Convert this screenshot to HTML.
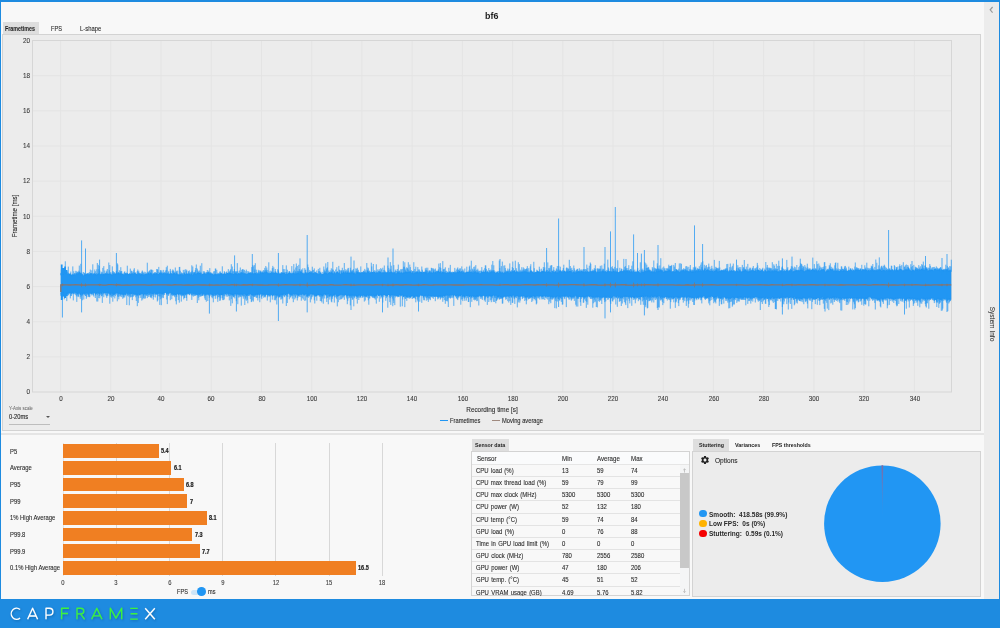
<!DOCTYPE html>
<html><head><meta charset="utf-8"><style>
*{margin:0;padding:0;box-sizing:border-box}
html,body{width:1000px;height:628px;overflow:hidden}
body{position:relative;background:#f8f8f8;font-family:"Liberation Sans", sans-serif;color:#333}
.a{position:absolute}
.bar{position:absolute;left:63.1px;height:13.5px;background:#f07f22}
</style></head><body>
<div class="a" style="left:0;top:0;width:1000px;height:1.5px;background:#1e8be0"></div>
<div class="a" style="left:0;top:0;width:1px;height:628px;background:#1e8be0"></div>
<div class="a" style="left:998.6px;top:0;width:1.4px;height:628px;background:#1e8be0"></div>

<div class="a" style="left:3px;top:22px;width:35.5px;height:12.5px;background:#dedede"></div>

<div class="a" style="left:2px;top:34px;width:979px;height:397px;background:#ececec;border:1px solid #d3d3d3"></div>
<svg class="a" style="left:0;top:0" width="1000" height="628" viewBox="0 0 1000 628">
<line x1="60.60" y1="40.5" x2="60.60" y2="392.0" stroke="#e4e4e4" stroke-width="1"/>
<line x1="110.82" y1="40.5" x2="110.82" y2="392.0" stroke="#e4e4e4" stroke-width="1"/>
<line x1="161.04" y1="40.5" x2="161.04" y2="392.0" stroke="#e4e4e4" stroke-width="1"/>
<line x1="211.26" y1="40.5" x2="211.26" y2="392.0" stroke="#e4e4e4" stroke-width="1"/>
<line x1="261.48" y1="40.5" x2="261.48" y2="392.0" stroke="#e4e4e4" stroke-width="1"/>
<line x1="311.70" y1="40.5" x2="311.70" y2="392.0" stroke="#e4e4e4" stroke-width="1"/>
<line x1="361.92" y1="40.5" x2="361.92" y2="392.0" stroke="#e4e4e4" stroke-width="1"/>
<line x1="412.14" y1="40.5" x2="412.14" y2="392.0" stroke="#e4e4e4" stroke-width="1"/>
<line x1="462.36" y1="40.5" x2="462.36" y2="392.0" stroke="#e4e4e4" stroke-width="1"/>
<line x1="512.58" y1="40.5" x2="512.58" y2="392.0" stroke="#e4e4e4" stroke-width="1"/>
<line x1="562.80" y1="40.5" x2="562.80" y2="392.0" stroke="#e4e4e4" stroke-width="1"/>
<line x1="613.02" y1="40.5" x2="613.02" y2="392.0" stroke="#e4e4e4" stroke-width="1"/>
<line x1="663.24" y1="40.5" x2="663.24" y2="392.0" stroke="#e4e4e4" stroke-width="1"/>
<line x1="713.46" y1="40.5" x2="713.46" y2="392.0" stroke="#e4e4e4" stroke-width="1"/>
<line x1="763.68" y1="40.5" x2="763.68" y2="392.0" stroke="#e4e4e4" stroke-width="1"/>
<line x1="813.90" y1="40.5" x2="813.90" y2="392.0" stroke="#e4e4e4" stroke-width="1"/>
<line x1="864.12" y1="40.5" x2="864.12" y2="392.0" stroke="#e4e4e4" stroke-width="1"/>
<line x1="914.34" y1="40.5" x2="914.34" y2="392.0" stroke="#e4e4e4" stroke-width="1"/>
<line x1="32.5" y1="356.85" x2="951.5" y2="356.85" stroke="#e4e4e4" stroke-width="1"/>
<line x1="32.5" y1="321.70" x2="951.5" y2="321.70" stroke="#e4e4e4" stroke-width="1"/>
<line x1="32.5" y1="286.55" x2="951.5" y2="286.55" stroke="#e4e4e4" stroke-width="1"/>
<line x1="32.5" y1="251.40" x2="951.5" y2="251.40" stroke="#e4e4e4" stroke-width="1"/>
<line x1="32.5" y1="216.25" x2="951.5" y2="216.25" stroke="#e4e4e4" stroke-width="1"/>
<line x1="32.5" y1="181.10" x2="951.5" y2="181.10" stroke="#e4e4e4" stroke-width="1"/>
<line x1="32.5" y1="145.95" x2="951.5" y2="145.95" stroke="#e4e4e4" stroke-width="1"/>
<line x1="32.5" y1="110.80" x2="951.5" y2="110.80" stroke="#e4e4e4" stroke-width="1"/>
<line x1="32.5" y1="75.65" x2="951.5" y2="75.65" stroke="#e4e4e4" stroke-width="1"/>
<rect x="32.5" y="40.5" width="919.0" height="351.5" fill="none" stroke="#d6d6d6" stroke-width="1"/>
<path d="M60.8,274.2 L61.3,274.5 L61.8,273.4 L62.3,273.7 L62.8,273.8 L63.3,273.3 L63.8,273.3 L64.3,273.5 L64.8,272.9 L65.3,272.3 L65.8,273.6 L66.3,273.9 L66.8,272.7 L67.3,273.6 L67.8,273.7 L68.3,272.4 L68.8,273.8 L69.3,273.9 L69.8,274.1 L70.3,274.3 L70.8,273.7 L71.3,275.1 L71.8,274.8 L72.3,275.1 L72.8,274.1 L73.3,274.9 L73.8,274.3 L74.3,274.5 L74.8,273.6 L75.3,274.6 L75.8,272.9 L76.3,273.9 L76.8,273.0 L77.3,272.6 L77.8,274.0 L78.3,273.0 L78.8,272.7 L79.3,271.4 L79.8,272.2 L80.3,273.2 L80.8,272.4 L81.3,274.3 L81.8,273.8 L82.3,275.0 L82.8,273.6 L83.3,275.2 L83.8,275.4 L84.3,273.1 L84.8,274.4 L85.3,274.4 L85.8,274.3 L86.3,273.5 L86.8,273.9 L87.3,273.1 L87.8,274.0 L88.3,274.8 L88.8,274.0 L89.3,274.2 L89.8,273.7 L90.3,273.3 L90.8,273.0 L91.3,273.3 L91.8,273.5 L92.3,273.6 L92.8,274.7 L93.3,274.0 L93.8,274.0 L94.3,273.2 L94.8,274.3 L95.3,273.7 L95.8,274.0 L96.3,274.6 L96.8,274.4 L97.3,274.0 L97.8,273.6 L98.3,273.6 L98.8,272.7 L99.3,273.3 L99.8,273.6 L100.3,273.5 L100.8,274.5 L101.3,273.2 L101.8,273.8 L102.3,273.7 L102.8,274.2 L103.3,273.4 L103.8,274.0 L104.3,274.3 L104.8,273.8 L105.3,273.4 L105.8,273.8 L106.3,273.4 L106.8,273.8 L107.3,273.8 L107.8,273.5 L108.3,274.1 L108.8,273.5 L109.3,273.3 L109.8,273.7 L110.3,273.7 L110.8,273.4 L111.3,274.2 L111.8,274.4 L112.3,274.5 L112.8,272.8 L113.3,273.9 L113.8,273.2 L114.3,271.9 L114.8,273.9 L115.3,273.9 L115.8,273.5 L116.3,271.6 L116.8,272.4 L117.3,273.5 L117.8,272.7 L118.3,273.1 L118.8,273.1 L119.3,273.0 L119.8,273.6 L120.3,271.8 L120.8,273.3 L121.3,273.8 L121.8,273.1 L122.3,273.6 L122.8,274.1 L123.3,274.0 L123.8,274.5 L124.3,274.2 L124.8,272.9 L125.3,273.6 L125.8,273.4 L126.3,273.8 L126.8,273.3 L127.3,273.1 L127.8,273.2 L128.3,274.0 L128.8,274.2 L129.3,273.0 L129.8,273.6 L130.3,273.4 L130.8,274.1 L131.3,273.6 L131.8,273.6 L132.3,273.2 L132.8,274.0 L133.3,273.2 L133.8,272.0 L134.3,272.9 L134.8,272.7 L135.3,273.8 L135.8,273.1 L136.3,273.8 L136.8,274.1 L137.3,274.3 L137.8,273.1 L138.3,272.4 L138.8,273.6 L139.3,273.4 L139.8,273.3 L140.3,274.1 L140.8,274.4 L141.3,273.4 L141.8,273.8 L142.3,274.5 L142.8,273.4 L143.3,274.4 L143.8,274.5 L144.3,274.7 L144.8,273.8 L145.3,273.8 L145.8,274.0 L146.3,273.8 L146.8,273.7 L147.3,273.7 L147.8,273.6 L148.3,272.9 L148.8,273.1 L149.3,274.0 L149.8,273.0 L150.3,272.7 L150.8,271.7 L151.3,273.5 L151.8,272.8 L152.3,274.9 L152.8,273.9 L153.3,273.7 L153.8,273.2 L154.3,273.4 L154.8,273.5 L155.3,273.7 L155.8,273.1 L156.3,273.0 L156.8,273.2 L157.3,273.4 L157.8,273.9 L158.3,273.9 L158.8,272.0 L159.3,272.7 L159.8,272.5 L160.3,273.1 L160.8,271.8 L161.3,273.2 L161.8,273.0 L162.3,273.3 L162.8,273.7 L163.3,273.0 L163.8,272.8 L164.3,273.8 L164.8,272.8 L165.3,273.0 L165.8,273.4 L166.3,272.9 L166.8,274.1 L167.3,273.2 L167.8,272.9 L168.3,273.4 L168.8,273.7 L169.3,273.9 L169.8,273.3 L170.3,272.1 L170.8,273.2 L171.3,273.2 L171.8,273.6 L172.3,273.9 L172.8,274.0 L173.3,272.7 L173.8,273.2 L174.3,273.3 L174.8,271.7 L175.3,272.2 L175.8,273.8 L176.3,272.9 L176.8,272.1 L177.3,274.6 L177.8,273.6 L178.3,274.8 L178.8,274.8 L179.3,274.4 L179.8,274.3 L180.3,273.5 L180.8,274.3 L181.3,274.2 L181.8,273.6 L182.3,273.1 L182.8,274.5 L183.3,274.9 L183.8,273.8 L184.3,273.1 L184.8,273.3 L185.3,273.7 L185.8,274.2 L186.3,273.1 L186.8,273.8 L187.3,273.6 L187.8,273.9 L188.3,273.1 L188.8,274.1 L189.3,272.8 L189.8,273.8 L190.3,274.5 L190.8,274.2 L191.3,273.8 L191.8,273.1 L192.3,273.7 L192.8,275.0 L193.3,272.9 L193.8,274.0 L194.3,272.8 L194.8,272.5 L195.3,272.4 L195.8,273.7 L196.3,273.5 L196.8,272.9 L197.3,272.9 L197.8,272.4 L198.3,273.1 L198.8,272.7 L199.3,272.9 L199.8,272.8 L200.3,272.8 L200.8,273.0 L201.3,274.2 L201.8,274.2 L202.3,273.8 L202.8,273.8 L203.3,273.9 L203.8,274.0 L204.3,273.2 L204.8,272.8 L205.3,273.5 L205.8,273.9 L206.3,273.9 L206.8,272.5 L207.3,272.6 L207.8,272.9 L208.3,272.5 L208.8,272.0 L209.3,273.2 L209.8,273.2 L210.3,273.3 L210.8,273.4 L211.3,273.9 L211.8,273.8 L212.3,273.7 L212.8,273.7 L213.3,274.4 L213.8,274.4 L214.3,273.9 L214.8,274.3 L215.3,273.7 L215.8,273.7 L216.3,274.4 L216.8,273.8 L217.3,273.7 L217.8,274.2 L218.3,273.5 L218.8,274.3 L219.3,274.1 L219.8,274.0 L220.3,273.1 L220.8,273.6 L221.3,273.3 L221.8,273.2 L222.3,273.4 L222.8,274.2 L223.3,273.0 L223.8,273.9 L224.3,273.4 L224.8,272.6 L225.3,273.6 L225.8,273.7 L226.3,273.5 L226.8,273.0 L227.3,273.1 L227.8,273.1 L228.3,272.0 L228.8,273.4 L229.3,272.4 L229.8,273.0 L230.3,272.8 L230.8,273.0 L231.3,273.3 L231.8,273.5 L232.3,272.3 L232.8,273.8 L233.3,273.9 L233.8,271.9 L234.3,273.5 L234.8,273.2 L235.3,273.1 L235.8,273.2 L236.3,273.2 L236.8,273.4 L237.3,274.1 L237.8,273.7 L238.3,272.6 L238.8,273.3 L239.3,273.4 L239.8,273.0 L240.3,273.2 L240.8,273.1 L241.3,272.7 L241.8,271.8 L242.3,272.8 L242.8,272.8 L243.3,272.8 L243.8,273.4 L244.3,272.9 L244.8,273.3 L245.3,273.8 L245.8,273.5 L246.3,273.8 L246.8,274.0 L247.3,273.3 L247.8,273.4 L248.3,272.9 L248.8,272.6 L249.3,272.9 L249.8,272.6 L250.3,273.3 L250.8,272.6 L251.3,273.5 L251.8,273.1 L252.3,273.0 L252.8,271.7 L253.3,273.4 L253.8,273.5 L254.3,271.0 L254.8,273.2 L255.3,272.8 L255.8,273.1 L256.3,271.9 L256.8,273.8 L257.3,273.2 L257.8,273.2 L258.3,272.7 L258.8,273.7 L259.3,273.7 L259.8,272.8 L260.3,272.1 L260.8,271.2 L261.3,271.6 L261.8,272.7 L262.3,272.1 L262.8,272.4 L263.3,272.4 L263.8,272.5 L264.3,271.9 L264.8,272.6 L265.3,271.5 L265.8,272.5 L266.3,271.5 L266.8,271.2 L267.3,272.6 L267.8,273.1 L268.3,272.8 L268.8,273.3 L269.3,272.9 L269.8,273.6 L270.3,272.8 L270.8,272.9 L271.3,273.1 L271.8,272.0 L272.3,272.6 L272.8,272.9 L273.3,273.1 L273.8,272.5 L274.3,272.9 L274.8,272.9 L275.3,272.2 L275.8,272.2 L276.3,272.3 L276.8,273.1 L277.3,273.1 L277.8,273.5 L278.3,272.0 L278.8,273.1 L279.3,273.3 L279.8,273.8 L280.3,273.4 L280.8,273.8 L281.3,273.1 L281.8,272.8 L282.3,273.1 L282.8,272.2 L283.3,272.3 L283.8,273.0 L284.3,271.9 L284.8,272.7 L285.3,274.0 L285.8,273.6 L286.3,273.6 L286.8,273.7 L287.3,274.1 L287.8,273.2 L288.3,273.3 L288.8,272.9 L289.3,272.7 L289.8,272.3 L290.3,272.6 L290.8,273.3 L291.3,273.1 L291.8,273.5 L292.3,273.2 L292.8,272.2 L293.3,272.9 L293.8,272.7 L294.3,273.4 L294.8,272.8 L295.3,272.1 L295.8,273.4 L296.3,273.1 L296.8,273.2 L297.3,272.7 L297.8,272.7 L298.3,271.9 L298.8,272.7 L299.3,273.6 L299.8,272.1 L300.3,271.9 L300.8,271.8 L301.3,271.6 L301.8,272.0 L302.3,272.8 L302.8,273.1 L303.3,272.3 L303.8,273.8 L304.3,273.2 L304.8,272.5 L305.3,271.9 L305.8,272.2 L306.3,273.0 L306.8,273.3 L307.3,273.5 L307.8,272.8 L308.3,272.8 L308.8,272.7 L309.3,272.2 L309.8,271.7 L310.3,272.6 L310.8,272.4 L311.3,272.8 L311.8,271.8 L312.3,273.3 L312.8,273.1 L313.3,273.0 L313.8,272.9 L314.3,273.3 L314.8,272.1 L315.3,272.5 L315.8,272.3 L316.3,272.9 L316.8,273.1 L317.3,273.6 L317.8,273.8 L318.3,274.2 L318.8,273.9 L319.3,273.6 L319.8,272.3 L320.3,272.4 L320.8,272.7 L321.3,272.8 L321.8,274.3 L322.3,274.1 L322.8,274.1 L323.3,273.7 L323.8,273.2 L324.3,272.9 L324.8,272.0 L325.3,272.3 L325.8,273.1 L326.3,272.8 L326.8,273.1 L327.3,273.9 L327.8,273.0 L328.3,272.9 L328.8,271.7 L329.3,272.6 L329.8,272.1 L330.3,272.1 L330.8,273.0 L331.3,272.1 L331.8,271.9 L332.3,273.1 L332.8,272.8 L333.3,273.5 L333.8,272.8 L334.3,271.9 L334.8,272.4 L335.3,273.5 L335.8,270.1 L336.3,272.6 L336.8,272.1 L337.3,271.7 L337.8,272.0 L338.3,272.6 L338.8,272.8 L339.3,271.8 L339.8,273.1 L340.3,274.0 L340.8,273.6 L341.3,272.6 L341.8,271.7 L342.3,271.5 L342.8,273.1 L343.3,271.4 L343.8,272.0 L344.3,272.5 L344.8,272.6 L345.3,271.9 L345.8,272.6 L346.3,271.4 L346.8,272.9 L347.3,272.5 L347.8,272.1 L348.3,272.5 L348.8,273.0 L349.3,272.5 L349.8,272.7 L350.3,272.6 L350.8,272.6 L351.3,271.4 L351.8,272.4 L352.3,272.2 L352.8,270.7 L353.3,270.8 L353.8,273.1 L354.3,273.4 L354.8,272.8 L355.3,273.4 L355.8,271.9 L356.3,271.8 L356.8,272.7 L357.3,271.9 L357.8,272.1 L358.3,272.6 L358.8,271.7 L359.3,272.6 L359.8,271.8 L360.3,273.3 L360.8,272.1 L361.3,272.8 L361.8,272.1 L362.3,272.0 L362.8,272.3 L363.3,272.2 L363.8,272.4 L364.3,272.5 L364.8,272.3 L365.3,272.6 L365.8,272.7 L366.3,272.4 L366.8,270.5 L367.3,271.0 L367.8,271.4 L368.3,270.8 L368.8,272.0 L369.3,271.0 L369.8,272.8 L370.3,272.7 L370.8,271.6 L371.3,272.3 L371.8,272.0 L372.3,272.1 L372.8,272.1 L373.3,272.2 L373.8,272.0 L374.3,272.0 L374.8,271.4 L375.3,272.9 L375.8,271.9 L376.3,271.4 L376.8,272.8 L377.3,272.6 L377.8,272.5 L378.3,271.4 L378.8,272.7 L379.3,271.6 L379.8,270.8 L380.3,271.9 L380.8,271.1 L381.3,270.1 L381.8,272.4 L382.3,272.4 L382.8,271.7 L383.3,272.3 L383.8,272.9 L384.3,272.5 L384.8,272.0 L385.3,272.0 L385.8,273.0 L386.3,272.0 L386.8,272.6 L387.3,272.4 L387.8,272.2 L388.3,270.9 L388.8,272.8 L389.3,272.6 L389.8,272.0 L390.3,271.7 L390.8,272.2 L391.3,271.3 L391.8,271.7 L392.3,271.8 L392.8,272.8 L393.3,272.2 L393.8,272.6 L394.3,272.0 L394.8,273.0 L395.3,273.2 L395.8,273.6 L396.3,272.9 L396.8,273.3 L397.3,272.1 L397.8,271.4 L398.3,272.4 L398.8,271.8 L399.3,272.5 L399.8,272.5 L400.3,272.8 L400.8,272.5 L401.3,271.4 L401.8,272.6 L402.3,272.2 L402.8,273.1 L403.3,271.9 L403.8,272.5 L404.3,272.5 L404.8,272.1 L405.3,271.4 L405.8,271.6 L406.3,272.1 L406.8,272.0 L407.3,272.1 L407.8,272.0 L408.3,271.7 L408.8,271.6 L409.3,270.9 L409.8,271.8 L410.3,271.2 L410.8,271.6 L411.3,272.8 L411.8,272.5 L412.3,272.1 L412.8,272.4 L413.3,273.3 L413.8,273.2 L414.3,273.0 L414.8,270.7 L415.3,272.5 L415.8,272.3 L416.3,272.1 L416.8,272.2 L417.3,271.8 L417.8,272.1 L418.3,271.5 L418.8,272.7 L419.3,272.1 L419.8,271.4 L420.3,271.4 L420.8,271.9 L421.3,271.9 L421.8,272.1 L422.3,272.5 L422.8,271.1 L423.3,271.7 L423.8,271.9 L424.3,271.7 L424.8,272.2 L425.3,272.1 L425.8,271.5 L426.3,271.3 L426.8,272.3 L427.3,273.5 L427.8,272.4 L428.3,272.7 L428.8,272.6 L429.3,270.4 L429.8,272.0 L430.3,270.9 L430.8,272.6 L431.3,272.2 L431.8,272.3 L432.3,272.5 L432.8,272.5 L433.3,271.5 L433.8,271.1 L434.3,271.9 L434.8,272.4 L435.3,271.6 L435.8,272.1 L436.3,272.6 L436.8,271.8 L437.3,271.9 L437.8,271.5 L438.3,270.8 L438.8,270.8 L439.3,271.8 L439.8,272.1 L440.3,271.2 L440.8,271.5 L441.3,272.6 L441.8,272.8 L442.3,271.8 L442.8,272.1 L443.3,272.1 L443.8,272.2 L444.3,272.2 L444.8,271.9 L445.3,271.1 L445.8,272.8 L446.3,273.0 L446.8,273.1 L447.3,272.8 L447.8,272.3 L448.3,272.4 L448.8,272.5 L449.3,272.0 L449.8,271.3 L450.3,272.4 L450.8,272.6 L451.3,272.6 L451.8,272.9 L452.3,273.6 L452.8,272.6 L453.3,272.0 L453.8,271.9 L454.3,272.8 L454.8,271.6 L455.3,271.0 L455.8,272.5 L456.3,272.2 L456.8,272.2 L457.3,271.3 L457.8,271.8 L458.3,272.1 L458.8,271.4 L459.3,270.8 L459.8,270.6 L460.3,271.8 L460.8,271.4 L461.3,270.8 L461.8,271.4 L462.3,271.7 L462.8,272.4 L463.3,272.2 L463.8,271.8 L464.3,272.6 L464.8,272.8 L465.3,272.9 L465.8,272.4 L466.3,272.1 L466.8,271.8 L467.3,271.7 L467.8,271.4 L468.3,272.2 L468.8,270.1 L469.3,271.2 L469.8,271.8 L470.3,272.0 L470.8,271.6 L471.3,271.5 L471.8,271.5 L472.3,271.7 L472.8,272.6 L473.3,272.4 L473.8,271.5 L474.3,271.5 L474.8,272.1 L475.3,272.0 L475.8,271.0 L476.3,271.9 L476.8,272.7 L477.3,272.3 L477.8,272.4 L478.3,272.5 L478.8,272.8 L479.3,272.6 L479.8,273.4 L480.3,273.0 L480.8,272.4 L481.3,271.0 L481.8,272.1 L482.3,271.6 L482.8,272.2 L483.3,271.6 L483.8,271.2 L484.3,271.8 L484.8,271.8 L485.3,269.9 L485.8,270.8 L486.3,272.5 L486.8,271.8 L487.3,271.1 L487.8,271.9 L488.3,272.0 L488.8,272.6 L489.3,272.6 L489.8,271.6 L490.3,271.3 L490.8,272.1 L491.3,271.1 L491.8,271.8 L492.3,271.7 L492.8,271.0 L493.3,270.8 L493.8,271.5 L494.3,271.8 L494.8,272.0 L495.3,272.7 L495.8,273.0 L496.3,272.9 L496.8,272.1 L497.3,272.3 L497.8,271.7 L498.3,272.8 L498.8,272.5 L499.3,271.2 L499.8,271.4 L500.3,271.9 L500.8,272.3 L501.3,272.2 L501.8,272.6 L502.3,272.6 L502.8,271.9 L503.3,273.0 L503.8,273.1 L504.3,272.2 L504.8,271.6 L505.3,272.4 L505.8,271.9 L506.3,272.2 L506.8,271.3 L507.3,271.2 L507.8,271.9 L508.3,272.0 L508.8,272.6 L509.3,271.0 L509.8,272.7 L510.3,271.4 L510.8,271.8 L511.3,272.3 L511.8,271.6 L512.3,271.5 L512.8,270.5 L513.3,271.6 L513.8,271.0 L514.3,269.9 L514.8,270.3 L515.3,271.7 L515.8,272.2 L516.3,271.5 L516.8,270.9 L517.3,272.1 L517.8,272.0 L518.3,271.6 L518.8,272.2 L519.3,272.2 L519.8,270.6 L520.3,272.1 L520.8,272.2 L521.3,271.6 L521.8,270.3 L522.3,271.7 L522.8,271.1 L523.3,272.0 L523.8,271.0 L524.3,271.8 L524.8,271.0 L525.3,271.1 L525.8,271.7 L526.3,270.9 L526.8,271.9 L527.3,271.8 L527.8,272.3 L528.3,272.2 L528.8,270.8 L529.3,272.5 L529.8,272.1 L530.3,269.6 L530.8,271.3 L531.3,269.7 L531.8,271.2 L532.3,271.0 L532.8,272.3 L533.3,271.0 L533.8,272.8 L534.3,272.3 L534.8,272.6 L535.3,272.1 L535.8,271.9 L536.3,271.8 L536.8,271.8 L537.3,270.5 L537.8,271.4 L538.3,271.8 L538.8,271.8 L539.3,271.5 L539.8,272.1 L540.3,272.0 L540.8,272.2 L541.3,271.1 L541.8,272.1 L542.3,271.5 L542.8,271.1 L543.3,271.2 L543.8,271.1 L544.3,271.3 L544.8,271.6 L545.3,271.6 L545.8,271.6 L546.3,271.8 L546.8,271.1 L547.3,271.9 L547.8,271.9 L548.3,271.6 L548.8,270.9 L549.3,271.5 L549.8,272.1 L550.3,271.8 L550.8,272.3 L551.3,272.4 L551.8,271.0 L552.3,271.5 L552.8,270.3 L553.3,271.7 L553.8,271.4 L554.3,271.9 L554.8,272.2 L555.3,270.9 L555.8,271.4 L556.3,272.4 L556.8,272.2 L557.3,271.7 L557.8,272.5 L558.3,272.4 L558.8,271.3 L559.3,270.6 L559.8,271.3 L560.3,270.8 L560.8,270.3 L561.3,271.8 L561.8,271.5 L562.3,271.6 L562.8,271.9 L563.3,271.0 L563.8,271.3 L564.3,270.7 L564.8,270.7 L565.3,272.0 L565.8,271.4 L566.3,271.5 L566.8,270.8 L567.3,271.1 L567.8,271.6 L568.3,271.5 L568.8,271.2 L569.3,270.8 L569.8,271.1 L570.3,271.1 L570.8,270.8 L571.3,271.7 L571.8,269.8 L572.3,270.8 L572.8,272.5 L573.3,270.4 L573.8,271.9 L574.3,272.1 L574.8,272.4 L575.3,272.5 L575.8,272.3 L576.3,271.6 L576.8,271.6 L577.3,271.7 L577.8,271.2 L578.3,271.3 L578.8,271.6 L579.3,271.1 L579.8,272.0 L580.3,272.0 L580.8,271.0 L581.3,270.4 L581.8,271.3 L582.3,270.8 L582.8,271.9 L583.3,271.4 L583.8,272.0 L584.3,272.0 L584.8,271.5 L585.3,270.2 L585.8,271.6 L586.3,272.3 L586.8,270.1 L587.3,271.5 L587.8,271.2 L588.3,271.5 L588.8,271.7 L589.3,271.5 L589.8,271.5 L590.3,270.8 L590.8,271.3 L591.3,270.6 L591.8,271.5 L592.3,270.6 L592.8,271.3 L593.3,271.0 L593.8,271.4 L594.3,271.0 L594.8,270.0 L595.3,270.9 L595.8,271.1 L596.3,271.2 L596.8,272.6 L597.3,271.9 L597.8,271.1 L598.3,271.8 L598.8,271.7 L599.3,271.9 L599.8,270.7 L600.3,271.7 L600.8,270.8 L601.3,271.4 L601.8,270.5 L602.3,270.3 L602.8,270.6 L603.3,271.3 L603.8,270.6 L604.3,271.3 L604.8,272.0 L605.3,271.8 L605.8,271.2 L606.3,271.9 L606.8,272.1 L607.3,271.1 L607.8,270.6 L608.3,270.6 L608.8,271.0 L609.3,271.5 L609.8,270.6 L610.3,271.8 L610.8,271.8 L611.3,271.9 L611.8,271.4 L612.3,271.9 L612.8,270.8 L613.3,271.0 L613.8,270.5 L614.3,271.7 L614.8,270.3 L615.3,271.2 L615.8,271.5 L616.3,271.9 L616.8,271.5 L617.3,271.7 L617.8,271.2 L618.3,272.6 L618.8,272.0 L619.3,271.8 L619.8,271.4 L620.3,271.3 L620.8,271.3 L621.3,270.6 L621.8,271.2 L622.3,270.7 L622.8,271.6 L623.3,271.1 L623.8,269.9 L624.3,271.0 L624.8,269.8 L625.3,270.5 L625.8,271.2 L626.3,269.5 L626.8,270.7 L627.3,270.3 L627.8,270.3 L628.3,271.5 L628.8,269.9 L629.3,270.8 L629.8,270.2 L630.3,272.0 L630.8,271.4 L631.3,271.0 L631.8,271.5 L632.3,272.0 L632.8,272.3 L633.3,270.9 L633.8,271.0 L634.3,271.9 L634.8,272.0 L635.3,271.6 L635.8,271.4 L636.3,270.7 L636.8,272.3 L637.3,270.8 L637.8,271.0 L638.3,271.4 L638.8,271.8 L639.3,272.6 L639.8,272.0 L640.3,271.2 L640.8,272.8 L641.3,272.0 L641.8,271.9 L642.3,271.5 L642.8,271.9 L643.3,271.9 L643.8,271.2 L644.3,270.5 L644.8,271.4 L645.3,271.0 L645.8,270.4 L646.3,270.2 L646.8,271.2 L647.3,270.6 L647.8,270.2 L648.3,269.8 L648.8,270.3 L649.3,269.7 L649.8,270.6 L650.3,271.1 L650.8,272.0 L651.3,271.9 L651.8,271.1 L652.3,271.1 L652.8,272.2 L653.3,271.2 L653.8,271.5 L654.3,271.0 L654.8,271.7 L655.3,272.3 L655.8,271.4 L656.3,270.2 L656.8,269.8 L657.3,269.6 L657.8,271.3 L658.3,270.4 L658.8,270.3 L659.3,270.6 L659.8,270.3 L660.3,269.4 L660.8,269.2 L661.3,270.5 L661.8,270.1 L662.3,271.2 L662.8,270.9 L663.3,271.8 L663.8,271.5 L664.3,271.4 L664.8,271.1 L665.3,271.1 L665.8,271.0 L666.3,271.1 L666.8,270.9 L667.3,270.7 L667.8,271.1 L668.3,270.2 L668.8,269.9 L669.3,270.0 L669.8,270.1 L670.3,270.4 L670.8,270.6 L671.3,270.6 L671.8,271.7 L672.3,271.9 L672.8,271.2 L673.3,271.2 L673.8,271.1 L674.3,271.9 L674.8,271.2 L675.3,271.3 L675.8,271.5 L676.3,269.0 L676.8,269.7 L677.3,270.4 L677.8,270.0 L678.3,270.1 L678.8,271.6 L679.3,269.7 L679.8,272.2 L680.3,270.7 L680.8,269.7 L681.3,270.7 L681.8,270.1 L682.3,269.8 L682.8,270.6 L683.3,270.1 L683.8,269.9 L684.3,270.6 L684.8,271.3 L685.3,269.7 L685.8,268.6 L686.3,270.9 L686.8,269.3 L687.3,270.8 L687.8,270.2 L688.3,271.0 L688.8,271.3 L689.3,271.6 L689.8,270.1 L690.3,270.7 L690.8,270.4 L691.3,271.2 L691.8,271.4 L692.3,271.4 L692.8,271.1 L693.3,271.2 L693.8,271.3 L694.3,271.2 L694.8,271.3 L695.3,271.1 L695.8,270.0 L696.3,270.5 L696.8,270.2 L697.3,269.4 L697.8,271.1 L698.3,269.4 L698.8,269.7 L699.3,271.0 L699.8,270.5 L700.3,270.6 L700.8,270.3 L701.3,270.9 L701.8,269.9 L702.3,269.9 L702.8,270.1 L703.3,270.5 L703.8,270.5 L704.3,269.8 L704.8,269.0 L705.3,269.5 L705.8,270.9 L706.3,269.8 L706.8,269.9 L707.3,269.5 L707.8,269.6 L708.3,270.2 L708.8,270.0 L709.3,270.9 L709.8,270.2 L710.3,271.0 L710.8,269.4 L711.3,270.4 L711.8,270.8 L712.3,270.6 L712.8,270.6 L713.3,271.9 L713.8,271.0 L714.3,270.9 L714.8,270.6 L715.3,270.3 L715.8,270.4 L716.3,269.2 L716.8,270.0 L717.3,270.4 L717.8,271.3 L718.3,271.5 L718.8,270.4 L719.3,270.9 L719.8,270.8 L720.3,270.5 L720.8,271.1 L721.3,270.7 L721.8,270.1 L722.3,270.7 L722.8,270.6 L723.3,270.3 L723.8,270.8 L724.3,270.5 L724.8,270.2 L725.3,269.9 L725.8,269.9 L726.3,270.7 L726.8,271.0 L727.3,270.6 L727.8,270.0 L728.3,270.7 L728.8,271.4 L729.3,270.6 L729.8,271.3 L730.3,270.7 L730.8,270.6 L731.3,270.4 L731.8,270.3 L732.3,270.8 L732.8,270.9 L733.3,270.6 L733.8,270.5 L734.3,270.8 L734.8,271.7 L735.3,271.9 L735.8,271.1 L736.3,270.3 L736.8,270.0 L737.3,270.9 L737.8,270.3 L738.3,271.4 L738.8,271.0 L739.3,269.3 L739.8,270.6 L740.3,271.3 L740.8,270.9 L741.3,272.1 L741.8,271.2 L742.3,271.1 L742.8,271.2 L743.3,270.7 L743.8,270.3 L744.3,270.2 L744.8,270.3 L745.3,270.0 L745.8,269.7 L746.3,270.6 L746.8,270.6 L747.3,270.9 L747.8,271.4 L748.3,271.1 L748.8,271.6 L749.3,271.1 L749.8,270.7 L750.3,271.1 L750.8,269.0 L751.3,270.7 L751.8,270.1 L752.3,270.2 L752.8,269.6 L753.3,270.6 L753.8,270.4 L754.3,271.0 L754.8,271.0 L755.3,270.2 L755.8,270.8 L756.3,271.4 L756.8,270.3 L757.3,269.5 L757.8,269.9 L758.3,270.1 L758.8,270.1 L759.3,270.6 L759.8,271.1 L760.3,271.1 L760.8,270.4 L761.3,270.3 L761.8,270.2 L762.3,269.6 L762.8,269.9 L763.3,271.2 L763.8,271.1 L764.3,271.7 L764.8,270.9 L765.3,269.5 L765.8,270.3 L766.3,271.4 L766.8,271.6 L767.3,271.1 L767.8,270.5 L768.3,270.7 L768.8,270.4 L769.3,270.7 L769.8,270.7 L770.3,271.4 L770.8,270.1 L771.3,270.8 L771.8,271.3 L772.3,270.7 L772.8,270.6 L773.3,270.9 L773.8,271.2 L774.3,270.2 L774.8,270.2 L775.3,269.0 L775.8,270.7 L776.3,270.3 L776.8,270.8 L777.3,271.6 L777.8,271.2 L778.3,271.4 L778.8,271.7 L779.3,271.6 L779.8,271.3 L780.3,270.5 L780.8,270.6 L781.3,270.3 L781.8,270.3 L782.3,270.4 L782.8,271.6 L783.3,271.0 L783.8,270.8 L784.3,269.6 L784.8,270.7 L785.3,271.0 L785.8,270.7 L786.3,270.1 L786.8,270.0 L787.3,270.8 L787.8,270.1 L788.3,270.9 L788.8,271.2 L789.3,270.9 L789.8,270.4 L790.3,270.5 L790.8,269.4 L791.3,269.9 L791.8,270.2 L792.3,270.7 L792.8,271.4 L793.3,271.1 L793.8,271.4 L794.3,271.0 L794.8,271.0 L795.3,270.8 L795.8,270.3 L796.3,270.3 L796.8,270.1 L797.3,270.7 L797.8,270.6 L798.3,269.4 L798.8,270.4 L799.3,270.6 L799.8,270.5 L800.3,269.7 L800.8,269.4 L801.3,268.7 L801.8,270.0 L802.3,270.0 L802.8,270.1 L803.3,268.9 L803.8,270.6 L804.3,271.4 L804.8,269.2 L805.3,270.9 L805.8,270.4 L806.3,269.9 L806.8,270.8 L807.3,269.1 L807.8,269.5 L808.3,270.0 L808.8,269.2 L809.3,270.3 L809.8,269.5 L810.3,270.2 L810.8,270.3 L811.3,269.9 L811.8,269.7 L812.3,269.2 L812.8,268.6 L813.3,269.8 L813.8,269.9 L814.3,270.3 L814.8,270.1 L815.3,270.5 L815.8,269.3 L816.3,270.0 L816.8,270.1 L817.3,271.3 L817.8,270.8 L818.3,270.1 L818.8,269.3 L819.3,271.0 L819.8,268.8 L820.3,270.6 L820.8,270.0 L821.3,269.9 L821.8,269.6 L822.3,269.7 L822.8,269.8 L823.3,269.1 L823.8,269.8 L824.3,269.6 L824.8,270.3 L825.3,271.4 L825.8,271.4 L826.3,269.3 L826.8,271.1 L827.3,269.7 L827.8,270.4 L828.3,270.3 L828.8,269.3 L829.3,270.5 L829.8,268.1 L830.3,268.8 L830.8,269.0 L831.3,269.8 L831.8,269.3 L832.3,269.6 L832.8,269.2 L833.3,270.0 L833.8,270.8 L834.3,271.0 L834.8,270.3 L835.3,269.6 L835.8,271.1 L836.3,270.1 L836.8,270.7 L837.3,270.3 L837.8,269.1 L838.3,269.9 L838.8,271.0 L839.3,271.0 L839.8,271.1 L840.3,269.9 L840.8,270.5 L841.3,270.6 L841.8,269.7 L842.3,270.7 L842.8,271.0 L843.3,270.3 L843.8,269.9 L844.3,270.5 L844.8,269.9 L845.3,270.5 L845.8,270.5 L846.3,270.4 L846.8,270.9 L847.3,270.9 L847.8,270.6 L848.3,270.2 L848.8,269.7 L849.3,270.4 L849.8,269.5 L850.3,269.1 L850.8,269.5 L851.3,269.5 L851.8,270.3 L852.3,269.5 L852.8,270.8 L853.3,269.9 L853.8,269.7 L854.3,270.6 L854.8,270.3 L855.3,269.5 L855.8,269.5 L856.3,269.9 L856.8,269.7 L857.3,270.1 L857.8,269.3 L858.3,269.7 L858.8,269.2 L859.3,270.0 L859.8,269.7 L860.3,269.6 L860.8,268.8 L861.3,269.7 L861.8,270.8 L862.3,269.9 L862.8,269.4 L863.3,269.9 L863.8,269.5 L864.3,269.5 L864.8,269.7 L865.3,269.0 L865.8,270.1 L866.3,269.9 L866.8,269.5 L867.3,269.9 L867.8,270.9 L868.3,269.7 L868.8,270.0 L869.3,270.8 L869.8,269.6 L870.3,269.6 L870.8,270.3 L871.3,269.0 L871.8,270.2 L872.3,269.7 L872.8,269.0 L873.3,270.1 L873.8,270.2 L874.3,270.3 L874.8,269.9 L875.3,270.0 L875.8,270.5 L876.3,270.0 L876.8,270.6 L877.3,270.3 L877.8,269.1 L878.3,269.8 L878.8,268.9 L879.3,268.4 L879.8,269.6 L880.3,269.7 L880.8,269.6 L881.3,270.9 L881.8,270.4 L882.3,270.5 L882.8,270.0 L883.3,269.7 L883.8,269.7 L884.3,270.2 L884.8,270.1 L885.3,270.4 L885.8,268.9 L886.3,269.9 L886.8,270.0 L887.3,269.1 L887.8,270.6 L888.3,270.1 L888.8,270.4 L889.3,269.3 L889.8,270.3 L890.3,269.7 L890.8,270.2 L891.3,270.3 L891.8,269.5 L892.3,270.0 L892.8,269.6 L893.3,270.1 L893.8,270.5 L894.3,269.6 L894.8,268.6 L895.3,269.8 L895.8,270.5 L896.3,268.5 L896.8,268.4 L897.3,270.4 L897.8,269.8 L898.3,270.4 L898.8,270.1 L899.3,269.2 L899.8,269.2 L900.3,269.1 L900.8,267.4 L901.3,269.2 L901.8,269.5 L902.3,269.4 L902.8,270.5 L903.3,270.3 L903.8,270.1 L904.3,270.3 L904.8,269.3 L905.3,269.3 L905.8,269.9 L906.3,268.2 L906.8,269.5 L907.3,269.4 L907.8,268.9 L908.3,267.2 L908.8,268.1 L909.3,269.5 L909.8,270.0 L910.3,270.0 L910.8,270.4 L911.3,270.6 L911.8,271.0 L912.3,268.9 L912.8,270.1 L913.3,270.3 L913.8,269.8 L914.3,270.9 L914.8,269.9 L915.3,268.8 L915.8,269.3 L916.3,269.5 L916.8,270.0 L917.3,268.8 L917.8,270.0 L918.3,270.6 L918.8,269.4 L919.3,269.5 L919.8,270.0 L920.3,269.7 L920.8,269.6 L921.3,268.7 L921.8,268.5 L922.3,267.6 L922.8,269.3 L923.3,269.8 L923.8,269.2 L924.3,269.7 L924.8,268.4 L925.3,268.9 L925.8,269.5 L926.3,268.8 L926.8,268.3 L927.3,269.7 L927.8,270.4 L928.3,269.9 L928.8,270.4 L929.3,270.0 L929.8,269.4 L930.3,269.3 L930.8,270.1 L931.3,269.3 L931.8,269.4 L932.3,269.5 L932.8,270.1 L933.3,270.5 L933.8,269.0 L934.3,268.6 L934.8,269.1 L935.3,268.7 L935.8,268.8 L936.3,268.9 L936.8,269.7 L937.3,268.1 L937.8,269.4 L938.3,269.3 L938.8,270.0 L939.3,268.5 L939.8,269.0 L940.3,270.5 L940.8,268.1 L941.3,269.6 L941.8,269.9 L942.3,270.0 L942.8,269.5 L943.3,270.1 L943.8,269.3 L944.3,270.5 L944.8,269.3 L945.3,269.5 L945.8,270.3 L946.3,269.7 L946.8,269.6 L947.3,269.4 L947.8,268.6 L948.3,270.2 L948.8,270.4 L949.3,270.4 L949.8,269.7 L950.3,270.0 L950.8,270.5 L951.3,270.7 L951.3,299.7 L950.8,299.8 L950.3,300.7 L949.8,299.9 L949.3,299.4 L948.8,299.8 L948.3,299.6 L947.8,300.1 L947.3,300.8 L946.8,299.3 L946.3,299.5 L945.8,300.0 L945.3,298.8 L944.8,299.3 L944.3,299.1 L943.8,298.8 L943.3,299.0 L942.8,298.8 L942.3,300.0 L941.8,300.3 L941.3,299.8 L940.8,300.3 L940.3,299.9 L939.8,299.4 L939.3,301.6 L938.8,300.9 L938.3,299.1 L937.8,298.9 L937.3,299.1 L936.8,300.7 L936.3,301.7 L935.8,300.2 L935.3,299.8 L934.8,301.6 L934.3,300.6 L933.8,299.1 L933.3,298.4 L932.8,298.3 L932.3,299.5 L931.8,298.6 L931.3,298.0 L930.8,298.7 L930.3,299.5 L929.8,298.8 L929.3,299.4 L928.8,299.2 L928.3,299.3 L927.8,299.5 L927.3,300.6 L926.8,298.8 L926.3,299.0 L925.8,299.7 L925.3,300.3 L924.8,299.8 L924.3,299.3 L923.8,298.7 L923.3,299.4 L922.8,298.4 L922.3,299.8 L921.8,298.6 L921.3,298.9 L920.8,301.0 L920.3,299.6 L919.8,300.1 L919.3,300.7 L918.8,300.3 L918.3,299.5 L917.8,299.7 L917.3,299.4 L916.8,299.5 L916.3,300.4 L915.8,299.9 L915.3,299.5 L914.8,298.9 L914.3,299.1 L913.8,299.1 L913.3,299.8 L912.8,298.6 L912.3,298.8 L911.8,299.2 L911.3,298.8 L910.8,299.4 L910.3,298.7 L909.8,298.9 L909.3,298.8 L908.8,298.3 L908.3,299.3 L907.8,298.7 L907.3,298.9 L906.8,299.8 L906.3,300.4 L905.8,300.0 L905.3,300.5 L904.8,299.3 L904.3,299.4 L903.8,299.0 L903.3,298.6 L902.8,299.7 L902.3,299.6 L901.8,299.2 L901.3,298.4 L900.8,298.3 L900.3,298.9 L899.8,298.2 L899.3,299.0 L898.8,301.6 L898.3,298.6 L897.8,298.6 L897.3,299.4 L896.8,298.8 L896.3,298.7 L895.8,299.0 L895.3,299.3 L894.8,298.7 L894.3,299.2 L893.8,299.9 L893.3,299.2 L892.8,299.2 L892.3,298.9 L891.8,299.2 L891.3,298.5 L890.8,298.5 L890.3,299.0 L889.8,298.9 L889.3,301.4 L888.8,299.5 L888.3,298.4 L887.8,298.3 L887.3,298.1 L886.8,298.0 L886.3,298.6 L885.8,298.2 L885.3,299.2 L884.8,298.5 L884.3,298.4 L883.8,299.6 L883.3,299.5 L882.8,300.0 L882.3,299.8 L881.8,298.5 L881.3,299.5 L880.8,298.8 L880.3,299.8 L879.8,300.3 L879.3,299.9 L878.8,299.7 L878.3,300.0 L877.8,299.6 L877.3,300.0 L876.8,299.6 L876.3,298.8 L875.8,299.6 L875.3,298.5 L874.8,300.1 L874.3,298.5 L873.8,298.8 L873.3,298.0 L872.8,298.7 L872.3,298.1 L871.8,298.9 L871.3,298.6 L870.8,297.5 L870.3,297.8 L869.8,298.4 L869.3,296.8 L868.8,297.1 L868.3,297.6 L867.8,298.7 L867.3,298.5 L866.8,298.8 L866.3,298.9 L865.8,299.0 L865.3,298.8 L864.8,299.5 L864.3,300.2 L863.8,299.6 L863.3,298.5 L862.8,298.3 L862.3,297.7 L861.8,299.8 L861.3,298.9 L860.8,298.4 L860.3,300.8 L859.8,299.0 L859.3,298.5 L858.8,298.8 L858.3,299.3 L857.8,298.6 L857.3,298.9 L856.8,298.8 L856.3,299.1 L855.8,298.3 L855.3,298.3 L854.8,298.5 L854.3,298.5 L853.8,298.0 L853.3,298.4 L852.8,298.4 L852.3,299.6 L851.8,298.1 L851.3,298.2 L850.8,298.6 L850.3,298.5 L849.8,298.0 L849.3,298.2 L848.8,298.4 L848.3,298.5 L847.8,298.1 L847.3,298.5 L846.8,298.8 L846.3,298.5 L845.8,298.6 L845.3,298.8 L844.8,298.6 L844.3,299.1 L843.8,298.8 L843.3,298.3 L842.8,298.0 L842.3,298.4 L841.8,299.6 L841.3,299.4 L840.8,299.7 L840.3,298.8 L839.8,298.8 L839.3,298.6 L838.8,298.3 L838.3,300.2 L837.8,298.1 L837.3,297.5 L836.8,298.1 L836.3,298.3 L835.8,297.5 L835.3,297.7 L834.8,299.3 L834.3,298.3 L833.8,297.8 L833.3,297.8 L832.8,297.9 L832.3,298.1 L831.8,298.8 L831.3,298.8 L830.8,298.7 L830.3,298.1 L829.8,298.7 L829.3,299.2 L828.8,299.5 L828.3,297.6 L827.8,298.4 L827.3,297.6 L826.8,298.8 L826.3,298.7 L825.8,299.7 L825.3,298.7 L824.8,298.9 L824.3,299.5 L823.8,298.9 L823.3,299.0 L822.8,298.9 L822.3,297.1 L821.8,297.7 L821.3,298.8 L820.8,298.1 L820.3,299.7 L819.8,299.4 L819.3,299.2 L818.8,298.3 L818.3,298.0 L817.8,298.1 L817.3,298.4 L816.8,298.9 L816.3,299.3 L815.8,298.8 L815.3,299.5 L814.8,298.7 L814.3,298.6 L813.8,299.0 L813.3,298.8 L812.8,299.5 L812.3,298.6 L811.8,298.2 L811.3,298.1 L810.8,297.4 L810.3,298.3 L809.8,297.9 L809.3,297.6 L808.8,298.2 L808.3,297.8 L807.8,299.0 L807.3,299.0 L806.8,298.2 L806.3,299.5 L805.8,298.6 L805.3,299.1 L804.8,298.3 L804.3,298.3 L803.8,298.2 L803.3,297.9 L802.8,298.5 L802.3,299.3 L801.8,299.2 L801.3,299.4 L800.8,298.6 L800.3,299.2 L799.8,298.6 L799.3,300.0 L798.8,298.9 L798.3,298.7 L797.8,299.1 L797.3,298.2 L796.8,298.6 L796.3,299.5 L795.8,298.3 L795.3,299.2 L794.8,298.9 L794.3,297.0 L793.8,297.9 L793.3,299.1 L792.8,298.1 L792.3,298.1 L791.8,298.2 L791.3,297.0 L790.8,297.5 L790.3,297.4 L789.8,297.8 L789.3,298.0 L788.8,298.1 L788.3,298.5 L787.8,299.4 L787.3,297.5 L786.8,297.3 L786.3,298.4 L785.8,297.7 L785.3,298.0 L784.8,297.7 L784.3,297.7 L783.8,297.2 L783.3,298.3 L782.8,297.9 L782.3,298.1 L781.8,297.4 L781.3,297.7 L780.8,298.1 L780.3,298.0 L779.8,298.6 L779.3,298.6 L778.8,297.6 L778.3,298.5 L777.8,298.8 L777.3,298.3 L776.8,298.3 L776.3,298.4 L775.8,298.0 L775.3,298.0 L774.8,298.6 L774.3,298.5 L773.8,299.2 L773.3,298.9 L772.8,297.3 L772.3,297.4 L771.8,298.4 L771.3,298.1 L770.8,299.1 L770.3,299.3 L769.8,298.5 L769.3,299.5 L768.8,299.4 L768.3,298.3 L767.8,298.7 L767.3,299.2 L766.8,298.4 L766.3,297.6 L765.8,298.5 L765.3,298.3 L764.8,299.5 L764.3,299.0 L763.8,298.1 L763.3,297.8 L762.8,298.1 L762.3,298.0 L761.8,298.4 L761.3,298.4 L760.8,297.9 L760.3,299.0 L759.8,298.9 L759.3,297.9 L758.8,298.4 L758.3,298.2 L757.8,298.4 L757.3,297.0 L756.8,298.3 L756.3,297.0 L755.8,296.9 L755.3,297.3 L754.8,298.0 L754.3,297.5 L753.8,297.7 L753.3,298.4 L752.8,297.5 L752.3,298.3 L751.8,298.8 L751.3,297.5 L750.8,299.5 L750.3,298.5 L749.8,297.6 L749.3,299.8 L748.8,297.9 L748.3,297.6 L747.8,298.0 L747.3,298.6 L746.8,298.3 L746.3,297.2 L745.8,297.5 L745.3,298.2 L744.8,297.8 L744.3,297.1 L743.8,297.9 L743.3,298.4 L742.8,299.1 L742.3,298.3 L741.8,299.8 L741.3,297.8 L740.8,297.8 L740.3,297.8 L739.8,297.6 L739.3,299.2 L738.8,298.4 L738.3,297.9 L737.8,298.6 L737.3,297.9 L736.8,298.2 L736.3,297.7 L735.8,298.0 L735.3,297.6 L734.8,299.6 L734.3,299.3 L733.8,298.0 L733.3,298.6 L732.8,297.9 L732.3,297.3 L731.8,298.1 L731.3,298.0 L730.8,298.4 L730.3,299.0 L729.8,298.7 L729.3,298.5 L728.8,299.7 L728.3,298.7 L727.8,298.2 L727.3,298.2 L726.8,298.1 L726.3,298.9 L725.8,297.9 L725.3,299.2 L724.8,297.1 L724.3,298.1 L723.8,297.4 L723.3,297.3 L722.8,298.6 L722.3,297.3 L721.8,298.0 L721.3,298.2 L720.8,298.9 L720.3,298.5 L719.8,298.1 L719.3,298.3 L718.8,298.2 L718.3,297.5 L717.8,298.3 L717.3,296.5 L716.8,297.0 L716.3,297.7 L715.8,297.4 L715.3,297.3 L714.8,297.9 L714.3,298.1 L713.8,298.2 L713.3,297.8 L712.8,297.0 L712.3,296.9 L711.8,296.2 L711.3,296.0 L710.8,296.9 L710.3,297.4 L709.8,297.2 L709.3,297.3 L708.8,296.9 L708.3,297.7 L707.8,297.8 L707.3,298.2 L706.8,298.2 L706.3,297.7 L705.8,297.9 L705.3,299.0 L704.8,296.5 L704.3,296.3 L703.8,296.4 L703.3,296.2 L702.8,297.2 L702.3,297.7 L701.8,298.1 L701.3,298.6 L700.8,296.9 L700.3,298.2 L699.8,297.7 L699.3,296.7 L698.8,297.6 L698.3,297.9 L697.8,297.6 L697.3,298.0 L696.8,298.3 L696.3,299.6 L695.8,298.1 L695.3,297.5 L694.8,299.4 L694.3,298.6 L693.8,298.7 L693.3,297.7 L692.8,298.3 L692.3,297.7 L691.8,298.2 L691.3,297.7 L690.8,298.4 L690.3,297.6 L689.8,297.8 L689.3,297.4 L688.8,296.9 L688.3,296.9 L687.8,297.1 L687.3,297.6 L686.8,299.1 L686.3,298.5 L685.8,297.5 L685.3,296.5 L684.8,297.0 L684.3,297.4 L683.8,297.9 L683.3,297.2 L682.8,297.0 L682.3,297.1 L681.8,296.8 L681.3,297.9 L680.8,297.3 L680.3,298.0 L679.8,298.3 L679.3,297.8 L678.8,297.8 L678.3,297.9 L677.8,298.2 L677.3,297.5 L676.8,297.0 L676.3,298.1 L675.8,297.1 L675.3,297.1 L674.8,298.4 L674.3,297.6 L673.8,298.5 L673.3,298.7 L672.8,297.4 L672.3,297.5 L671.8,298.2 L671.3,297.6 L670.8,297.0 L670.3,297.7 L669.8,297.7 L669.3,297.5 L668.8,297.7 L668.3,298.1 L667.8,296.7 L667.3,297.9 L666.8,297.1 L666.3,297.4 L665.8,297.0 L665.3,297.3 L664.8,298.3 L664.3,297.4 L663.8,297.7 L663.3,297.7 L662.8,298.0 L662.3,297.7 L661.8,296.9 L661.3,298.6 L660.8,298.1 L660.3,297.9 L659.8,296.8 L659.3,296.5 L658.8,296.0 L658.3,296.2 L657.8,297.0 L657.3,297.1 L656.8,297.7 L656.3,296.9 L655.8,297.9 L655.3,296.6 L654.8,296.6 L654.3,298.9 L653.8,296.7 L653.3,297.6 L652.8,297.0 L652.3,297.5 L651.8,295.9 L651.3,296.7 L650.8,297.0 L650.3,298.8 L649.8,297.4 L649.3,297.4 L648.8,298.1 L648.3,296.7 L647.8,296.9 L647.3,297.4 L646.8,297.4 L646.3,296.1 L645.8,297.0 L645.3,296.8 L644.8,296.3 L644.3,297.1 L643.8,297.3 L643.3,297.5 L642.8,296.6 L642.3,296.8 L641.8,297.0 L641.3,296.9 L640.8,297.1 L640.3,297.5 L639.8,297.3 L639.3,297.2 L638.8,297.1 L638.3,297.3 L637.8,298.6 L637.3,297.7 L636.8,297.2 L636.3,297.4 L635.8,296.8 L635.3,297.7 L634.8,297.9 L634.3,297.9 L633.8,297.5 L633.3,297.9 L632.8,297.7 L632.3,297.1 L631.8,299.0 L631.3,297.8 L630.8,297.7 L630.3,296.8 L629.8,297.9 L629.3,296.8 L628.8,297.5 L628.3,297.2 L627.8,297.1 L627.3,296.6 L626.8,297.1 L626.3,296.7 L625.8,296.9 L625.3,296.7 L624.8,296.7 L624.3,297.7 L623.8,296.7 L623.3,296.9 L622.8,298.4 L622.3,297.9 L621.8,297.3 L621.3,298.2 L620.8,298.1 L620.3,298.3 L619.8,296.7 L619.3,297.2 L618.8,297.1 L618.3,298.1 L617.8,296.2 L617.3,296.6 L616.8,297.3 L616.3,297.3 L615.8,297.8 L615.3,297.0 L614.8,296.3 L614.3,297.3 L613.8,296.3 L613.3,296.5 L612.8,297.3 L612.3,297.3 L611.8,297.7 L611.3,298.2 L610.8,297.5 L610.3,298.2 L609.8,298.3 L609.3,297.7 L608.8,297.7 L608.3,297.5 L607.8,297.7 L607.3,296.4 L606.8,297.9 L606.3,297.5 L605.8,297.3 L605.3,298.0 L604.8,296.9 L604.3,298.3 L603.8,297.5 L603.3,297.3 L602.8,297.4 L602.3,298.0 L601.8,299.2 L601.3,297.9 L600.8,297.5 L600.3,298.9 L599.8,297.3 L599.3,298.1 L598.8,297.2 L598.3,297.3 L597.8,297.5 L597.3,297.4 L596.8,296.9 L596.3,297.9 L595.8,297.2 L595.3,297.4 L594.8,298.6 L594.3,297.3 L593.8,298.1 L593.3,297.5 L592.8,297.9 L592.3,297.0 L591.8,297.8 L591.3,296.9 L590.8,296.5 L590.3,296.4 L589.8,296.6 L589.3,297.2 L588.8,296.9 L588.3,296.0 L587.8,297.9 L587.3,296.6 L586.8,296.5 L586.3,296.9 L585.8,297.2 L585.3,297.2 L584.8,297.2 L584.3,298.5 L583.8,297.4 L583.3,297.5 L582.8,296.7 L582.3,297.0 L581.8,297.1 L581.3,297.5 L580.8,297.1 L580.3,297.2 L579.8,297.0 L579.3,296.7 L578.8,297.1 L578.3,297.3 L577.8,297.4 L577.3,298.2 L576.8,296.8 L576.3,297.0 L575.8,295.8 L575.3,296.3 L574.8,298.2 L574.3,296.6 L573.8,296.7 L573.3,297.4 L572.8,297.4 L572.3,297.5 L571.8,298.4 L571.3,297.4 L570.8,297.1 L570.3,296.9 L569.8,296.8 L569.3,296.6 L568.8,297.5 L568.3,297.2 L567.8,296.9 L567.3,296.7 L566.8,295.8 L566.3,296.1 L565.8,296.8 L565.3,295.9 L564.8,296.8 L564.3,296.4 L563.8,296.5 L563.3,296.3 L562.8,296.5 L562.3,296.4 L561.8,296.4 L561.3,297.3 L560.8,298.4 L560.3,296.8 L559.8,297.4 L559.3,296.8 L558.8,297.4 L558.3,296.7 L557.8,296.3 L557.3,296.7 L556.8,297.2 L556.3,297.4 L555.8,298.0 L555.3,297.6 L554.8,297.4 L554.3,296.7 L553.8,297.1 L553.3,298.8 L552.8,297.9 L552.3,297.2 L551.8,296.8 L551.3,297.3 L550.8,297.3 L550.3,298.1 L549.8,296.8 L549.3,296.8 L548.8,296.7 L548.3,297.1 L547.8,297.0 L547.3,296.7 L546.8,296.2 L546.3,296.2 L545.8,296.7 L545.3,297.3 L544.8,296.3 L544.3,296.4 L543.8,296.4 L543.3,296.6 L542.8,296.9 L542.3,296.4 L541.8,296.4 L541.3,296.8 L540.8,296.6 L540.3,296.3 L539.8,296.7 L539.3,296.7 L538.8,296.4 L538.3,296.3 L537.8,296.2 L537.3,296.7 L536.8,296.2 L536.3,296.3 L535.8,297.1 L535.3,296.7 L534.8,296.7 L534.3,297.1 L533.8,296.9 L533.3,295.9 L532.8,296.3 L532.3,297.3 L531.8,297.3 L531.3,297.5 L530.8,296.9 L530.3,298.0 L529.8,297.4 L529.3,297.4 L528.8,298.0 L528.3,296.4 L527.8,297.3 L527.3,296.9 L526.8,297.2 L526.3,297.5 L525.8,297.9 L525.3,297.5 L524.8,297.4 L524.3,296.6 L523.8,296.1 L523.3,296.6 L522.8,296.6 L522.3,296.8 L521.8,296.4 L521.3,296.6 L520.8,296.4 L520.3,296.8 L519.8,297.5 L519.3,296.6 L518.8,298.9 L518.3,297.1 L517.8,296.3 L517.3,296.4 L516.8,296.3 L516.3,296.3 L515.8,296.6 L515.3,297.0 L514.8,298.6 L514.3,297.4 L513.8,296.4 L513.3,295.4 L512.8,295.8 L512.3,296.6 L511.8,296.7 L511.3,297.3 L510.8,296.9 L510.3,295.9 L509.8,295.9 L509.3,296.9 L508.8,296.1 L508.3,296.7 L507.8,296.3 L507.3,296.3 L506.8,296.8 L506.3,296.7 L505.8,296.5 L505.3,296.7 L504.8,296.7 L504.3,296.1 L503.8,297.1 L503.3,297.4 L502.8,298.5 L502.3,298.0 L501.8,297.3 L501.3,297.8 L500.8,297.6 L500.3,297.1 L499.8,297.0 L499.3,296.2 L498.8,296.9 L498.3,296.9 L497.8,297.6 L497.3,297.0 L496.8,297.7 L496.3,296.0 L495.8,295.4 L495.3,295.9 L494.8,296.0 L494.3,297.2 L493.8,295.5 L493.3,295.6 L492.8,296.0 L492.3,296.5 L491.8,296.6 L491.3,298.3 L490.8,296.2 L490.3,296.4 L489.8,295.9 L489.3,296.8 L488.8,295.7 L488.3,297.3 L487.8,296.2 L487.3,298.0 L486.8,296.8 L486.3,296.3 L485.8,296.8 L485.3,296.8 L484.8,296.1 L484.3,296.4 L483.8,296.0 L483.3,295.7 L482.8,296.1 L482.3,296.2 L481.8,296.4 L481.3,297.1 L480.8,296.5 L480.3,296.3 L479.8,295.8 L479.3,296.0 L478.8,296.5 L478.3,296.2 L477.8,296.3 L477.3,296.9 L476.8,296.9 L476.3,296.4 L475.8,297.0 L475.3,297.2 L474.8,296.6 L474.3,298.5 L473.8,296.7 L473.3,296.9 L472.8,296.0 L472.3,296.2 L471.8,297.3 L471.3,297.0 L470.8,296.3 L470.3,296.2 L469.8,297.0 L469.3,296.9 L468.8,296.6 L468.3,295.8 L467.8,296.3 L467.3,297.1 L466.8,296.1 L466.3,296.2 L465.8,295.7 L465.3,296.7 L464.8,297.2 L464.3,296.9 L463.8,297.2 L463.3,296.1 L462.8,296.5 L462.3,297.0 L461.8,296.8 L461.3,295.1 L460.8,296.3 L460.3,295.9 L459.8,296.5 L459.3,295.5 L458.8,296.9 L458.3,295.7 L457.8,296.9 L457.3,295.6 L456.8,296.0 L456.3,296.2 L455.8,296.8 L455.3,296.2 L454.8,295.2 L454.3,295.2 L453.8,295.7 L453.3,296.3 L452.8,296.7 L452.3,295.2 L451.8,295.2 L451.3,296.4 L450.8,295.2 L450.3,295.4 L449.8,295.9 L449.3,295.4 L448.8,295.4 L448.3,296.0 L447.8,295.6 L447.3,295.4 L446.8,295.4 L446.3,294.8 L445.8,296.0 L445.3,295.4 L444.8,296.5 L444.3,296.9 L443.8,295.8 L443.3,296.1 L442.8,296.8 L442.3,298.3 L441.8,296.1 L441.3,297.3 L440.8,296.6 L440.3,296.9 L439.8,296.8 L439.3,296.2 L438.8,296.7 L438.3,296.9 L437.8,297.2 L437.3,297.0 L436.8,296.2 L436.3,296.6 L435.8,296.8 L435.3,296.5 L434.8,296.7 L434.3,296.5 L433.8,296.3 L433.3,297.0 L432.8,296.2 L432.3,296.7 L431.8,296.2 L431.3,296.8 L430.8,296.3 L430.3,296.2 L429.8,296.1 L429.3,295.7 L428.8,296.5 L428.3,295.8 L427.8,296.4 L427.3,297.2 L426.8,296.5 L426.3,295.7 L425.8,297.1 L425.3,295.9 L424.8,296.4 L424.3,296.2 L423.8,296.5 L423.3,297.5 L422.8,296.4 L422.3,295.4 L421.8,295.9 L421.3,295.4 L420.8,295.3 L420.3,295.9 L419.8,296.4 L419.3,296.1 L418.8,296.8 L418.3,296.2 L417.8,297.5 L417.3,296.4 L416.8,296.8 L416.3,296.7 L415.8,296.0 L415.3,296.8 L414.8,297.3 L414.3,297.5 L413.8,296.8 L413.3,297.9 L412.8,296.4 L412.3,296.2 L411.8,295.9 L411.3,296.8 L410.8,297.0 L410.3,297.5 L409.8,297.3 L409.3,297.1 L408.8,297.3 L408.3,296.6 L407.8,297.7 L407.3,296.9 L406.8,297.0 L406.3,297.9 L405.8,296.2 L405.3,296.3 L404.8,298.2 L404.3,296.2 L403.8,296.9 L403.3,296.8 L402.8,295.8 L402.3,295.3 L401.8,295.7 L401.3,295.6 L400.8,295.8 L400.3,295.7 L399.8,294.8 L399.3,296.3 L398.8,296.6 L398.3,296.1 L397.8,296.1 L397.3,296.7 L396.8,296.2 L396.3,296.0 L395.8,295.5 L395.3,296.0 L394.8,295.9 L394.3,295.4 L393.8,296.7 L393.3,295.3 L392.8,295.8 L392.3,295.1 L391.8,295.2 L391.3,295.6 L390.8,296.0 L390.3,295.7 L389.8,295.6 L389.3,295.5 L388.8,295.0 L388.3,295.1 L387.8,297.1 L387.3,296.1 L386.8,296.2 L386.3,296.2 L385.8,295.8 L385.3,295.5 L384.8,295.4 L384.3,295.1 L383.8,295.2 L383.3,294.9 L382.8,295.4 L382.3,295.1 L381.8,296.4 L381.3,295.8 L380.8,294.7 L380.3,295.7 L379.8,296.2 L379.3,295.5 L378.8,295.9 L378.3,295.9 L377.8,295.1 L377.3,294.6 L376.8,296.6 L376.3,295.8 L375.8,295.9 L375.3,296.1 L374.8,296.7 L374.3,296.5 L373.8,295.9 L373.3,295.4 L372.8,296.4 L372.3,295.7 L371.8,296.0 L371.3,295.4 L370.8,295.4 L370.3,295.5 L369.8,295.5 L369.3,295.4 L368.8,296.1 L368.3,296.1 L367.8,295.1 L367.3,295.5 L366.8,296.8 L366.3,296.5 L365.8,296.5 L365.3,297.2 L364.8,296.1 L364.3,296.7 L363.8,295.3 L363.3,296.0 L362.8,295.8 L362.3,296.2 L361.8,295.4 L361.3,295.8 L360.8,296.8 L360.3,297.2 L359.8,296.8 L359.3,295.5 L358.8,295.8 L358.3,297.3 L357.8,296.7 L357.3,296.7 L356.8,296.3 L356.3,297.0 L355.8,295.6 L355.3,296.4 L354.8,296.4 L354.3,295.9 L353.8,296.3 L353.3,295.5 L352.8,296.1 L352.3,295.5 L351.8,295.9 L351.3,295.6 L350.8,296.1 L350.3,295.8 L349.8,296.8 L349.3,295.9 L348.8,295.4 L348.3,295.1 L347.8,296.0 L347.3,296.3 L346.8,295.7 L346.3,296.1 L345.8,295.4 L345.3,294.9 L344.8,295.9 L344.3,295.4 L343.8,295.4 L343.3,295.8 L342.8,295.3 L342.3,295.3 L341.8,294.7 L341.3,295.5 L340.8,295.1 L340.3,294.8 L339.8,295.1 L339.3,296.1 L338.8,296.0 L338.3,296.3 L337.8,296.1 L337.3,296.7 L336.8,296.3 L336.3,296.2 L335.8,294.8 L335.3,294.7 L334.8,294.9 L334.3,295.7 L333.8,295.5 L333.3,295.3 L332.8,296.0 L332.3,297.0 L331.8,296.3 L331.3,295.5 L330.8,295.9 L330.3,295.3 L329.8,296.3 L329.3,296.3 L328.8,296.0 L328.3,294.4 L327.8,294.7 L327.3,294.5 L326.8,296.2 L326.3,294.7 L325.8,294.6 L325.3,294.9 L324.8,294.4 L324.3,294.3 L323.8,294.8 L323.3,296.4 L322.8,296.4 L322.3,296.4 L321.8,295.9 L321.3,295.6 L320.8,295.9 L320.3,294.8 L319.8,296.5 L319.3,295.0 L318.8,296.1 L318.3,294.9 L317.8,294.7 L317.3,295.5 L316.8,295.9 L316.3,296.5 L315.8,296.8 L315.3,296.1 L314.8,295.5 L314.3,296.2 L313.8,294.2 L313.3,294.8 L312.8,294.9 L312.3,294.3 L311.8,294.3 L311.3,294.1 L310.8,294.1 L310.3,295.2 L309.8,294.8 L309.3,296.1 L308.8,296.0 L308.3,294.8 L307.8,297.4 L307.3,295.9 L306.8,295.8 L306.3,294.3 L305.8,294.3 L305.3,294.4 L304.8,295.4 L304.3,295.0 L303.8,294.6 L303.3,296.0 L302.8,293.8 L302.3,294.7 L301.8,294.7 L301.3,295.1 L300.8,295.5 L300.3,294.7 L299.8,294.8 L299.3,295.8 L298.8,295.2 L298.3,295.5 L297.8,294.8 L297.3,295.1 L296.8,294.9 L296.3,294.5 L295.8,294.1 L295.3,294.4 L294.8,294.5 L294.3,294.7 L293.8,294.1 L293.3,295.5 L292.8,294.6 L292.3,295.3 L291.8,295.7 L291.3,294.9 L290.8,294.7 L290.3,295.5 L289.8,295.0 L289.3,294.3 L288.8,294.2 L288.3,293.4 L287.8,294.2 L287.3,294.5 L286.8,294.2 L286.3,295.6 L285.8,295.5 L285.3,295.1 L284.8,296.0 L284.3,294.2 L283.8,295.3 L283.3,294.6 L282.8,295.1 L282.3,295.5 L281.8,294.7 L281.3,295.8 L280.8,294.9 L280.3,295.7 L279.8,296.4 L279.3,297.1 L278.8,295.9 L278.3,295.4 L277.8,296.5 L277.3,295.2 L276.8,296.7 L276.3,295.6 L275.8,295.3 L275.3,295.1 L274.8,295.1 L274.3,294.6 L273.8,295.0 L273.3,295.1 L272.8,295.9 L272.3,296.4 L271.8,294.8 L271.3,295.5 L270.8,295.3 L270.3,294.8 L269.8,294.7 L269.3,295.5 L268.8,295.2 L268.3,295.1 L267.8,295.4 L267.3,295.5 L266.8,294.6 L266.3,294.7 L265.8,295.2 L265.3,296.2 L264.8,295.5 L264.3,294.8 L263.8,294.8 L263.3,294.7 L262.8,294.7 L262.3,294.5 L261.8,294.3 L261.3,296.0 L260.8,294.6 L260.3,294.5 L259.8,295.0 L259.3,295.4 L258.8,295.5 L258.3,294.1 L257.8,294.9 L257.3,294.9 L256.8,295.2 L256.3,294.5 L255.8,295.2 L255.3,295.5 L254.8,296.0 L254.3,295.0 L253.8,296.1 L253.3,295.2 L252.8,296.3 L252.3,295.4 L251.8,295.0 L251.3,295.4 L250.8,294.0 L250.3,294.8 L249.8,294.7 L249.3,294.7 L248.8,294.5 L248.3,295.9 L247.8,294.9 L247.3,295.5 L246.8,295.8 L246.3,296.4 L245.8,295.1 L245.3,295.0 L244.8,294.0 L244.3,294.3 L243.8,294.6 L243.3,296.4 L242.8,296.0 L242.3,294.9 L241.8,295.4 L241.3,294.6 L240.8,294.5 L240.3,294.7 L239.8,294.6 L239.3,295.0 L238.8,295.2 L238.3,294.5 L237.8,294.8 L237.3,294.1 L236.8,294.5 L236.3,294.4 L235.8,295.1 L235.3,293.8 L234.8,294.9 L234.3,294.1 L233.8,295.6 L233.3,296.7 L232.8,295.4 L232.3,295.8 L231.8,294.8 L231.3,294.7 L230.8,294.9 L230.3,294.0 L229.8,294.2 L229.3,293.8 L228.8,294.7 L228.3,294.2 L227.8,293.4 L227.3,294.5 L226.8,293.6 L226.3,294.9 L225.8,294.1 L225.3,294.5 L224.8,293.5 L224.3,294.3 L223.8,294.2 L223.3,295.5 L222.8,294.7 L222.3,295.2 L221.8,294.9 L221.3,295.1 L220.8,294.7 L220.3,295.1 L219.8,295.8 L219.3,295.6 L218.8,294.4 L218.3,294.7 L217.8,293.9 L217.3,294.6 L216.8,294.8 L216.3,294.7 L215.8,295.1 L215.3,295.0 L214.8,294.0 L214.3,295.6 L213.8,294.8 L213.3,295.9 L212.8,295.6 L212.3,295.0 L211.8,294.7 L211.3,294.7 L210.8,294.7 L210.3,294.3 L209.8,294.6 L209.3,294.6 L208.8,295.2 L208.3,294.6 L207.8,294.7 L207.3,294.7 L206.8,294.5 L206.3,295.0 L205.8,294.9 L205.3,295.1 L204.8,294.2 L204.3,295.3 L203.8,294.2 L203.3,293.9 L202.8,295.4 L202.3,295.3 L201.8,293.3 L201.3,293.9 L200.8,294.1 L200.3,294.2 L199.8,295.2 L199.3,294.6 L198.8,294.6 L198.3,295.9 L197.8,294.7 L197.3,295.6 L196.8,295.4 L196.3,294.5 L195.8,294.2 L195.3,295.0 L194.8,293.7 L194.3,294.2 L193.8,294.1 L193.3,294.3 L192.8,294.1 L192.3,293.2 L191.8,294.9 L191.3,293.5 L190.8,294.1 L190.3,293.6 L189.8,293.6 L189.3,294.6 L188.8,293.5 L188.3,293.8 L187.8,294.3 L187.3,293.6 L186.8,294.6 L186.3,294.3 L185.8,294.3 L185.3,295.4 L184.8,294.1 L184.3,295.2 L183.8,295.7 L183.3,294.9 L182.8,294.8 L182.3,296.6 L181.8,295.3 L181.3,294.6 L180.8,293.9 L180.3,294.6 L179.8,294.1 L179.3,294.6 L178.8,294.6 L178.3,295.8 L177.8,294.3 L177.3,294.6 L176.8,296.4 L176.3,294.8 L175.8,295.1 L175.3,295.6 L174.8,294.6 L174.3,294.9 L173.8,295.2 L173.3,294.5 L172.8,295.2 L172.3,293.9 L171.8,294.4 L171.3,294.3 L170.8,292.8 L170.3,293.4 L169.8,293.3 L169.3,293.7 L168.8,294.0 L168.3,294.0 L167.8,293.5 L167.3,294.1 L166.8,293.7 L166.3,294.7 L165.8,293.1 L165.3,292.7 L164.8,293.0 L164.3,293.3 L163.8,293.8 L163.3,293.8 L162.8,294.5 L162.3,294.1 L161.8,293.7 L161.3,294.2 L160.8,294.0 L160.3,293.4 L159.8,293.9 L159.3,293.4 L158.8,293.7 L158.3,293.5 L157.8,294.0 L157.3,294.8 L156.8,293.9 L156.3,294.9 L155.8,294.5 L155.3,294.2 L154.8,294.6 L154.3,293.2 L153.8,293.9 L153.3,294.8 L152.8,294.6 L152.3,294.1 L151.8,294.0 L151.3,293.7 L150.8,293.2 L150.3,293.9 L149.8,293.5 L149.3,294.1 L148.8,293.2 L148.3,293.4 L147.8,294.3 L147.3,294.1 L146.8,294.5 L146.3,295.4 L145.8,295.2 L145.3,294.2 L144.8,294.6 L144.3,294.5 L143.8,296.2 L143.3,295.4 L142.8,294.2 L142.3,294.3 L141.8,294.7 L141.3,293.9 L140.8,294.2 L140.3,294.7 L139.8,295.3 L139.3,295.3 L138.8,294.2 L138.3,295.0 L137.8,295.1 L137.3,295.2 L136.8,294.9 L136.3,294.7 L135.8,295.5 L135.3,294.4 L134.8,294.9 L134.3,294.6 L133.8,294.4 L133.3,294.4 L132.8,293.5 L132.3,294.0 L131.8,294.2 L131.3,293.9 L130.8,293.9 L130.3,294.4 L129.8,294.2 L129.3,294.3 L128.8,293.6 L128.3,294.4 L127.8,294.0 L127.3,294.1 L126.8,294.0 L126.3,293.3 L125.8,294.5 L125.3,295.2 L124.8,294.5 L124.3,294.1 L123.8,295.2 L123.3,295.2 L122.8,294.2 L122.3,295.1 L121.8,294.1 L121.3,295.0 L120.8,294.3 L120.3,295.6 L119.8,293.8 L119.3,294.0 L118.8,294.6 L118.3,293.7 L117.8,293.8 L117.3,293.3 L116.8,293.2 L116.3,295.1 L115.8,294.4 L115.3,293.6 L114.8,295.0 L114.3,294.3 L113.8,294.7 L113.3,295.7 L112.8,293.8 L112.3,295.2 L111.8,295.3 L111.3,293.6 L110.8,295.0 L110.3,295.3 L109.8,293.7 L109.3,294.0 L108.8,294.2 L108.3,293.2 L107.8,292.9 L107.3,294.7 L106.8,293.1 L106.3,293.0 L105.8,293.6 L105.3,293.3 L104.8,293.3 L104.3,293.0 L103.8,294.0 L103.3,293.5 L102.8,292.6 L102.3,293.7 L101.8,293.9 L101.3,294.1 L100.8,293.1 L100.3,294.2 L99.8,295.8 L99.3,293.9 L98.8,294.0 L98.3,293.6 L97.8,293.3 L97.3,293.6 L96.8,293.7 L96.3,293.4 L95.8,294.6 L95.3,295.8 L94.8,294.1 L94.3,293.0 L93.8,293.1 L93.3,294.4 L92.8,293.7 L92.3,292.9 L91.8,293.9 L91.3,294.1 L90.8,293.4 L90.3,294.3 L89.8,293.2 L89.3,294.0 L88.8,294.4 L88.3,295.5 L87.8,293.7 L87.3,294.0 L86.8,293.3 L86.3,293.4 L85.8,294.0 L85.3,293.6 L84.8,293.7 L84.3,294.0 L83.8,293.5 L83.3,293.8 L82.8,294.6 L82.3,295.8 L81.8,293.6 L81.3,294.1 L80.8,294.9 L80.3,295.0 L79.8,294.3 L79.3,293.6 L78.8,293.6 L78.3,294.0 L77.8,294.5 L77.3,293.9 L76.8,294.8 L76.3,293.6 L75.8,292.8 L75.3,293.6 L74.8,293.7 L74.3,292.4 L73.8,293.9 L73.3,293.5 L72.8,294.8 L72.3,292.9 L71.8,294.3 L71.3,293.7 L70.8,293.5 L70.3,293.1 L69.8,293.8 L69.3,293.4 L68.8,293.3 L68.3,293.4 L67.8,293.9 L67.3,293.7 L66.8,294.6 L66.3,294.3 L65.8,294.0 L65.3,294.0 L64.8,294.2 L64.3,293.0 L63.8,293.9 L63.3,293.6 L62.8,292.9 L62.3,293.5 L61.8,293.1 L61.3,293.6 L60.8,293.6Z" fill="#2196f3"/>
<path d="M60.8,264.5H62.6V268H64.2V266.5H66V270H67.5V296H66V298H64V296.5H62.6V300H60.8Z" fill="#2196f3"/>
<path d="M60.8,275.2V272.9M60.8,292.6V295.8M61.3,275.5V269.6M61.3,292.6V294.3M61.8,292.1V299.0M62.3,292.5V296.2M62.8,274.8V273.1M62.8,291.9V294.6M63.3,274.3V270.0M63.3,292.6V296.2M63.8,292.9V295.5M64.3,274.5V269.5M64.3,292.0V299.3M64.8,273.9V267.7M65.3,273.3V261.3M65.8,274.6V273.1M65.8,293.0V294.2M66.3,293.3V296.1M66.8,273.7V271.2M66.8,293.6V301.1M67.3,274.6V271.8M67.3,292.7V294.6M67.8,292.9V296.1M68.3,273.4V266.6M68.3,292.4V294.9M68.8,274.8V273.2M68.8,292.3V294.5M69.3,274.9V273.9M69.8,275.1V273.7M70.3,275.3V273.1M70.3,292.1V298.4M70.8,274.7V271.5M70.8,292.5V295.8M71.3,276.1V274.5M71.3,292.7V296.0M72.3,276.1V273.8M72.3,291.9V293.0M72.8,275.1V266.4M73.3,275.9V274.3M73.3,292.5V300.4M73.8,275.3V271.2M74.3,275.5V273.4M74.8,274.6V273.1M74.8,292.7V294.1M75.3,292.6V294.9M75.8,273.9V270.8M76.3,274.9V272.9M76.3,292.6V296.3M76.8,274.0V271.3M76.8,293.8V301.9M77.3,273.6V272.5M77.3,292.9V294.5M77.8,275.0V271.8M77.8,293.5V296.7M78.3,274.0V272.1M78.3,293.0V296.1M78.8,273.7V270.7M78.8,292.6V297.1M79.3,272.4V265.6M79.8,273.2V271.8M79.8,293.3V294.5M80.3,294.0V298.8M80.8,273.4V263.8M80.8,293.9V296.9M81.3,275.3V273.1M81.3,293.1V295.3M81.8,274.8V272.7M81.8,292.6V295.8M82.3,276.0V274.1M82.3,294.8V300.3M82.8,293.6V295.1M83.3,276.2V272.0M83.3,292.8V294.0M83.8,292.5V299.5M84.3,274.1V272.7M84.3,293.0V294.8M84.8,275.4V273.3M84.8,292.7V294.7M85.3,275.4V274.4M85.3,292.6V296.0M85.8,293.0V296.0M86.3,292.4V298.8M86.8,274.9V273.5M86.8,292.3V297.3M87.3,293.0V295.0M87.8,275.0V273.1M88.3,275.8V273.5M88.3,294.5V297.0M88.8,275.0V273.1M88.8,293.4V295.9M89.3,275.2V272.1M89.3,293.0V297.2M89.8,292.2V297.1M90.3,274.3V269.6M91.3,274.3V273.2M91.3,293.1V295.4M91.8,274.5V270.3M91.8,292.9V293.9M92.3,274.6V273.4M92.3,291.9V293.8M92.8,275.7V264.3M92.8,292.7V295.2M93.3,275.0V273.8M93.3,293.4V295.3M93.8,275.0V273.2M93.8,292.1V296.6M94.3,274.2V272.8M94.8,275.3V269.5M95.3,274.7V271.2M95.3,294.8V298.0M95.8,293.6V295.4M96.3,275.6V273.0M96.3,292.4V293.8M96.8,275.4V269.3M96.8,292.7V301.5M97.3,275.0V263.0M97.3,292.6V294.9M97.8,292.3V301.5M98.3,274.6V264.8M98.8,273.7V269.1M98.8,293.0V298.0M99.3,274.3V266.0M99.3,292.9V295.8M99.8,274.6V270.6M99.8,294.8V298.3M100.3,293.2V294.9M100.8,275.5V274.2M100.8,292.1V293.4M101.3,274.2V271.7M101.3,293.1V296.3M101.8,292.9V296.0M102.3,274.7V272.3M102.3,292.7V302.9M102.8,275.2V267.9M102.8,291.6V295.3M103.8,275.0V266.1M103.8,293.0V297.2M104.3,275.3V273.6M104.8,274.8V270.5M104.8,292.3V293.5M105.3,274.4V273.3M105.3,292.3V295.2M105.8,274.8V273.0M106.3,274.4V271.8M106.3,292.0V296.3M106.8,274.8V270.6M106.8,292.1V297.9M107.3,274.8V269.0M107.3,293.7V295.5M107.8,274.5V272.8M107.8,291.9V296.2M108.3,292.2V293.3M108.8,274.5V262.5M109.3,274.3V270.2M109.3,293.0V295.4M109.8,274.7V265.0M109.8,292.7V303.7M110.3,274.7V273.6M110.3,294.3V296.7M110.8,274.4V272.0M111.3,292.6V297.7M111.8,275.4V273.5M111.8,294.3V296.5M112.3,275.5V266.4M112.3,294.2V296.0M112.8,273.8V271.2M112.8,292.8V301.7M113.3,274.9V271.3M113.3,294.7V296.8M113.8,274.2V272.4M113.8,293.7V294.8M114.3,293.3V294.6M114.8,274.9V272.4M114.8,294.0V298.4M115.3,292.6V296.1M115.8,274.5V273.1M116.3,272.6V270.9M117.3,274.5V263.3M117.3,292.3V301.3M117.8,273.7V264.5M117.8,292.8V296.5M118.3,274.1V272.2M118.3,292.7V296.9M118.8,274.1V272.0M118.8,293.6V299.3M119.3,274.0V270.2M119.3,293.0V294.5M119.8,292.8V296.4M120.3,272.8V271.2M120.3,294.6V296.3M120.8,274.3V267.2M120.8,293.3V294.8M121.3,274.8V271.1M121.3,294.0V297.1M121.8,274.1V271.2M122.3,294.1V295.3M122.8,293.2V298.8M123.3,275.0V273.3M123.3,294.2V297.3M123.8,294.2V297.7M124.3,275.2V272.0M124.3,293.1V295.2M124.8,273.9V271.3M124.8,293.5V297.4M125.3,274.6V273.1M125.3,294.2V295.6M125.8,274.4V273.3M125.8,293.5V294.8M126.3,274.8V272.5M126.8,293.0V305.0M127.3,274.1V265.7M127.3,293.1V295.4M127.8,293.0V296.1M128.3,275.0V273.9M128.3,293.4V295.0M128.8,275.2V273.9M128.8,292.6V296.7M129.3,293.3V305.3M129.8,293.2V295.6M130.3,274.4V268.6M130.3,293.4V297.5M130.8,275.1V274.0M130.8,292.9V296.8M131.3,274.6V270.7M131.3,292.9V293.9M131.8,274.6V271.1M131.8,293.2V297.1M132.3,274.2V273.0M132.3,293.0V300.1M132.8,275.0V271.6M132.8,292.5V296.6M133.3,293.4V296.6M133.8,273.0V269.7M134.3,273.9V268.2M134.3,293.6V295.7M134.8,273.7V272.7M135.3,274.8V273.5M135.3,293.4V294.5M135.8,274.1V272.2M135.8,294.5V297.3M136.3,293.7V301.0M136.8,293.9V296.1M137.3,275.3V271.0M137.3,294.2V306.2M137.8,274.1V269.5M137.8,294.1V296.2M138.3,273.4V272.3M138.3,294.0V302.9M138.8,274.6V270.8M138.8,293.2V298.2M139.8,274.3V272.7M139.8,294.3V295.5M140.3,275.1V273.1M140.3,293.7V295.1M140.8,275.4V273.6M140.8,293.2V297.9M141.3,292.9V294.0M141.8,274.8V271.7M141.8,293.7V300.6M142.3,275.5V270.5M142.8,274.4V271.5M142.8,293.2V299.5M143.3,275.4V272.5M143.3,294.4V298.4M143.8,275.5V273.3M143.8,295.2V297.7M144.3,275.7V273.8M144.8,274.8V271.7M144.8,293.6V298.8M145.3,293.2V298.3M145.8,275.0V272.3M146.3,294.4V295.9M146.8,274.7V273.1M147.3,274.7V262.7M147.3,293.1V298.1M147.8,274.6V272.2M147.8,293.3V295.9M148.3,273.9V272.5M148.3,292.4V295.0M148.8,274.1V271.5M148.8,292.2V297.0M149.3,275.0V271.1M149.3,293.1V295.2M149.8,274.0V270.2M149.8,292.5V295.2M150.3,292.9V297.1M150.8,272.7V269.5M150.8,292.2V297.8M151.3,274.5V269.9M151.3,292.7V296.8M151.8,273.8V269.6M151.8,293.0V298.3M152.3,275.9V273.5M152.3,293.1V295.8M152.8,274.9V270.1M153.3,274.7V273.3M153.3,293.8V299.7M153.8,292.9V296.9M154.3,274.4V273.1M154.8,274.5V272.0M154.8,293.6V294.6M155.3,274.7V272.1M155.3,293.2V297.5M156.3,274.0V272.9M156.8,274.2V269.0M156.8,292.9V294.4M157.3,274.4V269.1M157.3,293.8V301.5M157.8,274.9V270.1M157.8,293.0V300.4M158.3,274.9V273.7M158.3,292.5V293.9M158.8,273.0V266.9M158.8,292.7V296.2M159.3,292.4V296.5M159.8,292.9V304.9M160.3,274.1V270.3M160.3,292.4V299.3M160.8,272.8V270.2M160.8,293.0V296.4M161.3,274.2V272.3M161.3,293.2V305.2M161.8,274.0V270.5M161.8,292.7V298.3M162.3,274.3V272.3M162.3,293.1V294.8M162.8,293.5V297.4M163.3,274.0V269.9M163.3,292.8V298.1M163.8,292.8V295.2M164.3,274.8V272.3M164.3,292.3V294.9M164.8,273.8V272.4M165.3,274.0V270.4M165.8,274.4V272.8M165.8,292.1V293.2M166.3,273.9V267.2M166.3,293.7V294.7M166.8,275.1V270.0M166.8,292.7V299.5M167.3,274.2V265.7M167.3,293.1V304.1M167.8,292.5V294.6M168.3,274.4V272.1M168.3,293.0V295.8M168.8,274.7V270.9M168.8,293.0V295.5M169.3,274.9V273.7M170.3,273.1V268.9M170.3,292.4V300.2M170.8,274.2V270.7M171.3,293.3V295.3M171.8,274.6V273.4M171.8,293.4V299.2M172.3,274.9V270.7M172.3,292.9V294.6M172.8,275.0V269.4M172.8,294.2V296.0M173.3,273.7V270.3M173.3,293.5V295.1M173.8,274.2V271.1M173.8,294.2V295.3M174.3,274.3V272.9M174.3,293.9V296.2M174.8,293.6V297.2M175.3,273.2V267.5M175.8,274.8V273.7M175.8,294.1V301.2M176.3,273.9V271.4M176.3,293.8V304.4M176.8,273.1V270.7M176.8,295.4V296.9M177.3,275.6V273.3M177.8,274.6V270.7M178.3,275.8V273.8M178.3,294.8V300.1M178.8,275.8V274.3M178.8,293.6V295.0M179.3,275.4V267.0M179.3,293.6V302.7M179.8,275.3V266.9M180.3,274.5V270.7M180.3,293.6V295.3M180.8,292.9V295.5M181.3,275.2V272.3M181.3,293.6V301.6M181.8,274.6V272.9M181.8,294.3V296.3M182.8,275.5V273.6M183.3,275.9V269.9M183.3,293.9V295.5M183.8,274.8V273.3M183.8,294.7V299.4M184.3,274.1V272.2M184.3,294.2V298.0M184.8,274.3V269.7M184.8,293.1V297.9M185.3,294.4V295.4M185.8,275.2V269.2M185.8,293.3V294.8M186.3,274.1V271.1M186.3,293.3V298.0M186.8,274.8V269.9M186.8,293.6V300.8M187.3,274.6V273.5M187.8,293.3V294.6M188.3,274.1V271.0M188.3,292.8V294.2M188.8,275.1V272.1M188.8,292.5V293.9M189.3,273.8V270.4M189.3,293.6V295.1M189.8,292.6V295.1M190.3,275.5V272.9M190.8,275.2V272.1M191.3,274.8V271.6M191.3,292.5V295.2M191.8,274.1V265.3M191.8,293.9V299.9M192.3,274.7V270.5M192.3,292.2V295.6M192.8,276.0V266.5M192.8,293.1V295.1M193.3,273.9V272.0M193.3,293.3V296.6M193.8,275.0V273.0M193.8,293.1V294.4M194.3,273.8V272.2M194.3,293.2V296.1M194.8,273.5V271.8M194.8,292.7V295.1M195.3,273.4V270.1M195.3,294.0V296.0M195.8,274.7V268.0M195.8,293.2V294.4M196.3,274.5V264.5M196.3,293.5V295.0M197.3,273.9V268.6M197.3,294.6V303.0M197.8,273.4V270.4M198.3,274.1V271.7M198.3,294.9V297.8M198.8,273.7V271.6M198.8,293.6V300.3M199.3,273.9V270.5M199.3,293.6V294.9M199.8,294.2V296.8M200.3,273.8V265.7M200.3,293.2V296.5M200.8,274.0V271.7M200.8,293.1V295.4M201.3,275.2V272.8M201.3,292.9V296.4M201.8,275.2V263.2M201.8,292.3V295.6M202.3,294.3V295.7M202.8,294.4V295.9M203.3,274.9V271.2M203.3,292.9V295.2M203.8,275.0V272.9M203.8,293.2V294.2M204.3,274.2V271.3M204.3,294.3V296.2M204.8,273.8V272.4M204.8,293.2V298.4M205.3,294.1V300.0M205.8,274.9V272.6M205.8,293.9V295.9M206.3,274.9V272.5M206.3,294.0V301.7M206.8,273.5V272.3M207.3,273.6V270.0M207.8,273.9V272.2M207.8,293.7V301.0M208.3,273.5V271.9M208.8,273.0V270.6M208.8,294.2V295.6M209.3,274.2V272.4M209.3,293.6V297.9M209.8,274.2V268.1M209.8,293.6V296.4M210.3,274.3V272.0M210.8,274.4V273.0M210.8,293.7V295.6M211.3,274.9V273.2M211.8,274.8V272.5M211.8,293.7V297.2M212.3,294.0V298.3M212.8,274.7V273.5M212.8,294.6V296.4M213.3,294.9V302.3M213.8,275.4V271.4M213.8,293.8V296.4M214.3,274.9V271.1M214.3,294.6V296.0M214.8,275.3V273.8M214.8,293.0V295.1M215.3,274.7V268.6M215.3,294.0V298.8M215.8,274.7V268.6M215.8,294.1V296.1M216.3,275.4V274.1M216.3,293.7V295.4M216.8,274.8V269.9M217.3,293.6V298.6M217.8,275.2V272.7M217.8,292.9V301.8M218.3,293.7V297.1M218.8,275.3V273.1M218.8,293.4V295.1M219.3,275.1V273.4M219.3,294.6V297.3M219.8,275.0V271.7M219.8,294.8V300.9M220.3,274.1V271.4M220.3,294.1V300.4M220.8,274.6V272.7M220.8,293.7V298.3M221.3,274.3V272.8M221.3,294.1V295.2M221.8,293.9V295.2M222.3,274.4V266.3M222.3,294.2V298.2M222.8,275.2V274.1M222.8,293.7V300.1M223.3,294.5V300.1M223.8,293.2V295.6M224.3,274.4V271.1M224.3,293.3V299.5M224.8,273.6V272.1M224.8,292.5V296.1M225.3,293.5V294.6M226.3,274.5V272.0M226.3,293.9V296.6M226.8,274.0V271.4M226.8,292.6V294.8M227.8,292.4V296.8M228.3,273.0V269.1M228.3,293.2V295.4M228.8,274.4V273.1M228.8,293.7V296.0M229.3,273.4V272.1M229.3,292.8V300.4M229.8,274.0V270.8M229.8,293.2V296.2M230.3,273.8V270.4M230.3,293.0V295.6M230.8,274.0V269.1M230.8,293.9V305.9M231.3,274.3V264.2M231.3,293.7V299.2M231.8,274.5V273.5M231.8,293.8V295.5M232.3,273.3V266.5M232.3,294.8V303.3M232.8,274.8V270.7M233.3,274.9V273.8M233.3,295.7V297.0M233.8,272.9V271.1M233.8,294.6V297.4M234.3,274.5V269.0M234.3,293.1V296.5M234.8,293.9V298.4M235.3,274.1V271.2M235.8,274.2V271.8M235.8,294.1V295.7M236.3,274.2V272.1M236.3,293.4V301.2M236.8,274.4V271.0M236.8,293.5V295.8M237.3,275.1V263.1M237.3,293.1V294.6M237.8,274.7V271.4M237.8,293.8V304.2M238.3,293.5V297.5M239.3,274.4V270.5M239.3,294.0V297.4M239.8,293.6V295.9M240.3,274.2V267.5M240.3,293.7V296.5M240.8,274.1V272.1M240.8,293.5V296.9M241.3,273.7V272.2M241.3,293.6V305.6M241.8,272.8V269.9M242.3,273.8V269.4M242.3,293.9V296.5M242.8,273.8V269.1M243.3,273.8V272.4M243.3,295.4V298.7M243.8,274.4V269.5M243.8,293.6V296.2M244.3,273.9V270.1M244.3,293.3V296.4M244.8,293.0V305.0M245.3,274.8V273.3M245.3,294.0V299.4M245.8,274.5V271.2M245.8,294.1V297.9M246.3,274.8V269.6M246.3,295.4V300.8M246.8,294.8V295.8M247.3,294.5V299.8M247.8,274.4V271.1M247.8,293.9V303.3M248.3,294.9V296.0M248.8,273.6V271.4M249.3,273.9V272.7M249.3,293.7V296.2M250.3,274.3V272.5M250.3,293.8V299.1M250.8,273.6V272.1M251.3,274.5V272.3M251.3,294.4V302.1M251.8,274.1V267.1M251.8,294.0V301.5M252.8,272.7V264.9M252.8,295.3V300.3M253.3,274.4V266.4M253.3,294.2V301.6M253.8,274.5V273.4M253.8,295.1V296.9M254.3,272.0V265.1M254.3,294.0V297.0M254.8,274.2V269.5M254.8,295.0V296.4M255.3,273.8V263.2M255.8,274.1V273.0M255.8,294.2V296.8M256.3,272.9V269.7M256.3,293.5V298.0M256.8,274.8V272.3M257.3,293.9V297.7M257.8,274.2V272.6M257.8,293.9V300.5M258.3,273.7V269.8M258.3,293.1V295.2M258.8,274.7V271.2M259.3,274.7V272.3M259.3,294.4V298.2M259.8,273.8V270.2M259.8,294.0V302.2M260.3,273.1V271.6M260.8,272.2V270.7M261.3,295.0V297.5M261.8,273.7V272.4M261.8,293.3V299.1M262.3,293.5V296.3M262.8,273.4V271.1M262.8,293.7V295.5M263.3,273.4V270.0M263.3,293.7V295.3M263.8,293.8V297.8M264.3,272.9V270.6M264.3,293.8V296.6M264.8,273.6V267.9M264.8,294.5V296.9M265.3,272.5V270.2M265.3,295.2V297.4M265.8,273.5V266.0M265.8,294.2V295.3M266.3,272.5V269.7M266.8,272.2V267.5M266.8,293.6V294.8M267.3,273.6V271.9M267.3,294.5V300.6M267.8,274.1V269.9M267.8,294.4V297.3M268.8,274.3V262.3M268.8,294.2V296.2M269.3,273.9V271.4M269.3,294.5V296.6M269.8,274.6V273.4M269.8,293.7V296.1M270.3,293.8V302.3M270.8,273.9V270.6M270.8,294.3V296.2M271.3,274.1V271.4M271.8,273.0V271.8M272.3,273.6V268.1M272.3,295.4V299.7M272.8,273.9V265.9M272.8,294.9V296.2M273.3,274.1V272.2M273.8,273.5V267.4M273.8,294.0V295.8M274.3,293.6V300.1M274.8,273.9V271.6M274.8,294.1V295.8M275.3,273.2V269.0M275.3,294.1V300.4M275.8,273.2V271.2M275.8,294.3V299.5M276.3,294.6V297.9M276.8,295.7V304.5M277.3,294.2V295.3M277.8,274.5V269.1M277.8,295.5V296.7M278.3,273.0V270.3M278.3,294.4V297.6M278.8,274.1V271.8M278.8,294.9V296.5M279.3,296.1V297.6M279.8,274.8V273.5M279.8,295.4V297.0M280.3,274.4V272.8M280.3,294.7V296.6M280.8,293.9V299.6M281.3,274.1V272.2M281.3,294.8V297.3M281.8,273.8V272.0M281.8,293.7V299.3M282.3,294.5V298.4M282.8,273.2V265.1M282.8,294.1V303.5M283.3,273.3V269.1M283.3,293.6V295.9M284.3,293.2V297.2M284.8,273.7V269.1M284.8,295.0V296.5M285.8,274.6V272.0M286.3,274.6V265.4M286.3,294.6V306.0M286.8,274.7V272.0M286.8,293.2V296.2M287.3,275.1V269.7M287.3,293.5V303.0M287.8,293.2V297.0M288.3,274.3V273.0M288.8,273.9V271.6M289.3,273.7V271.1M289.3,293.3V299.3M289.8,273.3V271.4M290.3,294.5V297.6M290.8,293.7V296.9M291.3,293.9V296.2M291.8,274.5V266.1M292.3,294.3V298.6M292.8,293.6V296.0M293.3,273.9V271.2M293.3,294.5V302.2M293.8,273.7V264.1M294.3,274.4V269.6M294.3,293.7V295.7M294.8,293.5V299.4M295.3,273.1V271.2M295.3,293.4V297.0M295.8,274.4V267.5M295.8,293.1V298.1M296.3,274.1V263.5M296.8,274.2V271.6M296.8,293.9V295.8M297.3,273.7V266.0M297.3,294.1V300.5M297.8,273.7V270.9M297.8,293.8V298.1M298.3,272.9V270.9M298.3,294.5V296.4M298.8,273.7V264.8M298.8,294.2V296.0M299.3,274.6V269.0M299.3,294.8V296.9M299.8,273.1V270.7M300.3,272.9V271.3M300.8,272.8V270.7M300.8,294.5V297.1M301.3,272.6V269.3M301.3,294.1V300.7M301.8,273.0V270.0M302.3,293.7V298.3M302.8,274.1V268.3M302.8,292.8V294.5M303.3,295.0V299.6M303.8,274.8V273.4M303.8,293.6V294.8M304.3,294.0V295.7M304.8,273.5V268.1M304.8,294.4V300.9M305.3,272.9V269.9M305.3,293.4V294.6M305.8,273.2V269.7M305.8,293.3V300.4M306.3,293.3V296.3M306.8,274.3V272.1M306.8,294.8V297.3M307.3,274.5V272.9M307.3,294.9V296.5M307.8,273.8V264.5M308.3,273.8V267.2M308.3,293.8V297.8M308.8,295.0V296.1M309.3,273.2V271.9M309.3,295.1V296.6M309.8,272.7V269.9M310.3,273.6V271.8M310.3,294.2V302.4M310.8,273.4V271.0M311.3,273.8V271.4M311.3,293.1V299.4M311.8,272.8V271.6M311.8,293.3V297.3M312.3,274.3V266.7M312.3,293.3V294.6M312.8,274.1V270.3M312.8,293.9V296.6M313.3,274.0V269.9M313.3,293.8V295.6M313.8,293.2V294.4M314.3,274.3V268.4M314.3,295.2V300.3M314.8,273.1V271.9M314.8,294.5V303.5M315.3,295.1V296.6M315.8,273.3V271.7M316.8,274.1V270.4M316.8,294.9V300.7M317.3,274.6V273.6M317.3,294.5V295.6M317.8,274.8V273.2M317.8,293.7V295.0M318.3,275.2V268.9M318.8,274.9V271.3M319.3,274.6V271.1M319.3,294.0V296.8M319.8,273.3V267.8M320.3,293.8V301.1M320.8,273.7V271.7M320.8,294.9V297.0M321.3,294.6V301.0M321.8,275.3V274.2M321.8,294.9V302.4M322.3,295.4V298.6M322.8,275.1V271.9M323.3,295.4V303.7M323.8,274.2V266.5M323.8,293.8V295.7M324.3,273.9V269.6M324.3,293.3V298.5M324.8,273.0V271.2M325.3,273.3V271.3M325.3,293.9V295.1M325.8,274.1V263.3M325.8,293.6V295.6M326.3,273.8V269.5M326.3,293.7V298.6M326.8,274.1V268.2M326.8,295.2V302.0M327.3,274.9V267.3M327.3,293.5V297.7M327.8,274.0V262.0M327.8,293.7V297.8M328.3,293.4V304.3M328.8,272.7V270.5M328.8,295.0V296.4M329.3,273.6V271.9M329.3,295.3V297.1M329.8,295.3V299.6M330.3,273.1V270.4M330.3,294.3V295.6M330.8,274.0V272.7M330.8,294.9V297.2M331.3,273.1V268.3M331.3,294.5V301.6M331.8,272.9V271.1M331.8,295.3V302.3M332.3,274.1V269.5M332.3,296.0V298.8M332.8,273.8V261.8M332.8,295.0V296.6M333.3,274.5V269.7M333.3,294.3V296.1M334.3,272.9V271.1M334.3,294.7V302.6M334.8,273.4V271.8M334.8,293.9V297.5M335.3,293.7V296.7M335.8,271.1V269.4M336.3,295.2V297.8M336.8,273.1V267.2M336.8,295.3V299.1M337.3,272.7V271.0M337.3,295.7V306.4M337.8,295.1V296.9M338.3,295.3V302.2M338.8,273.8V265.9M338.8,295.0V296.0M339.3,272.8V269.6M339.8,274.1V270.1M339.8,294.1V299.9M340.3,293.8V295.4M340.8,274.6V270.5M340.8,294.1V299.2M341.3,273.6V270.8M341.3,294.5V299.2M341.8,272.7V270.1M342.3,272.5V267.8M342.3,294.3V298.5M342.8,274.1V273.0M342.8,294.3V296.8M343.3,272.4V270.1M343.3,294.8V297.5M343.8,273.0V270.7M344.3,273.5V263.0M344.3,294.4V299.8M345.3,272.9V271.0M345.3,293.9V294.9M345.8,273.6V269.2M346.3,272.4V270.3M346.3,295.1V297.3M346.8,273.9V272.4M346.8,294.7V298.6M347.3,273.5V270.6M347.3,295.3V304.2M347.8,273.1V268.6M347.8,295.0V300.8M348.3,273.5V267.9M348.3,294.1V295.9M348.8,274.0V270.6M348.8,294.4V298.4M349.3,273.5V272.4M349.3,294.9V296.6M349.8,295.8V297.9M350.3,273.6V267.7M350.3,294.8V305.4M350.8,273.6V269.9M350.8,295.1V296.3M351.3,272.4V270.8M351.3,294.6V297.8M351.8,273.4V272.1M351.8,294.9V297.4M352.3,273.2V270.4M352.3,294.5V299.9M352.8,271.7V270.4M352.8,295.1V299.2M353.3,271.8V269.0M353.3,294.5V296.6M353.8,274.1V271.7M353.8,295.3V306.3M354.3,274.4V273.2M354.3,294.9V298.2M354.8,273.8V271.7M354.8,295.4V297.2M355.8,272.9V268.4M355.8,294.6V296.1M356.3,272.8V271.0M356.3,296.0V298.9M356.8,273.7V268.9M356.8,295.3V296.9M357.3,272.9V267.8M357.3,295.7V303.6M357.8,273.1V270.9M357.8,295.7V298.0M358.3,273.6V269.8M358.8,294.8V300.0M359.3,294.5V297.8M360.3,274.3V273.2M360.8,273.1V266.4M360.8,295.8V298.1M361.3,273.8V272.1M361.3,294.8V296.0M362.3,295.2V297.3M362.8,294.8V297.8M363.3,273.2V270.9M363.8,273.4V270.8M363.8,294.3V297.0M364.3,273.5V271.7M364.3,295.7V301.6M364.8,273.3V268.9M365.3,273.6V270.4M365.3,296.2V300.5M365.8,273.7V272.1M366.3,295.5V296.5M366.8,271.5V263.0M366.8,295.8V297.3M367.3,272.0V270.1M367.3,294.5V297.7M367.8,272.4V267.5M367.8,294.1V296.0M368.3,271.8V268.3M368.3,295.1V300.3M368.8,295.1V304.7M369.3,272.0V270.6M369.3,294.4V298.4M369.8,273.8V272.3M369.8,294.5V298.4M370.3,273.7V271.7M370.3,294.5V296.1M370.8,294.4V296.0M371.3,273.3V262.7M371.3,294.4V296.7M371.8,273.0V266.4M371.8,295.0V296.0M372.3,294.7V297.4M372.8,295.4V297.8M373.3,273.2V264.0M373.3,294.4V297.0M373.8,273.0V270.9M373.8,294.9V298.0M374.3,295.5V298.4M374.8,272.4V270.1M374.8,295.7V298.1M375.3,295.1V299.6M375.8,272.9V271.2M375.8,294.9V296.8M376.3,272.4V264.3M376.3,294.8V303.6M376.8,273.8V272.5M377.3,273.6V272.3M377.3,293.6V298.3M377.8,273.5V269.4M378.3,272.4V270.7M378.8,273.7V271.5M378.8,294.9V296.1M379.3,272.6V269.2M379.3,294.5V301.8M380.3,272.9V271.9M380.8,272.1V268.0M380.8,293.7V298.6M381.3,271.1V269.1M381.3,294.8V296.8M381.8,295.4V297.5M382.3,294.1V296.0M382.8,272.7V267.7M382.8,294.4V302.5M383.3,273.3V272.0M383.3,293.9V295.3M383.8,273.9V269.9M383.8,294.2V297.3M384.3,273.5V265.5M384.8,273.0V270.3M385.3,273.0V271.6M385.3,294.5V295.7M385.8,274.0V271.7M385.8,294.8V300.8M386.3,295.2V298.1M386.8,295.2V296.6M387.3,273.4V271.9M387.8,273.2V265.6M387.8,296.1V307.7M388.3,271.9V270.6M388.8,273.8V267.9M389.3,273.6V272.1M389.3,294.5V297.4M389.8,273.0V269.5M389.8,294.6V302.1M390.3,272.7V262.1M390.3,294.7V298.1M390.8,273.2V269.4M390.8,295.0V304.9M391.3,272.3V265.7M391.3,294.6V296.9M391.8,294.2V295.2M392.3,294.1V298.5M392.8,273.8V272.7M392.8,294.8V306.2M393.3,294.3V300.5M393.8,273.6V265.1M393.8,295.7V303.0M394.3,273.0V271.8M394.8,274.0V271.7M394.8,294.9V305.1M395.3,274.2V269.6M395.3,295.0V297.4M395.8,274.6V271.1M396.3,273.9V270.7M396.3,295.0V296.2M396.8,295.2V296.5M397.3,273.1V269.0M397.8,272.4V271.2M397.8,295.1V297.3M398.3,273.4V264.6M398.3,295.1V296.6M398.8,272.8V271.3M398.8,295.6V297.0M399.3,273.5V270.5M399.3,295.3V296.6M399.8,273.5V270.9M399.8,293.8V295.1M400.3,273.8V272.6M400.3,294.7V306.7M400.8,273.5V269.2M400.8,294.8V296.3M401.3,272.4V269.4M401.3,294.6V296.3M402.3,273.2V268.9M402.3,294.3V306.3M402.8,274.1V273.0M402.8,294.8V299.6M403.3,272.9V261.2M403.3,295.8V296.8M403.8,273.5V266.8M403.8,295.9V297.2M404.3,273.5V266.7M404.8,273.1V262.3M404.8,297.2V307.1M405.3,272.4V270.1M405.3,295.3V299.0M405.8,272.6V268.5M405.8,295.2V298.5M406.3,273.1V271.3M406.8,273.0V267.2M406.8,296.0V300.9M407.3,273.1V268.1M407.3,295.9V297.6M407.8,273.0V268.6M407.8,296.7V297.9M408.3,272.7V262.2M408.8,272.6V269.7M408.8,296.3V298.2M409.3,296.1V298.7M409.8,272.8V264.6M410.3,272.2V267.1M410.3,296.5V297.9M410.8,272.6V271.5M410.8,296.0V298.4M411.3,273.8V270.1M411.3,295.8V296.8M412.3,273.1V271.0M412.3,295.2V299.0M412.8,273.4V271.1M413.3,274.3V270.8M413.3,296.9V298.0M413.8,274.2V262.2M413.8,295.8V298.3M414.3,274.0V271.6M414.3,296.5V297.8M414.8,271.7V269.0M414.8,296.3V297.3M415.3,273.5V271.6M415.3,295.8V299.0M415.8,273.3V266.7M415.8,295.0V302.3M416.3,273.1V271.8M416.8,273.2V271.0M417.3,272.8V271.3M417.3,295.4V299.6M417.8,273.1V267.1M417.8,296.5V301.4M418.3,272.5V269.5M418.3,295.2V296.9M418.8,273.7V272.3M418.8,295.8V297.4M419.3,273.1V269.4M419.3,295.1V297.2M419.8,272.4V270.7M419.8,295.4V301.7M421.3,294.4V295.4M421.8,273.1V266.5M421.8,294.9V302.8M422.3,273.5V269.7M422.3,294.4V295.9M423.3,296.5V298.3M423.8,295.5V300.1M424.3,295.2V300.3M424.8,273.2V271.5M425.3,273.1V268.3M425.8,272.5V270.0M425.8,296.1V297.6M426.3,272.3V267.7M426.3,294.7V300.7M426.8,273.3V269.9M426.8,295.5V298.2M427.3,274.5V270.9M427.3,296.2V297.6M427.8,273.4V267.7M427.8,295.4V299.8M428.3,273.7V272.2M428.3,294.8V301.9M428.8,273.6V270.8M428.8,295.5V298.2M429.3,271.4V270.3M429.3,294.7V298.2M429.8,273.0V271.2M429.8,295.1V299.3M430.3,271.9V270.5M430.3,295.2V300.2M430.8,273.6V272.3M430.8,295.3V296.6M431.3,273.2V267.8M431.3,295.8V297.2M431.8,273.3V268.1M432.3,295.7V297.8M432.8,273.5V268.4M433.3,272.5V268.5M433.3,296.0V298.8M433.8,272.1V269.8M434.3,295.5V296.9M434.8,273.4V269.4M434.8,295.7V296.8M435.3,272.6V268.5M435.3,295.5V301.2M435.8,273.1V271.9M436.3,273.6V270.6M436.3,295.6V297.0M436.8,272.8V271.0M437.3,272.9V271.0M437.3,296.0V297.2M437.8,272.5V270.6M437.8,296.2V299.4M438.3,271.8V269.3M438.3,295.9V298.6M438.8,271.8V263.6M438.8,295.7V297.8M439.3,272.8V271.8M439.3,295.2V296.9M439.8,273.1V267.2M439.8,295.8V297.6M440.3,272.2V263.1M440.3,295.9V299.6M440.8,272.5V267.9M440.8,295.6V298.6M441.3,273.6V271.7M441.3,296.3V297.6M441.8,273.8V270.8M441.8,295.1V297.5M442.8,273.1V261.1M442.8,295.8V301.8M443.3,273.1V269.4M443.3,295.1V298.0M443.8,273.2V269.3M443.8,294.8V296.0M444.3,273.2V268.8M444.3,295.9V300.1M445.3,272.1V267.3M445.3,294.4V303.8M445.8,273.8V271.8M445.8,295.0V300.8M446.3,274.0V270.7M446.3,293.8V296.0M446.8,294.4V301.1M447.3,273.8V271.5M447.3,294.4V301.4M447.8,273.3V272.2M447.8,294.6V299.3M448.3,295.0V307.0M448.8,273.5V267.8M448.8,294.4V297.8M449.3,273.0V271.4M449.3,294.4V297.9M449.8,294.9V297.1M450.3,273.4V264.9M450.3,294.4V298.6M450.8,273.6V271.5M450.8,294.2V298.1M451.3,273.6V272.2M451.3,295.4V297.7M451.8,273.9V272.3M452.3,274.6V272.1M452.8,273.6V271.6M452.8,295.7V298.2M453.3,295.3V297.5M453.8,294.7V305.9M454.3,273.8V271.9M454.3,294.2V295.4M454.8,272.6V267.9M455.3,295.2V296.3M456.3,273.2V269.5M456.3,295.2V298.5M456.8,295.0V297.9M457.3,272.3V268.4M457.3,294.6V299.2M457.8,272.8V267.4M457.8,295.9V300.1M458.3,273.1V270.0M458.3,294.7V296.8M458.8,272.4V269.4M458.8,295.9V298.2M459.3,294.5V296.4M459.8,271.6V268.4M460.3,272.8V268.4M460.3,294.9V296.3M460.8,295.3V304.7M461.3,294.1V299.5M461.8,272.4V266.4M462.3,272.7V270.8M462.3,296.0V299.3M462.8,273.4V269.3M462.8,295.5V301.1M463.3,273.2V270.5M463.8,272.8V271.6M463.8,296.2V297.5M464.3,295.9V298.7M464.8,273.8V268.5M464.8,296.2V300.8M465.3,273.9V272.2M465.3,295.7V297.7M466.3,273.1V271.8M466.3,295.2V300.6M466.8,272.8V266.7M467.3,296.1V298.2M468.3,294.8V302.0M468.8,295.6V301.9M469.3,272.2V266.7M469.3,295.9V297.2M469.8,272.8V265.6M470.3,273.0V269.5M470.3,295.2V307.2M470.8,295.3V298.7M471.3,272.5V260.7M471.3,296.0V297.7M471.8,296.3V301.8M472.3,272.7V268.6M472.3,295.2V297.7M472.8,273.6V269.6M472.8,295.0V296.2M473.3,273.4V270.8M473.3,295.9V297.5M473.8,272.5V266.9M473.8,295.7V299.9M474.3,272.5V269.4M474.3,297.5V298.8M474.8,273.1V266.5M474.8,295.6V300.4M475.3,273.0V270.8M475.3,296.2V299.8M475.8,272.0V265.1M475.8,296.0V299.4M476.3,272.9V269.7M476.3,295.4V298.4M476.8,273.7V271.8M476.8,295.9V301.2M477.3,273.3V270.2M477.3,295.9V300.8M477.8,273.4V268.7M477.8,295.3V296.9M478.3,273.5V271.7M478.3,295.2V297.2M478.8,273.8V270.5M478.8,295.5V305.5M479.3,273.6V271.0M479.8,294.8V296.5M480.3,274.0V270.6M480.3,295.3V297.4M480.8,295.5V299.0M481.3,272.0V270.8M481.8,273.1V267.1M481.8,295.4V298.4M482.3,295.2V299.9M482.8,273.2V271.7M482.8,295.1V296.4M483.3,272.6V269.8M484.3,295.4V300.5M484.8,272.8V268.2M484.8,295.1V299.6M485.3,270.9V265.4M485.3,295.8V301.8M485.8,271.8V265.4M485.8,295.8V298.4M486.3,273.5V268.9M486.3,295.3V296.4M486.8,272.8V271.7M487.3,272.1V270.5M487.3,297.0V304.9M487.8,295.2V297.8M488.3,296.3V297.5M488.8,273.6V268.1M488.8,294.7V302.0M489.3,273.6V270.2M489.8,272.6V270.4M489.8,294.9V296.3M490.3,295.4V300.3M490.8,273.1V269.6M490.8,295.2V296.7M491.3,272.1V270.5M491.3,297.3V302.2M491.8,272.8V264.7M491.8,295.6V299.8M492.3,272.7V270.2M492.3,295.5V298.2M492.8,272.0V261.0M492.8,295.0V296.1M493.3,271.8V270.0M493.3,294.6V301.8M493.8,272.5V265.3M494.3,272.8V270.4M494.3,296.2V302.0M494.8,295.0V297.9M495.3,294.9V297.8M495.8,274.0V271.4M495.8,294.4V303.3M496.3,273.9V271.8M496.3,295.0V301.0M496.8,296.7V300.4M497.3,273.3V272.2M497.3,296.0V299.5M497.8,272.7V270.9M497.8,296.6V298.5M498.3,295.9V297.6M498.8,273.5V271.0M498.8,295.9V298.4M499.3,272.2V260.5M499.3,295.2V299.6M499.8,272.4V268.0M499.8,296.0V299.2M500.3,272.9V271.8M500.3,296.1V298.8M500.8,273.3V271.2M500.8,296.6V298.6M501.3,273.2V266.1M501.3,296.8V298.1M501.8,296.3V299.0M502.3,273.6V261.6M502.3,297.0V303.6M502.8,272.9V271.6M502.8,297.5V303.5M503.3,274.0V272.7M503.8,274.1V265.7M503.8,296.1V297.6M504.3,295.1V296.7M504.8,272.6V265.3M504.8,295.7V296.8M505.3,273.4V268.1M505.3,295.7V297.7M505.8,272.9V270.4M505.8,295.5V299.8M506.3,273.2V270.8M506.3,295.7V299.1M507.3,272.2V270.9M507.3,295.3V296.6M507.8,272.9V268.5M507.8,295.3V301.1M508.3,273.0V270.7M508.3,295.7V297.2M508.8,273.6V270.6M508.8,295.1V302.5M509.3,272.0V268.8M509.3,295.9V297.9M509.8,273.7V263.4M509.8,294.9V300.9M510.3,272.4V271.1M510.8,295.9V304.9M511.3,273.3V270.2M511.3,296.3V297.8M511.8,272.6V270.7M512.3,272.5V267.0M512.3,295.6V303.0M512.8,271.5V261.5M512.8,294.8V302.6M513.3,272.6V268.1M513.8,272.0V270.8M513.8,295.4V297.6M514.3,296.4V299.1M514.8,297.6V303.9M515.3,272.7V260.7M515.8,273.2V272.1M515.8,295.6V297.7M516.3,272.5V268.2M516.3,295.3V298.2M516.8,271.9V270.4M517.3,273.1V271.2M517.3,295.4V307.4M517.8,273.0V271.6M518.3,272.6V262.2M518.3,296.1V302.4M518.8,297.9V300.3M519.3,273.2V264.1M519.3,295.6V299.1M519.8,296.5V302.6M520.3,273.1V269.7M520.3,295.8V300.5M520.8,273.2V271.0M520.8,295.4V296.7M521.8,271.3V267.2M522.3,295.8V299.1M522.8,272.1V269.7M522.8,295.6V298.3M523.3,273.0V267.4M523.8,272.0V269.7M523.8,295.1V297.8M524.3,272.8V268.5M524.3,295.6V297.4M524.8,272.0V270.5M524.8,296.4V301.0M525.3,272.1V269.5M525.8,272.7V269.0M525.8,296.9V299.8M526.3,271.9V269.1M526.3,296.5V304.3M526.8,272.9V268.2M526.8,296.2V300.7M527.3,272.8V266.1M527.3,295.9V298.1M527.8,273.3V269.5M528.3,273.2V272.2M528.3,295.4V299.4M528.8,271.8V268.1M528.8,297.0V298.9M529.3,296.4V297.5M529.8,273.1V270.7M529.8,296.4V299.0M530.3,270.6V266.3M530.3,297.0V298.1M530.8,272.3V264.2M530.8,295.9V297.0M531.8,296.3V302.0M532.3,296.3V298.1M532.8,295.3V300.7M533.8,273.8V261.8M533.8,295.9V298.6M534.3,273.3V268.2M534.3,296.1V298.7M534.8,295.7V299.3M535.3,273.1V271.7M535.3,295.7V300.4M535.8,296.1V297.9M536.3,295.3V304.4M536.8,272.8V269.7M536.8,295.2V303.4M537.3,271.5V270.5M537.8,272.4V271.0M537.8,295.2V298.3M538.3,272.8V271.0M538.3,295.3V297.5M538.8,295.4V298.4M539.3,272.5V266.7M539.8,273.1V269.4M539.8,295.7V299.6M540.8,273.2V271.6M541.3,272.1V268.7M541.3,295.8V297.6M541.8,273.1V271.2M541.8,295.4V299.4M542.3,272.5V271.0M542.3,295.4V296.9M542.8,272.1V270.4M542.8,295.9V299.2M543.3,272.2V267.0M543.3,295.6V299.3M543.8,272.1V268.9M544.3,272.3V262.3M544.8,272.6V267.4M544.8,295.3V300.0M545.8,295.7V298.0M546.3,272.8V270.0M546.3,295.2V296.7M546.8,272.1V270.7M546.8,295.2V298.7M547.3,272.9V270.0M547.3,295.7V296.8M547.8,272.9V262.4M547.8,296.0V299.6M548.3,272.6V271.5M548.8,271.9V268.0M548.8,295.7V304.2M549.3,272.5V269.6M549.8,273.1V267.8M549.8,295.8V301.6M550.3,272.8V265.6M550.3,297.1V299.0M550.8,296.3V303.2M551.3,273.4V265.3M551.3,296.3V299.4M551.8,272.0V265.2M551.8,295.8V297.6M552.3,272.5V271.1M552.3,296.2V299.5M552.8,296.9V299.4M553.3,272.7V269.7M553.8,272.4V267.1M553.8,296.1V298.1M554.3,272.9V270.4M554.8,273.2V272.0M554.8,296.4V308.1M555.3,271.9V270.6M555.3,296.6V299.3M555.8,272.4V271.3M555.8,297.0V301.1M556.3,273.4V268.4M556.3,296.4V308.4M556.8,273.2V269.5M557.3,272.7V266.0M557.3,295.7V301.5M557.8,273.5V269.8M557.8,295.3V298.5M558.3,273.4V271.6M558.3,295.7V299.1M558.8,272.3V265.9M558.8,296.4V299.1M559.3,271.6V269.6M559.3,295.8V300.5M559.8,296.4V300.4M560.3,271.8V266.7M560.3,295.8V298.1M560.8,271.3V270.1M560.8,297.4V298.4M561.3,272.8V271.3M561.3,296.3V301.9M561.8,272.5V271.4M561.8,295.4V299.0M562.3,272.6V270.7M562.3,295.4V304.7M562.8,272.9V269.9M562.8,295.5V304.4M563.3,272.0V268.0M563.3,295.3V296.4M563.8,272.3V264.7M563.8,295.5V297.0M564.3,295.4V298.3M564.8,271.7V270.7M564.8,295.8V299.2M565.3,273.0V271.4M565.3,294.9V296.4M565.8,295.8V297.1M566.3,272.5V268.1M566.3,295.1V307.1M566.8,271.8V267.3M566.8,294.8V296.7M567.3,272.1V268.1M567.3,295.7V297.6M567.8,272.6V269.7M568.3,272.5V268.4M568.3,296.2V297.8M568.8,272.2V269.2M568.8,296.5V299.5M569.3,271.8V259.8M569.8,295.8V299.6M570.3,272.1V266.0M570.3,295.9V298.5M570.8,271.8V268.6M571.3,272.7V270.8M571.3,296.4V300.7M571.8,270.8V267.8M571.8,297.4V299.7M572.3,271.8V269.9M572.8,296.4V298.9M573.3,296.4V297.5M573.8,272.9V265.5M573.8,295.7V298.6M574.3,273.1V268.3M574.3,295.6V300.9M574.8,273.4V270.1M575.3,273.5V271.4M575.8,273.3V271.2M575.8,294.8V304.7M576.3,272.6V269.9M576.3,296.0V306.5M576.8,272.6V269.6M576.8,295.8V298.5M577.3,272.7V268.8M577.3,297.2V299.1M577.8,272.2V269.2M577.8,296.4V306.6M578.3,272.3V271.2M578.3,296.3V298.7M578.8,272.6V270.7M578.8,296.1V298.6M579.3,272.1V268.2M579.3,295.7V296.9M579.8,273.0V270.8M580.3,273.0V269.5M580.3,296.2V302.2M580.8,272.0V270.7M580.8,296.1V305.9M581.3,296.5V298.9M581.8,272.3V269.3M582.3,271.8V270.4M582.8,272.9V271.4M582.8,295.7V297.7M583.3,272.4V269.0M583.3,296.5V302.8M583.8,273.0V270.2M583.8,296.4V302.5M584.3,273.0V269.2M584.3,297.5V298.8M584.8,296.2V299.6M585.3,271.2V269.0M585.3,296.2V297.8M585.8,272.6V271.0M585.8,296.2V301.1M586.3,273.3V269.4M586.3,295.9V307.9M586.8,271.1V264.6M586.8,295.5V301.9M587.3,272.5V270.8M587.3,295.6V297.2M587.8,272.2V267.9M587.8,296.9V304.7M589.3,272.5V265.7M589.3,296.2V297.3M589.8,295.6V297.0M590.3,271.8V262.5M590.3,295.4V298.7M590.8,272.3V263.9M590.8,295.5V298.8M591.8,296.8V299.1M592.3,296.0V298.6M592.8,272.3V269.4M592.8,296.9V307.7M593.3,272.0V270.3M593.3,296.5V303.3M593.8,272.4V270.4M594.3,272.0V268.1M594.3,296.3V299.7M594.8,271.0V269.4M594.8,297.6V302.3M595.3,271.9V265.2M595.3,296.4V301.5M595.8,272.1V268.9M595.8,296.2V297.7M596.3,296.9V307.0M596.8,273.6V272.1M596.8,295.9V296.9M597.3,272.9V268.1M597.3,296.4V307.4M597.8,272.1V269.0M597.8,296.5V298.6M598.3,272.8V269.5M598.8,272.7V268.3M598.8,296.2V301.0M599.3,272.9V269.1M599.3,297.1V301.9M599.8,271.7V268.7M599.8,296.3V300.0M600.3,272.7V265.8M600.3,297.9V299.9M600.8,271.8V268.8M600.8,296.5V300.8M601.8,271.5V265.4M601.8,298.2V304.0M602.8,271.6V268.7M602.8,296.4V298.3M603.3,272.3V268.9M603.3,296.3V297.3M603.8,271.6V269.7M604.3,272.3V263.7M604.3,297.3V300.1M604.8,273.0V271.2M604.8,295.9V302.1M605.3,272.8V270.8M605.3,297.0V298.2M605.8,272.2V270.9M605.8,296.3V301.3M606.3,272.9V271.8M606.3,296.5V297.9M606.8,273.1V269.9M607.3,295.4V298.0M607.8,271.6V259.6M607.8,296.7V299.8M608.3,271.6V267.4M608.3,296.5V299.4M608.8,272.0V268.5M610.3,272.8V271.0M610.3,297.2V301.7M610.8,272.8V271.4M610.8,296.5V303.9M611.3,272.9V267.1M611.3,297.2V298.4M611.8,272.4V271.1M611.8,296.7V298.2M612.3,272.9V266.2M612.3,296.3V300.9M612.8,271.8V268.3M612.8,296.3V301.6M613.3,272.0V268.9M613.8,271.5V268.8M613.8,295.3V299.8M614.3,272.7V270.8M614.3,296.3V298.6M614.8,271.3V266.9M615.8,272.5V269.7M615.8,296.8V304.5M616.3,272.9V271.3M616.3,296.3V297.9M616.8,272.5V268.2M616.8,296.3V297.4M617.3,272.7V268.4M617.3,295.6V306.8M617.8,272.2V260.2M617.8,295.2V298.9M618.3,273.6V272.0M618.3,297.1V298.2M618.8,296.1V298.1M619.3,296.2V301.9M619.8,272.4V267.8M619.8,295.7V301.0M620.3,272.3V270.8M620.3,297.3V298.5M620.8,272.3V270.7M620.8,297.1V301.2M621.3,271.6V268.5M621.3,297.2V306.0M621.8,272.2V269.0M621.8,296.3V298.6M622.3,296.9V303.5M622.8,272.6V271.1M623.3,272.1V269.6M623.8,270.9V258.9M623.8,295.7V299.4M624.3,272.0V270.2M624.3,296.7V302.1M624.8,270.8V267.0M624.8,295.7V296.9M625.3,271.5V266.0M625.3,295.7V303.4M625.8,272.2V269.7M625.8,295.9V305.1M626.3,270.5V268.0M626.3,295.7V297.2M626.8,271.7V270.6M626.8,296.1V300.5M627.3,295.6V297.2M627.8,271.3V268.1M627.8,296.1V308.1M628.3,272.5V270.2M628.3,296.2V297.4M628.8,270.9V265.2M628.8,296.5V299.0M629.3,271.8V270.3M629.3,295.8V300.8M629.8,296.9V303.4M630.3,273.0V269.1M630.3,295.8V297.3M630.8,272.4V269.1M631.3,272.0V269.5M631.3,296.8V298.2M631.8,272.5V265.7M631.8,298.0V305.8M632.3,273.0V270.9M632.8,273.3V261.3M633.3,271.9V270.3M633.3,296.9V299.9M633.8,272.0V270.6M633.8,296.5V297.7M634.3,272.9V271.7M634.3,296.9V298.7M634.8,273.0V269.6M634.8,296.9V299.6M635.3,296.7V303.3M635.8,295.8V297.6M636.3,296.4V299.4M636.8,296.2V297.9M637.3,271.8V269.7M637.8,272.0V267.9M638.3,272.4V271.0M638.3,296.3V301.2M638.8,296.1V299.0M639.3,273.6V269.9M639.3,296.2V299.4M639.8,296.3V299.3M640.3,272.2V262.3M640.3,296.5V300.2M640.8,296.1V304.8M641.3,273.0V269.5M641.3,295.9V297.2M641.8,272.9V271.0M642.3,272.5V269.9M642.3,295.8V301.4M642.8,272.9V268.6M642.8,295.6V297.8M643.3,296.5V304.8M643.8,272.2V270.3M643.8,296.3V300.3M644.3,271.5V270.1M644.3,296.1V299.5M644.8,272.4V262.2M645.3,295.8V305.3M645.8,271.4V263.3M645.8,296.0V307.2M646.3,271.2V268.0M646.3,295.1V299.9M646.8,272.2V264.7M646.8,296.4V299.7M647.3,271.6V267.7M647.3,296.4V308.4M647.8,271.2V267.9M647.8,295.9V307.9M648.3,270.8V266.9M648.3,295.7V298.7M648.8,271.3V267.6M648.8,297.1V301.3M649.3,296.4V300.6M649.8,271.6V269.3M649.8,296.4V300.9M650.3,272.1V270.2M650.3,297.8V300.2M650.8,273.0V270.4M650.8,296.0V300.4M651.3,272.9V271.5M651.3,295.7V298.0M651.8,272.1V270.7M651.8,294.9V302.4M652.3,272.1V267.1M652.3,296.5V300.4M652.8,273.2V268.5M653.3,296.6V298.3M653.8,272.5V260.5M653.8,295.7V302.5M654.3,272.0V267.6M654.8,272.7V269.6M654.8,295.6V296.6M655.3,273.3V268.1M655.3,295.6V300.0M655.8,272.4V269.1M656.3,271.2V269.0M656.3,295.9V298.3M656.8,270.8V268.5M656.8,296.7V299.4M657.3,270.6V263.3M657.3,296.1V308.1M657.8,272.3V265.9M658.3,271.4V268.5M658.3,295.2V307.2M658.8,271.3V268.9M658.8,295.0V298.4M659.3,271.6V268.7M659.3,295.5V307.5M659.8,271.3V265.4M660.3,296.9V299.6M660.8,270.2V258.2M660.8,297.1V300.6M661.3,271.5V268.6M661.3,297.6V299.5M661.8,271.1V270.1M661.8,295.9V299.5M662.3,272.2V269.9M662.3,296.7V301.8M662.8,271.9V267.6M662.8,297.0V305.1M663.8,272.5V266.5M663.8,296.7V303.2M664.3,272.4V269.3M664.8,272.1V268.0M664.8,297.3V298.4M665.3,272.1V270.9M665.8,272.0V269.8M666.3,272.1V268.2M666.3,296.4V298.9M666.8,296.1V298.8M667.3,271.7V268.9M667.3,296.9V300.5M667.8,272.1V267.9M667.8,295.7V297.5M668.3,271.2V268.8M668.3,297.1V298.8M668.8,270.9V264.7M668.8,296.7V299.7M669.3,271.0V266.1M669.3,296.5V298.4M669.8,271.1V268.9M669.8,296.7V300.1M670.3,271.4V266.0M670.3,296.7V308.7M670.8,271.6V265.8M670.8,296.0V302.1M671.3,271.6V265.9M671.3,296.6V298.1M671.8,272.7V264.9M671.8,297.2V299.4M672.3,272.9V271.4M672.3,296.5V299.4M672.8,272.2V271.0M672.8,296.4V298.9M673.3,297.7V298.9M673.8,272.1V264.9M673.8,297.5V302.3M674.3,272.9V266.6M674.3,296.6V298.4M674.8,272.2V270.0M675.3,272.3V263.0M675.3,296.1V307.9M675.8,272.5V269.0M675.8,296.1V302.5M676.3,297.1V301.6M676.8,270.7V269.1M676.8,296.0V297.2M677.3,296.5V299.2M677.8,297.2V298.3M678.3,296.9V303.1M678.8,272.6V268.7M678.8,296.8V306.1M679.3,270.7V263.4M679.3,296.8V300.3M679.8,273.2V271.5M679.8,297.3V298.7M680.3,297.0V299.7M680.8,270.7V263.2M680.8,296.3V297.7M681.3,271.7V264.0M682.3,270.8V269.3M682.3,296.1V297.5M682.8,296.0V300.0M683.3,271.1V269.5M683.3,296.2V302.6M683.8,270.9V268.1M683.8,296.9V299.6M684.3,271.6V269.0M684.3,296.4V297.7M684.8,272.3V270.2M684.8,296.0V301.1M685.3,270.7V269.3M685.3,295.5V297.0M685.8,269.6V266.3M685.8,296.5V297.9M686.3,271.9V270.3M686.3,297.5V305.9M686.8,270.3V266.0M686.8,298.1V301.4M687.3,271.8V267.3M687.3,296.6V298.1M687.8,296.1V300.6M688.3,295.9V307.7M688.8,272.3V266.8M688.8,295.9V303.8M689.3,272.6V271.4M689.3,296.4V300.3M689.8,271.1V268.9M689.8,296.8V298.3M690.3,271.7V265.0M690.8,271.4V269.5M690.8,297.4V300.6M691.3,272.2V269.7M691.3,296.7V299.2M691.8,272.4V271.4M692.3,272.4V269.9M692.3,296.7V297.9M692.8,272.1V269.6M692.8,297.3V302.0M693.3,272.2V267.3M693.3,296.7V297.8M693.8,272.3V270.0M693.8,297.7V304.9M694.3,272.2V269.8M694.3,297.6V305.0M694.8,272.3V267.4M694.8,298.4V300.6M695.3,272.1V267.8M695.8,271.0V266.6M695.8,297.1V298.7M696.3,271.5V270.3M696.8,271.2V269.4M696.8,297.3V300.2M697.3,270.4V267.9M697.3,297.0V298.2M697.8,272.1V269.4M697.8,296.6V298.1M698.3,270.4V268.7M698.3,296.9V299.2M698.8,270.7V268.9M698.8,296.6V299.4M699.3,272.0V266.2M699.3,295.7V298.2M699.8,271.5V269.0M700.3,271.6V269.5M700.8,271.3V264.7M700.8,295.9V300.3M701.3,271.9V262.4M701.3,297.6V299.8M701.8,270.9V267.2M701.8,297.1V303.4M702.3,270.9V268.8M702.8,271.1V261.3M703.8,271.5V269.7M703.8,295.4V297.7M704.3,270.8V264.8M704.3,295.3V298.0M704.8,270.0V267.9M704.8,295.5V299.0M705.3,270.5V268.5M705.3,298.0V300.0M705.8,271.9V266.2M705.8,296.9V298.0M706.3,270.8V265.0M706.3,296.7V299.0M706.8,297.2V298.2M707.3,270.5V267.4M707.3,297.2V298.2M707.8,270.6V269.3M708.3,271.2V266.8M708.3,296.7V299.2M708.8,271.0V263.6M708.8,295.9V303.4M709.3,271.9V270.2M709.3,296.3V301.3M709.8,271.2V266.7M709.8,296.2V305.3M710.3,272.0V270.9M710.3,296.4V300.7M710.8,270.4V269.0M711.3,271.4V268.5M711.3,295.0V297.5M711.8,271.8V265.8M711.8,295.2V300.1M712.8,271.6V268.4M713.3,272.9V270.5M713.3,296.8V298.9M713.8,272.0V269.4M713.8,297.2V303.2M714.3,271.9V259.9M714.3,297.1V300.4M714.8,296.9V301.8M715.3,271.3V269.2M715.3,296.3V301.7M715.8,271.4V266.8M715.8,296.4V303.4M716.3,270.2V267.6M716.3,296.7V299.6M716.8,271.0V268.1M716.8,296.0V298.7M717.3,271.4V268.1M717.8,272.3V268.8M717.8,297.3V298.4M718.3,272.5V267.7M718.3,296.5V297.7M718.8,271.4V269.1M718.8,297.2V298.7M719.3,271.9V260.9M719.3,297.3V305.9M719.8,271.8V267.5M719.8,297.1V301.5M720.8,272.1V270.3M720.8,297.9V299.0M721.3,271.7V270.0M721.3,297.2V304.2M721.8,271.1V269.6M721.8,297.0V304.3M722.3,271.7V270.3M722.3,296.3V299.7M722.8,271.6V270.2M722.8,297.6V299.2M723.3,271.3V269.9M723.3,296.3V298.7M723.8,271.8V269.2M723.8,296.4V303.6M724.3,271.5V270.4M724.8,271.2V269.3M725.3,270.9V268.4M725.8,270.9V269.2M725.8,296.9V300.9M726.3,271.7V268.3M726.3,297.9V299.2M726.8,272.0V264.1M726.8,297.1V300.8M727.3,271.6V268.4M727.3,297.2V298.6M727.8,271.0V263.9M727.8,297.2V302.6M728.3,297.7V300.4M728.8,298.7V308.4M729.3,271.6V269.9M729.3,297.5V302.4M729.8,272.3V267.1M729.8,297.7V308.1M730.3,271.7V263.5M730.3,298.0V299.1M730.8,297.4V302.0M731.3,271.4V269.8M731.3,297.0V301.5M731.8,271.3V267.3M731.8,297.1V298.3M732.3,271.8V265.8M732.3,296.3V306.7M732.8,296.9V305.3M733.3,271.6V263.6M733.3,297.6V300.1M733.8,271.5V270.0M733.8,297.0V304.2M734.3,271.8V270.8M734.3,298.3V304.5M734.8,272.7V270.4M735.3,272.9V271.1M735.3,296.6V300.1M735.8,272.1V271.1M735.8,297.0V298.1M736.3,271.3V269.7M736.8,271.0V267.9M736.8,297.2V302.9M737.3,296.9V297.9M737.8,271.3V265.2M737.8,297.6V301.4M738.3,272.4V267.7M738.3,296.9V301.3M738.8,272.0V268.7M738.8,297.4V299.4M739.3,270.3V267.1M739.3,298.2V301.6M739.8,271.6V269.9M739.8,296.6V298.6M740.3,272.3V269.6M740.3,296.8V299.5M740.8,271.9V267.1M740.8,296.8V298.5M741.3,296.8V299.4M741.8,272.2V270.9M741.8,298.8V299.8M742.3,272.1V264.9M742.3,297.3V299.9M742.8,272.2V269.2M743.3,271.7V267.5M743.3,297.4V299.6M743.8,271.3V267.2M743.8,296.9V299.9M744.3,271.2V260.0M744.8,271.3V268.7M744.8,296.8V299.8M745.3,271.0V269.2M745.3,297.2V300.1M745.8,270.7V269.5M745.8,296.5V305.3M746.3,271.6V266.6M746.3,296.2V297.4M746.8,297.3V298.4M747.3,271.9V269.5M747.3,297.6V298.7M747.8,272.4V263.9M747.8,297.0V303.9M748.3,272.1V269.6M748.3,296.6V297.8M748.8,296.9V300.9M749.3,272.1V269.1M749.3,298.8V301.1M749.8,271.7V267.7M750.3,272.1V267.8M750.3,297.5V299.4M750.8,298.5V303.6M751.3,271.7V269.5M751.3,296.5V300.8M751.8,297.8V299.4M752.3,271.2V267.7M752.3,297.3V299.1M752.8,270.6V268.4M752.8,296.5V301.6M753.3,271.6V266.0M753.8,271.4V270.1M753.8,296.7V298.0M754.3,296.5V298.6M754.8,272.0V268.3M755.3,271.2V269.2M755.3,296.3V302.5M755.8,271.8V267.9M756.3,272.4V269.8M756.3,296.0V297.2M756.8,271.3V267.3M756.8,297.3V299.2M757.3,270.5V262.9M757.3,296.0V298.2M757.8,270.9V265.4M757.8,297.4V300.3M758.3,271.1V269.4M758.3,297.2V301.7M758.8,297.4V300.0M759.3,271.6V270.2M759.3,296.9V300.9M759.8,272.1V268.0M759.8,297.9V300.4M760.3,298.0V310.0M760.8,271.4V269.1M760.8,296.9V299.9M761.3,271.3V269.8M761.3,297.4V302.1M761.8,297.4V298.5M762.3,270.6V268.8M762.3,297.0V304.0M762.8,270.9V267.8M763.3,296.8V301.3M763.8,297.1V299.9M764.3,272.7V270.0M764.3,298.0V299.8M764.8,271.9V268.6M765.3,297.3V303.6M765.8,271.3V262.0M765.8,297.5V303.9M766.3,272.4V271.1M766.3,296.6V299.4M766.8,272.6V267.5M766.8,297.4V298.4M767.3,272.1V265.0M767.8,271.5V267.7M767.8,297.7V298.8M768.3,271.7V269.7M768.3,297.3V301.5M768.8,271.4V267.6M768.8,298.4V307.0M769.3,271.7V267.8M769.3,298.5V305.0M769.8,271.7V268.7M770.3,272.4V267.8M770.3,298.3V300.4M770.8,271.1V268.7M770.8,298.1V299.3M771.3,271.8V268.2M771.3,297.1V300.2M771.8,272.3V269.8M771.8,297.4V298.5M772.3,271.7V262.2M772.3,296.4V301.4M772.8,271.6V269.9M772.8,296.3V298.8M773.3,271.9V269.3M773.3,297.9V302.9M773.8,272.2V264.3M774.3,271.2V265.7M774.3,297.5V299.4M774.8,271.2V269.4M774.8,297.6V302.1M775.3,270.0V268.2M775.3,297.0V309.0M775.8,271.7V270.3M775.8,297.0V309.0M776.3,271.3V263.9M776.3,297.4V309.4M776.8,271.8V268.9M776.8,297.3V300.7M777.3,272.6V269.0M777.8,272.2V265.9M777.8,297.8V300.9M778.3,272.4V271.0M778.8,272.7V260.7M778.8,296.6V298.8M779.3,272.6V265.9M779.3,297.6V299.2M779.8,272.3V270.1M779.8,297.6V298.9M780.3,271.5V270.3M780.3,297.0V298.1M780.8,297.1V301.5M781.3,296.7V298.0M781.8,271.3V267.4M781.8,296.4V298.5M782.3,271.4V266.3M782.3,297.1V307.0M782.8,272.6V268.1M782.8,296.9V303.8M783.3,272.0V269.1M783.3,297.3V299.8M783.8,296.2V304.3M784.3,270.6V269.5M784.3,296.7V301.5M784.8,296.7V298.1M785.3,297.0V298.6M785.8,271.7V269.3M785.8,296.7V298.5M786.8,271.0V259.9M786.8,296.3V304.1M787.3,271.8V268.4M787.8,271.1V267.1M788.3,271.9V270.3M788.3,297.5V309.5M788.8,297.1V302.5M789.3,271.9V270.0M789.3,297.0V298.2M789.8,271.4V270.3M790.3,271.5V269.1M790.3,296.4V304.0M790.8,270.4V268.6M790.8,296.5V298.1M791.3,270.9V266.2M791.3,296.0V299.8M791.8,271.2V270.0M791.8,297.2V308.9M792.3,271.7V266.5M792.3,297.1V298.2M792.8,297.1V298.2M793.3,272.1V268.3M793.3,298.1V299.9M793.8,272.4V271.0M793.8,296.9V299.7M794.3,272.0V266.6M794.3,296.0V305.3M794.8,272.0V269.5M794.8,297.9V304.2M795.3,271.8V267.3M795.8,271.3V269.5M795.8,297.3V299.0M796.3,271.3V270.2M796.3,298.5V302.7M796.8,271.1V265.0M796.8,297.6V300.9M797.3,271.7V269.7M797.3,297.2V303.5M797.8,271.6V270.0M797.8,298.1V299.9M798.8,271.4V267.1M798.8,297.9V300.1M799.3,271.6V269.9M799.3,299.0V301.0M799.8,271.5V265.8M799.8,297.6V300.9M800.3,270.7V258.7M800.3,298.2V301.2M800.8,270.4V263.2M800.8,297.6V299.1M801.3,269.7V264.2M801.3,298.4V301.6M801.8,271.0V264.3M802.3,271.0V268.2M802.3,298.3V300.2M802.8,271.1V265.8M802.8,297.5V302.2M803.3,269.9V266.4M803.3,296.9V298.4M803.8,271.6V267.2M803.8,297.2V304.2M804.3,272.4V271.1M804.8,270.2V265.1M804.8,297.3V299.3M805.3,271.9V270.2M805.3,298.1V301.3M805.8,271.4V266.7M805.8,297.6V302.1M806.3,270.9V268.2M806.3,298.5V300.9M806.8,271.8V269.9M806.8,297.2V299.3M807.3,270.1V263.7M807.3,298.0V303.7M807.8,270.5V267.4M807.8,298.0V308.4M808.8,270.2V268.7M808.8,297.2V299.3M809.3,271.3V268.3M809.3,296.6V299.6M809.8,270.5V269.5M809.8,296.9V300.5M810.3,271.2V268.5M810.3,297.3V300.7M810.8,296.4V299.0M811.3,270.9V269.5M811.3,297.1V298.2M811.8,297.2V309.2M812.3,270.2V268.7M812.3,297.6V301.9M812.8,269.6V257.6M812.8,298.5V300.2M813.3,270.8V269.4M813.3,297.8V299.6M813.8,270.9V268.4M813.8,298.0V299.2M814.3,271.3V264.1M814.3,297.6V299.7M814.8,271.1V269.7M814.8,297.7V299.9M815.3,271.5V268.5M815.3,298.5V304.1M815.8,270.3V268.4M815.8,297.8V299.4M816.3,271.0V269.3M816.8,271.1V261.2M817.3,272.3V264.1M817.3,297.4V304.8M817.8,271.8V269.9M818.8,270.3V263.5M818.8,297.3V300.4M819.3,272.0V267.8M819.3,298.2V301.0M819.8,269.8V265.7M819.8,298.4V305.1M820.3,271.6V270.6M820.3,298.7V300.2M820.8,271.0V267.3M820.8,297.1V299.1M821.3,270.9V267.6M821.3,297.8V299.8M821.8,270.6V269.3M821.8,296.7V299.1M822.3,270.7V269.2M822.3,296.1V299.6M822.8,270.8V267.2M822.8,297.9V299.9M823.3,270.1V269.0M823.3,298.0V303.6M823.8,270.8V266.6M824.3,270.6V262.3M824.3,298.5V308.9M824.8,271.3V262.1M824.8,297.9V300.0M825.3,297.7V298.7M825.8,272.4V266.1M825.8,298.7V301.1M826.8,272.1V270.5M826.8,297.8V302.8M827.3,270.7V269.2M827.3,296.6V308.6M827.8,271.4V268.8M827.8,297.4V298.7M828.3,271.3V270.1M828.3,296.6V298.2M828.8,270.3V268.7M828.8,298.5V310.1M829.3,271.5V265.2M829.3,298.2V299.9M829.8,269.1V266.5M829.8,297.7V299.2M830.3,269.8V263.3M830.8,297.7V303.4M831.3,270.8V266.8M831.8,270.3V269.3M831.8,297.8V302.7M832.3,270.6V268.8M832.8,270.2V267.7M832.8,296.9V304.7M833.3,296.8V299.7M833.8,271.8V268.9M833.8,296.8V298.9M834.3,272.0V270.3M834.3,297.3V302.0M834.8,271.3V265.3M834.8,298.3V300.1M835.3,270.6V263.0M835.3,296.7V300.0M835.8,272.1V262.4M835.8,296.5V299.1M836.3,271.1V268.4M836.3,297.3V301.0M836.8,297.1V298.6M837.3,296.5V300.0M837.8,270.1V262.8M837.8,297.1V301.6M838.3,270.9V268.5M838.8,272.0V270.7M839.3,297.6V301.5M839.8,272.1V269.1M839.8,297.8V303.1M840.3,270.9V269.3M840.3,297.8V300.2M840.8,271.5V269.8M840.8,298.7V310.4M841.3,271.6V266.3M841.8,270.7V266.6M841.8,298.6V310.6M842.3,271.7V268.7M842.3,297.4V300.2M842.8,272.0V269.0M843.3,271.3V269.0M843.3,297.3V298.9M843.8,270.9V269.8M843.8,297.8V300.1M844.3,271.5V267.7M844.3,298.1V299.3M844.8,270.9V266.3M844.8,297.6V300.9M845.3,271.5V265.9M845.8,271.5V269.0M845.8,297.6V298.9M846.3,271.4V267.6M846.3,297.5V305.0M846.8,271.9V269.7M846.8,297.8V301.6M847.3,297.5V302.0M847.8,297.1V304.9M848.3,297.5V298.8M848.8,270.7V266.6M848.8,297.4V303.5M849.3,271.4V270.4M849.8,297.0V301.6M850.3,270.1V268.2M850.3,297.5V298.8M850.8,270.5V268.5M850.8,297.6V299.1M851.8,297.1V298.3M852.3,270.5V268.4M852.8,297.4V309.4M853.3,297.4V301.5M853.8,270.7V269.4M853.8,297.0V302.3M854.3,297.5V304.3M854.8,271.3V266.6M854.8,297.5V309.5M855.3,270.5V262.5M855.3,297.3V308.0M855.8,270.5V269.4M855.8,297.3V298.7M856.3,270.9V268.0M856.3,298.1V300.2M856.8,270.7V267.0M856.8,297.8V301.3M857.3,271.1V268.4M857.3,297.9V300.3M857.8,270.3V268.0M857.8,297.6V300.3M858.3,298.3V302.4M858.8,270.2V268.0M858.8,297.8V301.8M859.3,271.0V269.6M859.8,298.0V299.2M860.3,270.6V268.6M860.3,299.8V301.5M860.8,269.8V268.5M861.3,297.9V300.6M861.8,271.8V264.8M861.8,298.8V304.8M862.3,270.9V269.2M862.3,296.7V298.8M862.8,270.4V268.9M862.8,297.3V299.0M863.3,270.9V269.4M863.3,297.5V298.9M863.8,270.5V269.3M863.8,298.6V305.7M864.3,299.2V303.9M864.8,270.7V265.3M864.8,298.5V301.0M865.3,270.0V268.5M865.3,297.8V304.4M865.8,271.1V267.5M865.8,298.0V304.5M866.3,270.9V269.8M866.3,297.9V299.3M866.8,270.5V262.7M867.3,270.9V267.7M867.3,297.5V300.2M867.8,271.9V270.7M867.8,297.7V300.8M868.3,270.7V269.6M868.3,296.6V298.8M868.8,271.0V267.9M868.8,296.1V306.3M869.3,271.8V268.5M869.3,295.8V297.2M869.8,297.4V300.8M870.8,271.3V267.9M871.3,270.0V265.7M871.3,297.6V299.3M871.8,271.2V266.7M872.3,270.7V266.4M872.3,297.1V299.6M872.8,270.0V264.0M872.8,297.7V301.0M873.3,271.1V268.5M873.3,297.0V299.8M873.8,297.8V299.6M874.3,271.3V269.8M874.8,270.9V266.9M874.8,299.1V302.9M875.3,297.5V309.5M875.8,271.5V259.5M876.3,271.0V269.7M876.3,297.8V299.2M876.8,271.6V262.8M876.8,298.6V300.4M877.3,271.3V269.2M877.3,299.0V301.1M877.8,298.6V299.9M878.3,299.0V300.7M878.8,269.9V265.4M878.8,298.7V299.8M879.3,269.4V257.4M879.3,298.9V301.5M879.8,270.6V269.5M879.8,299.3V301.5M880.3,270.7V269.5M880.3,298.8V306.4M880.8,270.6V267.5M880.8,297.8V307.4M881.3,271.9V266.2M881.8,271.4V265.7M881.8,297.5V300.4M882.3,271.5V267.4M882.3,298.8V301.3M882.8,271.0V268.4M882.8,299.0V302.1M883.3,270.7V265.9M883.3,298.5V303.9M884.3,271.2V264.7M884.3,297.4V300.3M884.8,271.1V265.8M884.8,297.5V299.0M885.3,298.2V299.5M885.8,269.9V267.1M885.8,297.2V300.6M886.3,270.9V268.0M886.3,297.6V300.3M886.8,297.0V298.6M887.3,270.1V268.7M887.3,297.1V308.3M887.8,271.6V270.5M887.8,297.3V305.4M888.3,271.1V269.5M888.8,271.4V269.8M889.3,270.3V268.9M889.3,300.4V304.9M889.8,271.3V268.1M890.3,270.7V269.5M890.8,297.5V301.0M891.3,271.3V265.7M891.3,297.5V299.3M891.8,270.5V265.9M891.8,298.2V299.5M892.3,271.0V269.4M892.3,297.9V301.6M892.8,270.6V269.4M892.8,298.2V299.4M893.3,298.2V300.3M893.8,298.9V303.0M894.3,270.6V265.1M894.3,298.2V299.8M894.8,269.6V266.1M894.8,297.7V300.3M895.3,298.3V301.0M895.8,271.5V269.3M896.3,269.5V267.0M896.3,297.7V304.6M896.8,269.4V267.4M896.8,297.8V306.3M897.3,271.4V270.1M897.3,298.4V305.6M897.8,270.8V266.6M898.3,271.4V269.4M898.3,297.6V299.0M898.8,300.6V304.0M899.3,270.2V266.1M899.8,270.2V264.3M899.8,297.2V298.2M900.3,297.9V301.2M900.8,268.4V266.0M900.8,297.3V299.4M901.8,270.5V264.9M901.8,298.2V301.5M902.3,298.6V300.3M902.8,298.7V301.7M903.3,271.3V262.2M904.3,271.3V266.7M904.3,298.4V303.0M904.8,270.3V266.8M904.8,298.3V299.4M905.3,270.3V265.3M905.3,299.5V300.9M905.8,270.9V268.8M905.8,299.0V300.6M906.3,269.2V264.5M906.3,299.4V308.7M906.8,298.8V301.6M907.3,270.4V267.1M907.3,297.9V299.5M907.8,269.9V265.0M907.8,297.7V298.9M908.3,268.2V266.5M908.3,298.3V300.1M908.8,269.1V267.9M908.8,297.3V301.4M909.3,270.5V268.5M909.3,297.8V307.5M909.8,271.0V269.3M909.8,297.9V299.2M910.3,297.7V300.8M910.8,271.4V264.2M910.8,298.4V299.8M911.3,271.6V267.2M911.3,297.8V299.4M911.8,298.2V299.6M912.3,269.9V266.0M912.3,297.8V299.9M912.8,271.1V269.9M912.8,297.6V301.2M913.3,271.3V269.8M913.3,298.8V305.9M913.8,270.8V264.9M913.8,298.1V303.9M914.3,271.9V269.6M914.8,297.9V302.9M915.3,269.8V266.7M915.3,298.5V300.9M915.8,270.3V267.5M916.3,270.5V267.5M916.3,299.4V300.4M916.8,271.0V267.8M916.8,298.5V302.7M917.3,269.8V267.9M917.3,298.4V301.5M917.8,271.0V268.9M917.8,298.7V305.8M918.3,271.6V269.0M918.3,298.5V300.4M918.8,270.4V265.1M919.3,270.5V268.7M919.3,299.7V301.3M919.8,271.0V267.5M919.8,299.1V307.3M920.3,270.7V266.2M920.3,298.6V302.2M920.8,270.6V269.6M920.8,300.0V303.6M921.8,269.5V264.1M921.8,297.6V303.7M922.3,268.6V264.9M922.8,270.3V266.4M922.8,297.4V301.7M923.3,270.8V261.6M923.3,298.4V299.7M923.8,270.2V268.0M923.8,297.7V300.5M924.8,269.4V265.6M924.8,298.8V301.0M925.3,269.9V265.5M925.3,299.3V304.1M925.8,270.5V267.7M925.8,298.7V306.3M926.3,269.8V267.8M926.3,298.0V307.5M926.8,269.3V267.0M926.8,297.8V303.1M927.3,270.7V268.9M927.3,299.6V303.3M927.8,271.4V268.2M927.8,298.5V300.2M928.8,271.4V267.5M928.8,298.2V308.7M929.3,271.0V268.2M929.3,298.4V300.6M929.8,270.4V264.0M929.8,297.8V299.0M930.3,270.3V265.8M930.3,298.5V300.0M930.8,271.1V269.9M930.8,297.7V299.4M931.8,270.4V267.7M931.8,297.6V298.9M932.3,270.5V267.3M932.3,298.5V300.1M933.3,271.5V267.1M933.3,297.4V300.2M933.8,298.1V300.6M934.3,269.6V266.9M934.3,299.6V303.1M935.8,269.8V267.9M936.3,269.9V266.4M936.3,300.7V302.5M936.8,299.7V307.0M937.3,269.1V267.6M937.3,298.1V302.4M937.8,297.9V302.6M938.3,270.3V268.4M938.3,298.1V300.1M938.8,271.0V269.2M938.8,299.9V307.9M939.3,269.5V268.4M939.3,300.6V303.9M939.8,270.0V268.4M939.8,298.4V302.7M940.3,271.5V267.4M940.3,298.9V302.5M940.8,269.1V267.0M941.3,270.6V268.6M941.3,298.8V310.8M941.8,270.9V269.5M941.8,299.3V301.0M942.3,299.0V310.5M942.8,297.8V308.6M943.3,271.1V270.0M943.3,298.0V300.7M943.8,270.3V268.9M944.3,271.5V270.1M944.3,298.1V300.4M944.8,270.3V269.2M944.8,298.3V299.4M945.3,270.5V268.7M945.8,271.3V264.7M945.8,299.0V300.4M946.3,270.7V269.0M946.3,298.5V301.8M946.8,270.6V269.4M946.8,298.3V302.9M947.3,270.4V265.9M947.3,299.8V301.0M947.8,299.1V311.1M948.3,271.2V267.5M948.3,298.6V299.9M948.8,271.4V267.6M948.8,298.8V303.5M949.3,271.4V269.8M949.3,298.4V302.3M949.8,270.7V266.0M949.8,298.9V301.4M950.3,271.0V269.6M950.3,299.7V300.9M950.8,271.5V266.4M951.3,271.7V259.7" stroke="#2196f3" stroke-width="0.9" fill="none" opacity="0.8"/>
<path d="M81.6,275V240.4M85.5,275V248.5M99.6,275V259.6M116.4,275V253.0M234.6,275V255.4M252.3,275V254.0M278.4,275V253.0M307.2,275V235.0M300.0,275V258.4M351.0,275V256.6M354.0,275V260.5M388.0,275V257.5M393.0,275V248.5M500.0,275V259.0M546.6,275V248.0M558.6,275V218.5M584.0,275V247.0M605.0,275V247.0M610.5,275V231.4M615.3,275V207.0M626.0,275V259.0M633.6,275V234.4M637.5,275V253.0M641.4,275V253.6M644.4,275V250.0M658.0,275V245.0M694.5,275V225.4M702.6,275V244.0M736.5,275V259.6M782.4,275V258.4M792.0,275V256.6M888.6,275V230.0M912.0,275V261.0M925.5,275V256.0M947.0,275V254.0M942.0,275V258.0M62.4,293V317.5M81.6,293V312.4M209.4,293V313.6M236.4,293V311.5M278.4,293V321.0M307.2,293V312.4M351.0,293V310.0M382.5,293V312.4M418.5,293V311.5M558.6,293V307.0M605.0,293V318.4M610.5,293V312.4M644.4,293V315.4M658.0,293V310.0M782.4,293V314.5M825.0,293V311.5M904.5,293V314.5M947.0,293V312.0" stroke="#2196f3" stroke-width="0.9" fill="none" opacity="0.85"/>
<path d="M60.8,292V284.9L63.8,284.85L66.8,284.97L69.8,285.02L72.8,284.84L75.8,284.70L78.8,284.85L81.8,284.98L84.8,285.09L87.8,284.88L90.8,284.86L93.8,284.85L96.8,284.94L99.8,284.71L102.8,285.07L105.8,285.08L108.8,284.71L111.8,284.70L114.8,284.83L117.8,284.76L120.8,285.01L123.8,285.05L126.8,284.92L129.8,285.08L132.8,284.79L135.8,284.78L138.8,284.85L141.8,284.88L144.8,284.78L147.8,285.07L150.8,285.00L153.8,284.82L156.8,284.79L159.8,284.81L162.8,284.86L165.8,284.96L168.8,285.01L171.8,285.08L174.8,284.73L177.8,284.78L180.8,284.85L183.8,285.08L186.8,284.88L189.8,284.99L192.8,285.03L195.8,284.88L198.8,284.85L201.8,285.01L204.8,284.96L207.8,285.10L210.8,284.81L213.8,285.08L216.8,284.89L219.8,285.05L222.8,284.96L225.8,284.93L228.8,285.04L231.8,284.73L234.8,284.81L237.8,284.90L240.8,285.03L243.8,284.77L246.8,285.01L249.8,284.74L252.8,284.84L255.8,284.89L258.8,284.99L261.8,284.91L264.8,285.04L267.8,284.98L270.8,284.85L273.8,284.91L276.8,284.86L279.8,285.05L282.8,284.82L285.8,284.77L288.8,284.80L291.8,284.80L294.8,285.02L297.8,284.97L300.8,284.80L303.8,284.87L306.8,285.06L309.8,285.08L312.8,284.79L315.8,285.08L318.8,284.72L321.8,285.10L324.8,284.83L327.8,285.08L330.8,284.71L333.8,284.98L336.8,285.07L339.8,285.03L342.8,284.93L345.8,284.76L348.8,284.79L351.8,285.08L354.8,285.05L357.8,284.79L360.8,284.84L363.8,284.95L366.8,284.82L369.8,284.79L372.8,285.05L375.8,284.74L378.8,284.95L381.8,284.86L384.8,284.89L387.8,285.05L390.8,285.00L393.8,285.01L396.8,284.71L399.8,285.02L402.8,285.02L405.8,284.70L408.8,284.79L411.8,284.99L414.8,285.05L417.8,284.92L420.8,285.06L423.8,284.74L426.8,284.80L429.8,285.03L432.8,285.02L435.8,284.79L438.8,284.93L441.8,284.88L444.8,285.00L447.8,284.86L450.8,284.83L453.8,285.00L456.8,284.98L459.8,284.84L462.8,284.99L465.8,284.80L468.8,284.90L471.8,284.78L474.8,284.84L477.8,284.87L480.8,284.74L483.8,284.82L486.8,284.84L489.8,284.83L492.8,284.90L495.8,285.06L498.8,285.04L501.8,284.82L504.8,284.75L507.8,284.74L510.8,285.05L513.8,285.00L516.8,285.00L519.8,285.06L522.8,284.86L525.8,284.77L528.8,284.74L531.8,284.86L534.8,285.01L537.8,284.73L540.8,284.88L543.8,284.73L546.8,284.79L549.8,284.92L552.8,284.96L555.8,285.08L558.8,284.83L561.8,284.79L564.8,284.72L567.8,284.78L570.8,284.71L573.8,284.70L576.8,284.75L579.8,284.91L582.8,284.88L585.8,285.06L588.8,284.89L591.8,284.73L594.8,284.76L597.8,284.98L600.8,285.09L603.8,285.00L606.8,284.79L609.8,284.84L612.8,284.87L615.8,284.87L618.8,284.81L621.8,284.76L624.8,284.71L627.8,285.05L630.8,285.09L633.8,285.09L636.8,284.85L639.8,284.97L642.8,284.78L645.8,284.75L648.8,284.70L651.8,284.83L654.8,285.02L657.8,284.91L660.8,284.79L663.8,284.89L666.8,284.92L669.8,284.78L672.8,284.88L675.8,285.07L678.8,284.88L681.8,285.10L684.8,284.99L687.8,284.75L690.8,285.07L693.8,284.98L696.8,284.88L699.8,284.78L702.8,284.96L705.8,284.78L708.8,284.88L711.8,284.76L714.8,284.87L717.8,285.09L720.8,284.94L723.8,284.91L726.8,284.95L729.8,284.96L732.8,284.94L735.8,284.81L738.8,284.79L741.8,284.94L744.8,285.07L747.8,285.05L750.8,284.90L753.8,284.82L756.8,284.93L759.8,284.72L762.8,284.90L765.8,285.01L768.8,285.09L771.8,284.74L774.8,284.78L777.8,284.89L780.8,284.94L783.8,285.09L786.8,284.74L789.8,284.75L792.8,284.89L795.8,285.02L798.8,284.71L801.8,284.85L804.8,284.98L807.8,284.87L810.8,284.77L813.8,284.73L816.8,285.00L819.8,284.90L822.8,284.92L825.8,284.97L828.8,285.01L831.8,284.86L834.8,284.85L837.8,285.07L840.8,284.73L843.8,285.01L846.8,284.88L849.8,284.91L852.8,284.80L855.8,285.08L858.8,284.82L861.8,284.83L864.8,284.72L867.8,285.06L870.8,285.03L873.8,284.72L876.8,284.76L879.8,284.82L882.8,284.71L885.8,284.90L888.8,285.04L891.8,284.99L894.8,284.90L897.8,285.09L900.8,284.82L903.8,284.83L906.8,284.81L909.8,284.94L912.8,284.89L915.8,284.75L918.8,284.90L921.8,285.09L924.8,285.05L927.8,284.95L930.8,285.04L933.8,284.89L936.8,284.90L939.8,284.98L942.8,284.78L945.8,284.94L948.8,284.90L951.3,284.82" stroke="#857572" stroke-width="1.3" fill="none"/>
<path d="M80.7,284.9L81.6,282.4L82.5,284.9L81.6,287.4ZM84.6,284.9L85.5,282.9L86.4,284.9L85.5,286.9ZM98.7,284.9L99.6,283.5L100.5,284.9L99.6,286.3ZM115.5,284.9L116.4,283.1L117.3,284.9L116.4,286.7ZM233.7,284.9L234.6,283.3L235.5,284.9L234.6,286.5ZM251.4,284.9L252.3,283.2L253.2,284.9L252.3,286.6ZM277.5,284.9L278.4,283.1L279.3,284.9L278.4,286.7ZM306.3,284.9L307.2,282.1L308.1,284.9L307.2,287.7ZM299.1,284.9L300.0,283.4L300.9,284.9L300.0,286.4ZM350.1,284.9L351.0,283.3L351.9,284.9L351.0,286.5ZM353.1,284.9L354.0,283.5L354.9,284.9L354.0,286.3ZM387.1,284.9L388.0,283.4L388.9,284.9L388.0,286.4ZM392.1,284.9L393.0,282.9L393.9,284.9L393.0,286.9ZM499.1,284.9L500.0,283.5L500.9,284.9L500.0,286.3ZM545.7,284.9L546.6,282.8L547.5,284.9L546.6,287.0ZM557.7,284.9L558.6,281.7L559.5,284.9L558.6,288.1ZM583.1,284.9L584.0,282.8L584.9,284.9L584.0,287.0ZM604.1,284.9L605.0,282.8L605.9,284.9L605.0,287.0ZM609.6,284.9L610.5,281.9L611.4,284.9L610.5,287.9ZM614.4,284.9L615.3,281.7L616.2,284.9L615.3,288.1ZM625.1,284.9L626.0,283.5L626.9,284.9L626.0,286.3ZM632.7,284.9L633.6,282.1L634.5,284.9L633.6,287.7ZM636.6,284.9L637.5,283.1L638.4,284.9L637.5,286.7ZM640.5,284.9L641.4,283.2L642.3,284.9L641.4,286.6ZM643.5,284.9L644.4,283.0L645.3,284.9L644.4,286.8ZM657.1,284.9L658.0,282.7L658.9,284.9L658.0,287.1ZM693.6,284.9L694.5,281.7L695.4,284.9L694.5,288.1ZM701.7,284.9L702.6,282.6L703.5,284.9L702.6,287.2ZM735.6,284.9L736.5,283.5L737.4,284.9L736.5,286.3ZM781.5,284.9L782.4,283.4L783.3,284.9L782.4,286.4ZM791.1,284.9L792.0,283.3L792.9,284.9L792.0,286.5ZM887.7,284.9L888.6,281.8L889.5,284.9L888.6,288.0ZM911.1,284.9L912.0,283.6L912.9,284.9L912.0,286.2ZM924.6,284.9L925.5,283.3L926.4,284.9L925.5,286.5ZM946.1,284.9L947.0,283.2L947.9,284.9L947.0,286.6ZM941.1,284.9L942.0,283.4L942.9,284.9L942.0,286.4ZM61.5,284.9L62.4,283.1L63.3,284.9L62.4,286.7ZM80.7,284.9L81.6,283.4L82.5,284.9L81.6,286.4ZM208.5,284.9L209.4,283.3L210.3,284.9L209.4,286.5ZM235.5,284.9L236.4,283.4L237.3,284.9L236.4,286.4ZM277.5,284.9L278.4,282.9L279.3,284.9L278.4,286.9ZM306.3,284.9L307.2,283.4L308.1,284.9L307.2,286.4ZM350.1,284.9L351.0,283.5L351.9,284.9L351.0,286.3ZM381.6,284.9L382.5,283.4L383.4,284.9L382.5,286.4ZM417.6,284.9L418.5,283.4L419.4,284.9L418.5,286.4ZM557.7,284.9L558.6,283.7L559.5,284.9L558.6,286.1ZM604.1,284.9L605.0,283.0L605.9,284.9L605.0,286.8ZM609.6,284.9L610.5,283.4L611.4,284.9L610.5,286.4ZM643.5,284.9L644.4,283.2L645.3,284.9L644.4,286.6ZM657.1,284.9L658.0,283.5L658.9,284.9L658.0,286.3ZM781.5,284.9L782.4,283.3L783.3,284.9L782.4,286.5ZM824.1,284.9L825.0,283.4L825.9,284.9L825.0,286.4ZM903.6,284.9L904.5,283.3L905.4,284.9L904.5,286.5ZM946.1,284.9L947.0,283.4L947.9,284.9L947.0,286.4Z" fill="#857572" opacity="0.85"/>
</svg>
<div class="a" style="left:440.4px;top:419.5px;width:7.6px;height:1.2px;background:#2196f3"></div>
<div class="a" style="left:492px;top:419.5px;width:8px;height:1.2px;background:#a08a7f"></div>
<div class="a" style="left:45.6px;top:416px;width:0;height:0;border-left:2.1px solid transparent;border-right:2.1px solid transparent;border-top:2.2px solid #555"></div>
<div class="a" style="left:9px;top:423.6px;width:41px;height:1.2px;background:#bdbdbd"></div>

<div class="a" style="left:983.5px;top:1.5px;width:15.1px;height:597px;background:#ececec"></div>
<svg class="a" style="left:983px;top:5px" width="14" height="10" viewBox="0 0 14 10"><path d="M9.6,2 L7.2,4.8 L9.6,7.6" stroke="#9a9a9a" stroke-width="1.2" fill="none"/></svg>

<div class="a" style="left:1px;top:433.3px;width:982.5px;height:2px;background:#e5e5e5"></div>

<div style="position:absolute;left:115.8px;top:443px;width:1px;height:133px;background:#d8d8d8"></div>
<div style="position:absolute;left:169.0px;top:443px;width:1px;height:133px;background:#d8d8d8"></div>
<div style="position:absolute;left:222.2px;top:443px;width:1px;height:133px;background:#d8d8d8"></div>
<div style="position:absolute;left:275.4px;top:443px;width:1px;height:133px;background:#d8d8d8"></div>
<div style="position:absolute;left:328.6px;top:443px;width:1px;height:133px;background:#d8d8d8"></div>
<div style="position:absolute;left:381.7px;top:443px;width:1px;height:133px;background:#d8d8d8"></div>
<div style="position:absolute;left:62.5px;top:443px;width:1px;height:133px;background:#e4e4e4"></div>
<div class="bar" style="top:444.3px;width:95.7px"></div>
<div class="bar" style="top:461.0px;width:108.2px"></div>
<div class="bar" style="top:477.7px;width:120.6px"></div>
<div class="bar" style="top:494.3px;width:124.1px"></div>
<div class="bar" style="top:511.0px;width:143.6px"></div>
<div class="bar" style="top:527.7px;width:129.4px"></div>
<div class="bar" style="top:544.4px;width:136.5px"></div>
<div class="bar" style="top:561.1px;width:292.5px"></div>
<div class="a" style="left:190.8px;top:589.5px;width:15px;height:5px;border-radius:2.5px;background:#cde5f8"></div>
<div class="a" style="left:196.8px;top:587.2px;width:8.8px;height:8.8px;border-radius:50%;background:#2196f3"></div>

<div class="a" style="left:472.4px;top:439.2px;width:36.2px;height:12.3px;background:#dedede"></div>
<div class="a" style="left:471.2px;top:451.2px;width:218.6px;height:145px;background:#f8f8f8;border:1px solid #d3d3d3;overflow:hidden">
  <div class="a" style="left:0;top:0;width:217px;height:12.9px;background:#fafbfc;border-bottom:1px solid #e6e6e6"></div>
  <div class="a" style="left:207.8px;top:12.5px;width:9.2px;height:132px;background:#f4f5f6"></div>
  <div class="a" style="left:208px;top:21px;width:8.4px;height:95px;background:#c8c8c8"></div>
  <svg class="a" style="left:207.8px;top:14.5px" width="9" height="8"><path d="M4.5,1.8V5.6M3.2,3.1L4.5,1.8L5.8,3.1" stroke="#b0b0b0" stroke-width="0.7" fill="none"/></svg>
  <svg class="a" style="left:207.8px;top:135px" width="9" height="8"><path d="M4.5,1.8V5.6M3.2,4.3L4.5,5.6L5.8,4.3" stroke="#b0b0b0" stroke-width="0.7" fill="none"/></svg>
</div>
<div class="a" style="left:0;top:0;width:1000px;height:596px;clip-path:inset(464.5px 310px 0 472px)">
<div class="a" style="left:472.2px;top:476.07px;width:208px;height:1px;background:#e3e3e3"></div>
<div style="position:absolute;top:468.00px;font-size:6.7px;line-height:6.7px;font-weight:400;color:#2a2a2a;white-space:pre;-webkit-text-stroke:0.1px #2a2a2a;left:476.30px;transform:scaleX(0.89);transform-origin:0 0;word-spacing:0.7px">CPU load (%)</div>
<div style="position:absolute;top:468.00px;font-size:6.7px;line-height:6.7px;font-weight:400;color:#2a2a2a;white-space:pre;-webkit-text-stroke:0.1px #2a2a2a;left:561.50px;transform:scaleX(0.89);transform-origin:0 0;word-spacing:0.7px">13</div>
<div style="position:absolute;top:468.00px;font-size:6.7px;line-height:6.7px;font-weight:400;color:#2a2a2a;white-space:pre;-webkit-text-stroke:0.1px #2a2a2a;left:596.60px;transform:scaleX(0.89);transform-origin:0 0;word-spacing:0.7px">59</div>
<div style="position:absolute;top:468.00px;font-size:6.7px;line-height:6.7px;font-weight:400;color:#2a2a2a;white-space:pre;-webkit-text-stroke:0.1px #2a2a2a;left:631.30px;transform:scaleX(0.89);transform-origin:0 0;word-spacing:0.7px">74</div>
<div class="a" style="left:472.2px;top:488.24px;width:208px;height:1px;background:#e3e3e3"></div>
<div style="position:absolute;top:480.00px;font-size:6.7px;line-height:6.7px;font-weight:400;color:#2a2a2a;white-space:pre;-webkit-text-stroke:0.1px #2a2a2a;left:476.30px;transform:scaleX(0.89);transform-origin:0 0;word-spacing:0.7px">CPU max thread load (%)</div>
<div style="position:absolute;top:480.00px;font-size:6.7px;line-height:6.7px;font-weight:400;color:#2a2a2a;white-space:pre;-webkit-text-stroke:0.1px #2a2a2a;left:561.50px;transform:scaleX(0.89);transform-origin:0 0;word-spacing:0.7px">59</div>
<div style="position:absolute;top:480.00px;font-size:6.7px;line-height:6.7px;font-weight:400;color:#2a2a2a;white-space:pre;-webkit-text-stroke:0.1px #2a2a2a;left:596.60px;transform:scaleX(0.89);transform-origin:0 0;word-spacing:0.7px">79</div>
<div style="position:absolute;top:480.00px;font-size:6.7px;line-height:6.7px;font-weight:400;color:#2a2a2a;white-space:pre;-webkit-text-stroke:0.1px #2a2a2a;left:631.30px;transform:scaleX(0.89);transform-origin:0 0;word-spacing:0.7px">99</div>
<div class="a" style="left:472.2px;top:500.41px;width:208px;height:1px;background:#e3e3e3"></div>
<div style="position:absolute;top:492.00px;font-size:6.7px;line-height:6.7px;font-weight:400;color:#2a2a2a;white-space:pre;-webkit-text-stroke:0.1px #2a2a2a;left:476.30px;transform:scaleX(0.89);transform-origin:0 0;word-spacing:0.7px">CPU max clock (MHz)</div>
<div style="position:absolute;top:492.00px;font-size:6.7px;line-height:6.7px;font-weight:400;color:#2a2a2a;white-space:pre;-webkit-text-stroke:0.1px #2a2a2a;left:561.50px;transform:scaleX(0.89);transform-origin:0 0;word-spacing:0.7px">5300</div>
<div style="position:absolute;top:492.00px;font-size:6.7px;line-height:6.7px;font-weight:400;color:#2a2a2a;white-space:pre;-webkit-text-stroke:0.1px #2a2a2a;left:596.60px;transform:scaleX(0.89);transform-origin:0 0;word-spacing:0.7px">5300</div>
<div style="position:absolute;top:492.00px;font-size:6.7px;line-height:6.7px;font-weight:400;color:#2a2a2a;white-space:pre;-webkit-text-stroke:0.1px #2a2a2a;left:631.30px;transform:scaleX(0.89);transform-origin:0 0;word-spacing:0.7px">5300</div>
<div class="a" style="left:472.2px;top:512.58px;width:208px;height:1px;background:#e3e3e3"></div>
<div style="position:absolute;top:504.00px;font-size:6.7px;line-height:6.7px;font-weight:400;color:#2a2a2a;white-space:pre;-webkit-text-stroke:0.1px #2a2a2a;left:476.30px;transform:scaleX(0.89);transform-origin:0 0;word-spacing:0.7px">CPU power (W)</div>
<div style="position:absolute;top:504.00px;font-size:6.7px;line-height:6.7px;font-weight:400;color:#2a2a2a;white-space:pre;-webkit-text-stroke:0.1px #2a2a2a;left:561.50px;transform:scaleX(0.89);transform-origin:0 0;word-spacing:0.7px">52</div>
<div style="position:absolute;top:504.00px;font-size:6.7px;line-height:6.7px;font-weight:400;color:#2a2a2a;white-space:pre;-webkit-text-stroke:0.1px #2a2a2a;left:596.60px;transform:scaleX(0.89);transform-origin:0 0;word-spacing:0.7px">132</div>
<div style="position:absolute;top:504.00px;font-size:6.7px;line-height:6.7px;font-weight:400;color:#2a2a2a;white-space:pre;-webkit-text-stroke:0.1px #2a2a2a;left:631.30px;transform:scaleX(0.89);transform-origin:0 0;word-spacing:0.7px">180</div>
<div class="a" style="left:472.2px;top:524.75px;width:208px;height:1px;background:#e3e3e3"></div>
<div style="position:absolute;top:517.00px;font-size:6.7px;line-height:6.7px;font-weight:400;color:#2a2a2a;white-space:pre;-webkit-text-stroke:0.1px #2a2a2a;left:476.30px;transform:scaleX(0.89);transform-origin:0 0;word-spacing:0.7px">CPU temp (°C)</div>
<div style="position:absolute;top:517.00px;font-size:6.7px;line-height:6.7px;font-weight:400;color:#2a2a2a;white-space:pre;-webkit-text-stroke:0.1px #2a2a2a;left:561.50px;transform:scaleX(0.89);transform-origin:0 0;word-spacing:0.7px">59</div>
<div style="position:absolute;top:517.00px;font-size:6.7px;line-height:6.7px;font-weight:400;color:#2a2a2a;white-space:pre;-webkit-text-stroke:0.1px #2a2a2a;left:596.60px;transform:scaleX(0.89);transform-origin:0 0;word-spacing:0.7px">74</div>
<div style="position:absolute;top:517.00px;font-size:6.7px;line-height:6.7px;font-weight:400;color:#2a2a2a;white-space:pre;-webkit-text-stroke:0.1px #2a2a2a;left:631.30px;transform:scaleX(0.89);transform-origin:0 0;word-spacing:0.7px">84</div>
<div class="a" style="left:472.2px;top:536.92px;width:208px;height:1px;background:#e3e3e3"></div>
<div style="position:absolute;top:529.00px;font-size:6.7px;line-height:6.7px;font-weight:400;color:#2a2a2a;white-space:pre;-webkit-text-stroke:0.1px #2a2a2a;left:476.30px;transform:scaleX(0.89);transform-origin:0 0;word-spacing:0.7px">GPU load (%)</div>
<div style="position:absolute;top:529.00px;font-size:6.7px;line-height:6.7px;font-weight:400;color:#2a2a2a;white-space:pre;-webkit-text-stroke:0.1px #2a2a2a;left:561.50px;transform:scaleX(0.89);transform-origin:0 0;word-spacing:0.7px">0</div>
<div style="position:absolute;top:529.00px;font-size:6.7px;line-height:6.7px;font-weight:400;color:#2a2a2a;white-space:pre;-webkit-text-stroke:0.1px #2a2a2a;left:596.60px;transform:scaleX(0.89);transform-origin:0 0;word-spacing:0.7px">76</div>
<div style="position:absolute;top:529.00px;font-size:6.7px;line-height:6.7px;font-weight:400;color:#2a2a2a;white-space:pre;-webkit-text-stroke:0.1px #2a2a2a;left:631.30px;transform:scaleX(0.89);transform-origin:0 0;word-spacing:0.7px">88</div>
<div class="a" style="left:472.2px;top:549.09px;width:208px;height:1px;background:#e3e3e3"></div>
<div style="position:absolute;top:541.00px;font-size:6.7px;line-height:6.7px;font-weight:400;color:#2a2a2a;white-space:pre;-webkit-text-stroke:0.1px #2a2a2a;left:476.30px;transform:scaleX(0.89);transform-origin:0 0;word-spacing:0.7px">Time in GPU load limit (%)</div>
<div style="position:absolute;top:541.00px;font-size:6.7px;line-height:6.7px;font-weight:400;color:#2a2a2a;white-space:pre;-webkit-text-stroke:0.1px #2a2a2a;left:561.50px;transform:scaleX(0.89);transform-origin:0 0;word-spacing:0.7px">0</div>
<div style="position:absolute;top:541.00px;font-size:6.7px;line-height:6.7px;font-weight:400;color:#2a2a2a;white-space:pre;-webkit-text-stroke:0.1px #2a2a2a;left:596.60px;transform:scaleX(0.89);transform-origin:0 0;word-spacing:0.7px">0</div>
<div style="position:absolute;top:541.00px;font-size:6.7px;line-height:6.7px;font-weight:400;color:#2a2a2a;white-space:pre;-webkit-text-stroke:0.1px #2a2a2a;left:631.30px;transform:scaleX(0.89);transform-origin:0 0;word-spacing:0.7px">0</div>
<div class="a" style="left:472.2px;top:561.26px;width:208px;height:1px;background:#e3e3e3"></div>
<div style="position:absolute;top:553.00px;font-size:6.7px;line-height:6.7px;font-weight:400;color:#2a2a2a;white-space:pre;-webkit-text-stroke:0.1px #2a2a2a;left:476.30px;transform:scaleX(0.89);transform-origin:0 0;word-spacing:0.7px">GPU clock (MHz)</div>
<div style="position:absolute;top:553.00px;font-size:6.7px;line-height:6.7px;font-weight:400;color:#2a2a2a;white-space:pre;-webkit-text-stroke:0.1px #2a2a2a;left:561.50px;transform:scaleX(0.89);transform-origin:0 0;word-spacing:0.7px">780</div>
<div style="position:absolute;top:553.00px;font-size:6.7px;line-height:6.7px;font-weight:400;color:#2a2a2a;white-space:pre;-webkit-text-stroke:0.1px #2a2a2a;left:596.60px;transform:scaleX(0.89);transform-origin:0 0;word-spacing:0.7px">2556</div>
<div style="position:absolute;top:553.00px;font-size:6.7px;line-height:6.7px;font-weight:400;color:#2a2a2a;white-space:pre;-webkit-text-stroke:0.1px #2a2a2a;left:631.30px;transform:scaleX(0.89);transform-origin:0 0;word-spacing:0.7px">2580</div>
<div class="a" style="left:472.2px;top:573.43px;width:208px;height:1px;background:#e3e3e3"></div>
<div style="position:absolute;top:565.00px;font-size:6.7px;line-height:6.7px;font-weight:400;color:#2a2a2a;white-space:pre;-webkit-text-stroke:0.1px #2a2a2a;left:476.30px;transform:scaleX(0.89);transform-origin:0 0;word-spacing:0.7px">GPU power (W)</div>
<div style="position:absolute;top:565.00px;font-size:6.7px;line-height:6.7px;font-weight:400;color:#2a2a2a;white-space:pre;-webkit-text-stroke:0.1px #2a2a2a;left:561.50px;transform:scaleX(0.89);transform-origin:0 0;word-spacing:0.7px">47</div>
<div style="position:absolute;top:565.00px;font-size:6.7px;line-height:6.7px;font-weight:400;color:#2a2a2a;white-space:pre;-webkit-text-stroke:0.1px #2a2a2a;left:596.60px;transform:scaleX(0.89);transform-origin:0 0;word-spacing:0.7px">180</div>
<div style="position:absolute;top:565.00px;font-size:6.7px;line-height:6.7px;font-weight:400;color:#2a2a2a;white-space:pre;-webkit-text-stroke:0.1px #2a2a2a;left:631.30px;transform:scaleX(0.89);transform-origin:0 0;word-spacing:0.7px">206</div>
<div class="a" style="left:472.2px;top:585.60px;width:208px;height:1px;background:#e3e3e3"></div>
<div style="position:absolute;top:577.00px;font-size:6.7px;line-height:6.7px;font-weight:400;color:#2a2a2a;white-space:pre;-webkit-text-stroke:0.1px #2a2a2a;left:476.30px;transform:scaleX(0.89);transform-origin:0 0;word-spacing:0.7px">GPU temp. (°C)</div>
<div style="position:absolute;top:577.00px;font-size:6.7px;line-height:6.7px;font-weight:400;color:#2a2a2a;white-space:pre;-webkit-text-stroke:0.1px #2a2a2a;left:561.50px;transform:scaleX(0.89);transform-origin:0 0;word-spacing:0.7px">45</div>
<div style="position:absolute;top:577.00px;font-size:6.7px;line-height:6.7px;font-weight:400;color:#2a2a2a;white-space:pre;-webkit-text-stroke:0.1px #2a2a2a;left:596.60px;transform:scaleX(0.89);transform-origin:0 0;word-spacing:0.7px">51</div>
<div style="position:absolute;top:577.00px;font-size:6.7px;line-height:6.7px;font-weight:400;color:#2a2a2a;white-space:pre;-webkit-text-stroke:0.1px #2a2a2a;left:631.30px;transform:scaleX(0.89);transform-origin:0 0;word-spacing:0.7px">52</div>
<div class="a" style="left:472.2px;top:597.77px;width:208px;height:1px;background:#e3e3e3"></div>
<div style="position:absolute;top:590.00px;font-size:6.7px;line-height:6.7px;font-weight:400;color:#2a2a2a;white-space:pre;-webkit-text-stroke:0.1px #2a2a2a;left:476.30px;transform:scaleX(0.89);transform-origin:0 0;word-spacing:0.7px">GPU VRAM usage (GB)</div>
<div style="position:absolute;top:590.00px;font-size:6.7px;line-height:6.7px;font-weight:400;color:#2a2a2a;white-space:pre;-webkit-text-stroke:0.1px #2a2a2a;left:561.50px;transform:scaleX(0.89);transform-origin:0 0;word-spacing:0.7px">4.69</div>
<div style="position:absolute;top:590.00px;font-size:6.7px;line-height:6.7px;font-weight:400;color:#2a2a2a;white-space:pre;-webkit-text-stroke:0.1px #2a2a2a;left:596.60px;transform:scaleX(0.89);transform-origin:0 0;word-spacing:0.7px">5.76</div>
<div style="position:absolute;top:590.00px;font-size:6.7px;line-height:6.7px;font-weight:400;color:#2a2a2a;white-space:pre;-webkit-text-stroke:0.1px #2a2a2a;left:631.30px;transform:scaleX(0.89);transform-origin:0 0;word-spacing:0.7px">5.82</div>
</div>

<div class="a" style="left:693.3px;top:439px;width:36px;height:12.3px;background:#dedede"></div>
<div class="a" style="left:692px;top:451.2px;width:289px;height:145.5px;background:#ececec;border:1px solid #d3d3d3"></div>
<svg class="a" style="left:699.8px;top:455px" width="10" height="10" viewBox="0 0 24 24"><path fill="#222" d="M19.14 12.94c.04-.3.06-.61.06-.94 0-.32-.02-.64-.07-.94l2.03-1.58c.18-.14.23-.41.12-.61l-1.92-3.32c-.12-.22-.37-.29-.59-.22l-2.39.96c-.5-.38-1.030-.7-1.62-.94l-.36-2.54c-.04-.24-.24-.41-.48-.41h-3.84c-.24 0-.43.17-.47.41l-.36 2.54c-.59.24-1.13.57-1.62.94l-2.39-.96c-.22-.08-.47 0-.59.22L2.74 8.87c-.12.21-.08.47.12.61l2.03 1.58c-.05.3-.09.63-.09.94s.02.64.07.94l-2.03 1.58c-.18.14-.23.41-.12.61l1.920 3.32c.12.22.37.29.59.22l2.39-.96c.5.38 1.03.7 1.62.94l.36 2.54c.05.24.24.41.48.41h3.84c.24 0 .44-.17.47-.41l.36-2.54c.59-.24 1.13-.56 1.62-.94l2.39.96c.22.08.47 0 .59-.22l1.92-3.32c.12-.22.07-.47-.12-.61l-2.01-1.58zM12 15.6c-1.98 0-3.6-1.62-3.6-3.6s1.62-3.6 3.6-3.6 3.6 1.62 3.6 3.6-1.62 3.6-3.6 3.6z"/></svg>
<div class="a" style="left:699.4px;top:510.1px;width:7.3px;height:7.3px;border-radius:50%;background:#2196f3"></div>
<div class="a" style="left:699.4px;top:520px;width:7.3px;height:7.3px;border-radius:50%;background:#ffb300"></div>
<div class="a" style="left:699.4px;top:530.2px;width:7.3px;height:7.3px;border-radius:50%;background:#f40000"></div>
<svg class="a" style="left:0;top:0" width="1000" height="628">
<circle cx="882.35" cy="523.65" r="58.25" fill="#2196f3"/>
<defs><linearGradient id="sg" x1="0" y1="0" x2="0" y2="1"><stop offset="0" stop-color="#84689f" stop-opacity="0.95"/><stop offset="1" stop-color="#6f7fc0" stop-opacity="0.1"/></linearGradient></defs><polygon points="881.5,465.3 883.2,465.3 882.35,517" fill="url(#sg)"/>
</svg>

<div style="position:absolute;top:11.00px;font-size:9.6px;line-height:9.6px;font-weight:700;color:#1e1e1e;white-space:pre;left:485.20px;transform:scaleX(0.93);transform-origin:0 0;">bf6</div>
<div style="position:absolute;top:26.00px;font-size:6.3px;line-height:6.3px;font-weight:700;color:#1e1e1e;white-space:pre;-webkit-text-stroke:0.05px #1e1e1e;left:5.20px;transform:scaleX(0.85);transform-origin:0 0;">Frametimes</div>
<div style="position:absolute;top:26.00px;font-size:6.5px;line-height:6.5px;font-weight:400;color:#2a2a2a;white-space:pre;-webkit-text-stroke:0.1px #2a2a2a;left:50.60px;transform:scaleX(0.86);transform-origin:0 0;">FPS</div>
<div style="position:absolute;top:26.00px;font-size:6.5px;line-height:6.5px;font-weight:400;color:#2a2a2a;white-space:pre;-webkit-text-stroke:0.1px #2a2a2a;left:80.20px;transform:scaleX(0.9);transform-origin:0 0;">L-shape</div>
<div style="position:absolute;top:389.00px;font-size:7.1px;line-height:7.1px;font-weight:400;color:#3a3a3a;white-space:pre;-webkit-text-stroke:0.1px #3a3a3a;left:-169.60px;width:200px;text-align:right;transform:scaleX(0.9);transform-origin:100% 0;">0</div>
<div style="position:absolute;top:354.00px;font-size:7.1px;line-height:7.1px;font-weight:400;color:#3a3a3a;white-space:pre;-webkit-text-stroke:0.1px #3a3a3a;left:-169.60px;width:200px;text-align:right;transform:scaleX(0.9);transform-origin:100% 0;">2</div>
<div style="position:absolute;top:319.00px;font-size:7.1px;line-height:7.1px;font-weight:400;color:#3a3a3a;white-space:pre;-webkit-text-stroke:0.1px #3a3a3a;left:-169.60px;width:200px;text-align:right;transform:scaleX(0.9);transform-origin:100% 0;">4</div>
<div style="position:absolute;top:284.00px;font-size:7.1px;line-height:7.1px;font-weight:400;color:#3a3a3a;white-space:pre;-webkit-text-stroke:0.1px #3a3a3a;left:-169.60px;width:200px;text-align:right;transform:scaleX(0.9);transform-origin:100% 0;">6</div>
<div style="position:absolute;top:249.00px;font-size:7.1px;line-height:7.1px;font-weight:400;color:#3a3a3a;white-space:pre;-webkit-text-stroke:0.1px #3a3a3a;left:-169.60px;width:200px;text-align:right;transform:scaleX(0.9);transform-origin:100% 0;">8</div>
<div style="position:absolute;top:214.00px;font-size:7.1px;line-height:7.1px;font-weight:400;color:#3a3a3a;white-space:pre;-webkit-text-stroke:0.1px #3a3a3a;left:-169.60px;width:200px;text-align:right;transform:scaleX(0.9);transform-origin:100% 0;">10</div>
<div style="position:absolute;top:178.00px;font-size:7.1px;line-height:7.1px;font-weight:400;color:#3a3a3a;white-space:pre;-webkit-text-stroke:0.1px #3a3a3a;left:-169.60px;width:200px;text-align:right;transform:scaleX(0.9);transform-origin:100% 0;">12</div>
<div style="position:absolute;top:143.00px;font-size:7.1px;line-height:7.1px;font-weight:400;color:#3a3a3a;white-space:pre;-webkit-text-stroke:0.1px #3a3a3a;left:-169.60px;width:200px;text-align:right;transform:scaleX(0.9);transform-origin:100% 0;">14</div>
<div style="position:absolute;top:108.00px;font-size:7.1px;line-height:7.1px;font-weight:400;color:#3a3a3a;white-space:pre;-webkit-text-stroke:0.1px #3a3a3a;left:-169.60px;width:200px;text-align:right;transform:scaleX(0.9);transform-origin:100% 0;">16</div>
<div style="position:absolute;top:73.00px;font-size:7.1px;line-height:7.1px;font-weight:400;color:#3a3a3a;white-space:pre;-webkit-text-stroke:0.1px #3a3a3a;left:-169.60px;width:200px;text-align:right;transform:scaleX(0.9);transform-origin:100% 0;">18</div>
<div style="position:absolute;top:38.00px;font-size:7.1px;line-height:7.1px;font-weight:400;color:#3a3a3a;white-space:pre;-webkit-text-stroke:0.1px #3a3a3a;left:-169.60px;width:200px;text-align:right;transform:scaleX(0.9);transform-origin:100% 0;">20</div>
<div style="position:absolute;top:396.00px;font-size:7.1px;line-height:7.1px;font-weight:400;color:#3a3a3a;white-space:pre;-webkit-text-stroke:0.1px #3a3a3a;left:-39.20px;width:200px;text-align:center;transform:scaleX(0.88);transform-origin:50% 0;">0</div>
<div style="position:absolute;top:396.00px;font-size:7.1px;line-height:7.1px;font-weight:400;color:#3a3a3a;white-space:pre;-webkit-text-stroke:0.1px #3a3a3a;left:11.02px;width:200px;text-align:center;transform:scaleX(0.88);transform-origin:50% 0;">20</div>
<div style="position:absolute;top:396.00px;font-size:7.1px;line-height:7.1px;font-weight:400;color:#3a3a3a;white-space:pre;-webkit-text-stroke:0.1px #3a3a3a;left:61.24px;width:200px;text-align:center;transform:scaleX(0.88);transform-origin:50% 0;">40</div>
<div style="position:absolute;top:396.00px;font-size:7.1px;line-height:7.1px;font-weight:400;color:#3a3a3a;white-space:pre;-webkit-text-stroke:0.1px #3a3a3a;left:111.46px;width:200px;text-align:center;transform:scaleX(0.88);transform-origin:50% 0;">60</div>
<div style="position:absolute;top:396.00px;font-size:7.1px;line-height:7.1px;font-weight:400;color:#3a3a3a;white-space:pre;-webkit-text-stroke:0.1px #3a3a3a;left:161.68px;width:200px;text-align:center;transform:scaleX(0.88);transform-origin:50% 0;">80</div>
<div style="position:absolute;top:396.00px;font-size:7.1px;line-height:7.1px;font-weight:400;color:#3a3a3a;white-space:pre;-webkit-text-stroke:0.1px #3a3a3a;left:211.90px;width:200px;text-align:center;transform:scaleX(0.88);transform-origin:50% 0;">100</div>
<div style="position:absolute;top:396.00px;font-size:7.1px;line-height:7.1px;font-weight:400;color:#3a3a3a;white-space:pre;-webkit-text-stroke:0.1px #3a3a3a;left:262.12px;width:200px;text-align:center;transform:scaleX(0.88);transform-origin:50% 0;">120</div>
<div style="position:absolute;top:396.00px;font-size:7.1px;line-height:7.1px;font-weight:400;color:#3a3a3a;white-space:pre;-webkit-text-stroke:0.1px #3a3a3a;left:312.34px;width:200px;text-align:center;transform:scaleX(0.88);transform-origin:50% 0;">140</div>
<div style="position:absolute;top:396.00px;font-size:7.1px;line-height:7.1px;font-weight:400;color:#3a3a3a;white-space:pre;-webkit-text-stroke:0.1px #3a3a3a;left:362.56px;width:200px;text-align:center;transform:scaleX(0.88);transform-origin:50% 0;">160</div>
<div style="position:absolute;top:396.00px;font-size:7.1px;line-height:7.1px;font-weight:400;color:#3a3a3a;white-space:pre;-webkit-text-stroke:0.1px #3a3a3a;left:412.78px;width:200px;text-align:center;transform:scaleX(0.88);transform-origin:50% 0;">180</div>
<div style="position:absolute;top:396.00px;font-size:7.1px;line-height:7.1px;font-weight:400;color:#3a3a3a;white-space:pre;-webkit-text-stroke:0.1px #3a3a3a;left:463.00px;width:200px;text-align:center;transform:scaleX(0.88);transform-origin:50% 0;">200</div>
<div style="position:absolute;top:396.00px;font-size:7.1px;line-height:7.1px;font-weight:400;color:#3a3a3a;white-space:pre;-webkit-text-stroke:0.1px #3a3a3a;left:513.22px;width:200px;text-align:center;transform:scaleX(0.88);transform-origin:50% 0;">220</div>
<div style="position:absolute;top:396.00px;font-size:7.1px;line-height:7.1px;font-weight:400;color:#3a3a3a;white-space:pre;-webkit-text-stroke:0.1px #3a3a3a;left:563.44px;width:200px;text-align:center;transform:scaleX(0.88);transform-origin:50% 0;">240</div>
<div style="position:absolute;top:396.00px;font-size:7.1px;line-height:7.1px;font-weight:400;color:#3a3a3a;white-space:pre;-webkit-text-stroke:0.1px #3a3a3a;left:613.66px;width:200px;text-align:center;transform:scaleX(0.88);transform-origin:50% 0;">260</div>
<div style="position:absolute;top:396.00px;font-size:7.1px;line-height:7.1px;font-weight:400;color:#3a3a3a;white-space:pre;-webkit-text-stroke:0.1px #3a3a3a;left:663.88px;width:200px;text-align:center;transform:scaleX(0.88);transform-origin:50% 0;">280</div>
<div style="position:absolute;top:396.00px;font-size:7.1px;line-height:7.1px;font-weight:400;color:#3a3a3a;white-space:pre;-webkit-text-stroke:0.1px #3a3a3a;left:714.10px;width:200px;text-align:center;transform:scaleX(0.88);transform-origin:50% 0;">300</div>
<div style="position:absolute;top:396.00px;font-size:7.1px;line-height:7.1px;font-weight:400;color:#3a3a3a;white-space:pre;-webkit-text-stroke:0.1px #3a3a3a;left:764.32px;width:200px;text-align:center;transform:scaleX(0.88);transform-origin:50% 0;">320</div>
<div style="position:absolute;top:396.00px;font-size:7.1px;line-height:7.1px;font-weight:400;color:#3a3a3a;white-space:pre;-webkit-text-stroke:0.1px #3a3a3a;left:814.54px;width:200px;text-align:center;transform:scaleX(0.88);transform-origin:50% 0;">340</div>
<div style="position:absolute;top:407.00px;font-size:7.1px;line-height:7.1px;font-weight:400;color:#2a2a2a;white-space:pre;-webkit-text-stroke:0.1px #2a2a2a;left:392.00px;width:200px;text-align:center;transform:scaleX(0.9);transform-origin:50% 0;">Recording time [s]</div>
<div style="position:absolute;top:418.00px;font-size:6.4px;line-height:6.4px;font-weight:400;color:#2a2a2a;white-space:pre;-webkit-text-stroke:0.1px #2a2a2a;left:450.00px;transform:scaleX(0.9);transform-origin:0 0;">Frametimes</div>
<div style="position:absolute;top:418.00px;font-size:6.4px;line-height:6.4px;font-weight:400;color:#2a2a2a;white-space:pre;-webkit-text-stroke:0.1px #2a2a2a;left:501.50px;transform:scaleX(0.9);transform-origin:0 0;">Moving average</div>
<div style="position:absolute;top:407.00px;font-size:4.9px;line-height:4.9px;font-weight:400;color:#6a6a6a;white-space:pre;-webkit-text-stroke:0.05px #6a6a6a;left:9.00px;transform:scaleX(0.9);transform-origin:0 0;">Y-Axis scale</div>
<div style="position:absolute;top:414.00px;font-size:6.4px;line-height:6.4px;font-weight:400;color:#222;white-space:pre;-webkit-text-stroke:0.1px #222;left:9.00px;transform:scaleX(0.9);transform-origin:0 0;">0-20ms</div>
<div style="position:absolute;top:449.00px;font-size:6.6px;line-height:6.6px;font-weight:400;color:#2a2a2a;white-space:pre;-webkit-text-stroke:0.1px #2a2a2a;left:10.00px;transform:scaleX(0.89);transform-origin:0 0;">P5</div>
<div style="position:absolute;top:448.00px;font-size:6.6px;line-height:6.6px;font-weight:700;color:#1e1e1e;white-space:pre;-webkit-text-stroke:0.2px #1e1e1e;left:161.24px;transform:scaleX(0.84);transform-origin:0 0;">5.4</div>
<div style="position:absolute;top:465.00px;font-size:6.6px;line-height:6.6px;font-weight:400;color:#2a2a2a;white-space:pre;-webkit-text-stroke:0.1px #2a2a2a;left:10.00px;transform:scaleX(0.89);transform-origin:0 0;">Average</div>
<div style="position:absolute;top:465.00px;font-size:6.6px;line-height:6.6px;font-weight:700;color:#1e1e1e;white-space:pre;-webkit-text-stroke:0.2px #1e1e1e;left:173.65px;transform:scaleX(0.84);transform-origin:0 0;">6.1</div>
<div style="position:absolute;top:482.00px;font-size:6.6px;line-height:6.6px;font-weight:400;color:#2a2a2a;white-space:pre;-webkit-text-stroke:0.1px #2a2a2a;left:10.00px;transform:scaleX(0.89);transform-origin:0 0;">P95</div>
<div style="position:absolute;top:482.00px;font-size:6.6px;line-height:6.6px;font-weight:700;color:#1e1e1e;white-space:pre;-webkit-text-stroke:0.2px #1e1e1e;left:186.06px;transform:scaleX(0.84);transform-origin:0 0;">6.8</div>
<div style="position:absolute;top:499.00px;font-size:6.6px;line-height:6.6px;font-weight:400;color:#2a2a2a;white-space:pre;-webkit-text-stroke:0.1px #2a2a2a;left:10.00px;transform:scaleX(0.89);transform-origin:0 0;">P99</div>
<div style="position:absolute;top:499.00px;font-size:6.6px;line-height:6.6px;font-weight:700;color:#1e1e1e;white-space:pre;-webkit-text-stroke:0.2px #1e1e1e;left:189.61px;transform:scaleX(0.84);transform-origin:0 0;">7</div>
<div style="position:absolute;top:515.00px;font-size:6.6px;line-height:6.6px;font-weight:400;color:#2a2a2a;white-space:pre;-webkit-text-stroke:0.1px #2a2a2a;left:10.00px;transform:scaleX(0.89);transform-origin:0 0;">1% High Average</div>
<div style="position:absolute;top:515.00px;font-size:6.6px;line-height:6.6px;font-weight:700;color:#1e1e1e;white-space:pre;-webkit-text-stroke:0.2px #1e1e1e;left:209.11px;transform:scaleX(0.84);transform-origin:0 0;">8.1</div>
<div style="position:absolute;top:532.00px;font-size:6.6px;line-height:6.6px;font-weight:400;color:#2a2a2a;white-space:pre;-webkit-text-stroke:0.1px #2a2a2a;left:10.00px;transform:scaleX(0.89);transform-origin:0 0;">P99.8</div>
<div style="position:absolute;top:532.00px;font-size:6.6px;line-height:6.6px;font-weight:700;color:#1e1e1e;white-space:pre;-webkit-text-stroke:0.2px #1e1e1e;left:194.93px;transform:scaleX(0.84);transform-origin:0 0;">7.3</div>
<div style="position:absolute;top:549.00px;font-size:6.6px;line-height:6.6px;font-weight:400;color:#2a2a2a;white-space:pre;-webkit-text-stroke:0.1px #2a2a2a;left:10.00px;transform:scaleX(0.89);transform-origin:0 0;">P99.9</div>
<div style="position:absolute;top:549.00px;font-size:6.6px;line-height:6.6px;font-weight:700;color:#1e1e1e;white-space:pre;-webkit-text-stroke:0.2px #1e1e1e;left:202.02px;transform:scaleX(0.84);transform-origin:0 0;">7.7</div>
<div style="position:absolute;top:565.00px;font-size:6.6px;line-height:6.6px;font-weight:400;color:#2a2a2a;white-space:pre;-webkit-text-stroke:0.1px #2a2a2a;left:10.00px;transform:scaleX(0.89);transform-origin:0 0;">0.1% High Average</div>
<div style="position:absolute;top:565.00px;font-size:6.6px;line-height:6.6px;font-weight:700;color:#1e1e1e;white-space:pre;-webkit-text-stroke:0.2px #1e1e1e;left:358.05px;transform:scaleX(0.84);transform-origin:0 0;">16.5</div>
<div style="position:absolute;top:580.00px;font-size:6.5px;line-height:6.5px;font-weight:400;color:#3a3a3a;white-space:pre;-webkit-text-stroke:0.1px #3a3a3a;left:-36.80px;width:200px;text-align:center;transform:scaleX(0.9);transform-origin:50% 0;">0</div>
<div style="position:absolute;top:580.00px;font-size:6.5px;line-height:6.5px;font-weight:400;color:#3a3a3a;white-space:pre;-webkit-text-stroke:0.1px #3a3a3a;left:16.39px;width:200px;text-align:center;transform:scaleX(0.9);transform-origin:50% 0;">3</div>
<div style="position:absolute;top:580.00px;font-size:6.5px;line-height:6.5px;font-weight:400;color:#3a3a3a;white-space:pre;-webkit-text-stroke:0.1px #3a3a3a;left:69.58px;width:200px;text-align:center;transform:scaleX(0.9);transform-origin:50% 0;">6</div>
<div style="position:absolute;top:580.00px;font-size:6.5px;line-height:6.5px;font-weight:400;color:#3a3a3a;white-space:pre;-webkit-text-stroke:0.1px #3a3a3a;left:122.77px;width:200px;text-align:center;transform:scaleX(0.9);transform-origin:50% 0;">9</div>
<div style="position:absolute;top:580.00px;font-size:6.5px;line-height:6.5px;font-weight:400;color:#3a3a3a;white-space:pre;-webkit-text-stroke:0.1px #3a3a3a;left:175.96px;width:200px;text-align:center;transform:scaleX(0.9);transform-origin:50% 0;">12</div>
<div style="position:absolute;top:580.00px;font-size:6.5px;line-height:6.5px;font-weight:400;color:#3a3a3a;white-space:pre;-webkit-text-stroke:0.1px #3a3a3a;left:229.15px;width:200px;text-align:center;transform:scaleX(0.9);transform-origin:50% 0;">15</div>
<div style="position:absolute;top:580.00px;font-size:6.5px;line-height:6.5px;font-weight:400;color:#3a3a3a;white-space:pre;-webkit-text-stroke:0.1px #3a3a3a;left:282.34px;width:200px;text-align:center;transform:scaleX(0.9);transform-origin:50% 0;">18</div>
<div style="position:absolute;top:589.00px;font-size:6.5px;line-height:6.5px;font-weight:400;color:#2a2a2a;white-space:pre;-webkit-text-stroke:0.1px #2a2a2a;left:176.80px;transform:scaleX(0.86);transform-origin:0 0;">FPS</div>
<div style="position:absolute;top:589.00px;font-size:6.5px;line-height:6.5px;font-weight:400;color:#2a2a2a;white-space:pre;-webkit-text-stroke:0.1px #2a2a2a;left:208.00px;transform:scaleX(0.86);transform-origin:0 0;">ms</div>
<div style="position:absolute;top:442.00px;font-size:6.0px;line-height:6.0px;font-weight:700;color:#222;white-space:pre;left:475.00px;transform:scaleX(0.88);transform-origin:0 0;">Sensor data</div>
<div style="position:absolute;top:456.00px;font-size:6.7px;line-height:6.7px;font-weight:400;color:#2a2a2a;white-space:pre;-webkit-text-stroke:0.1px #2a2a2a;left:477.00px;transform:scaleX(0.92);transform-origin:0 0;">Sensor</div>
<div style="position:absolute;top:456.00px;font-size:6.7px;line-height:6.7px;font-weight:400;color:#2a2a2a;white-space:pre;-webkit-text-stroke:0.1px #2a2a2a;left:561.50px;transform:scaleX(0.92);transform-origin:0 0;">Min</div>
<div style="position:absolute;top:456.00px;font-size:6.7px;line-height:6.7px;font-weight:400;color:#2a2a2a;white-space:pre;-webkit-text-stroke:0.1px #2a2a2a;left:596.60px;transform:scaleX(0.92);transform-origin:0 0;">Average</div>
<div style="position:absolute;top:456.00px;font-size:6.7px;line-height:6.7px;font-weight:400;color:#2a2a2a;white-space:pre;-webkit-text-stroke:0.1px #2a2a2a;left:631.30px;transform:scaleX(0.92);transform-origin:0 0;">Max</div>
<div style="position:absolute;top:442.00px;font-size:6.0px;line-height:6.0px;font-weight:700;color:#222;white-space:pre;left:698.80px;transform:scaleX(0.88);transform-origin:0 0;">Stuttering</div>
<div style="position:absolute;top:442.00px;font-size:6.0px;line-height:6.0px;font-weight:700;color:#222;white-space:pre;left:734.90px;transform:scaleX(0.9);transform-origin:0 0;">Variances</div>
<div style="position:absolute;top:442.00px;font-size:6.0px;line-height:6.0px;font-weight:700;color:#222;white-space:pre;left:771.90px;transform:scaleX(0.88);transform-origin:0 0;">FPS thresholds</div>
<div style="position:absolute;top:457.00px;font-size:7.3px;line-height:7.3px;font-weight:400;color:#2a2a2a;white-space:pre;-webkit-text-stroke:0.1px #2a2a2a;left:715.00px;transform:scaleX(0.9);transform-origin:0 0;">Options</div>
<div style="position:absolute;top:512.00px;font-size:7.1px;line-height:7.1px;font-weight:700;color:#2a2a2a;white-space:pre;left:708.70px;transform:scaleX(0.92);transform-origin:0 0;">Smooth:  418.58s (99.9%)</div>
<div style="position:absolute;top:521.00px;font-size:7.1px;line-height:7.1px;font-weight:700;color:#2a2a2a;white-space:pre;left:708.70px;transform:scaleX(0.92);transform-origin:0 0;">Low FPS:  0s (0%)</div>
<div style="position:absolute;top:531.00px;font-size:7.1px;line-height:7.1px;font-weight:700;color:#2a2a2a;white-space:pre;left:708.70px;transform:scaleX(0.92);transform-origin:0 0;">Stuttering:  0.59s (0.1%)</div>
<div style="position:absolute;left:-8px;top:211.6px;width:46px;height:8px;transform:rotate(-90deg)"><div style="position:absolute;top:0.84px;font-size:6.8px;line-height:6.8px;font-weight:400;color:#2a2a2a;white-space:pre;-webkit-text-stroke:0.1px #2a2a2a;left:-77.00px;width:200px;text-align:center;transform:scaleX(0.9);transform-origin:50% 0;">Frametime [ms]</div></div>
<div style="position:absolute;left:966.7px;top:320.3px;width:50px;height:8px;transform:rotate(90deg)"><div style="position:absolute;top:0.42px;font-size:7.3px;line-height:7.3px;font-weight:400;color:#3a3a3a;white-space:pre;-webkit-text-stroke:0.1px #3a3a3a;left:-75.00px;width:200px;text-align:center;transform:scaleX(0.9);transform-origin:50% 0;">System Info</div></div>

<div class="a" style="left:0;top:598.5px;width:1000px;height:29.5px;background:#1e8be0"></div>
<svg class="a" style="left:0;top:598px" width="200" height="30" viewBox="0 598 200 30"><defs><filter id="sh" x="-20%" y="-20%" width="140%" height="160%"><feDropShadow dx="0.8" dy="1" stdDeviation="0.8" flood-color="#0a3a70" flood-opacity="0.45"/></filter></defs><g filter="url(#sh)" fill="none" stroke-width="1.35" stroke-linejoin="round"><path d="M20.0,609.5 A5.3,5.6 0 1 0 20.0,618.0" stroke="#ffffff"/><path d="M27.6,619.3 L32.6,608.2 L37.6,619.3 M29.4,616.0 L35.8,616.0" stroke="#ffffff"/><path d="M46.0,619.3 V608.2 H49.4 A3.5,3.45 0 0 1 49.4,615.1 H46.0" stroke="#ffffff"/><path d="M69.0,608.2 H61.6 V619.3 M61.6,613.45 H68.0" stroke="#3cf23c"/><path d="M77.0,619.3 V608.2 H80.6 A3.2,2.85 0 0 1 80.6,613.9000000000001 H77.0 M80.6,613.9000000000001 L84.6,619.3" stroke="#3cf23c"/><path d="M91.6,619.3 L96.8,608.2 L102.0,619.3 M93.3,615.9 L100.3,615.9" stroke="#3cf23c"/><path d="M110.3,619.3 V608.2 L116.0,618.0999999999999 L121.7,608.2 V619.3" stroke="#3cf23c"/><path d="M130.2,608.4000000000001 H137.8 M130.6,613.75 H137.4 M130.2,619.0999999999999 H137.8" stroke="#3cf23c"/><path d="M145.2,608.2 L154.8,619.3 M154.8,608.2 L145.2,619.3" stroke="#ffffff"/></g></svg>
</body></html>
